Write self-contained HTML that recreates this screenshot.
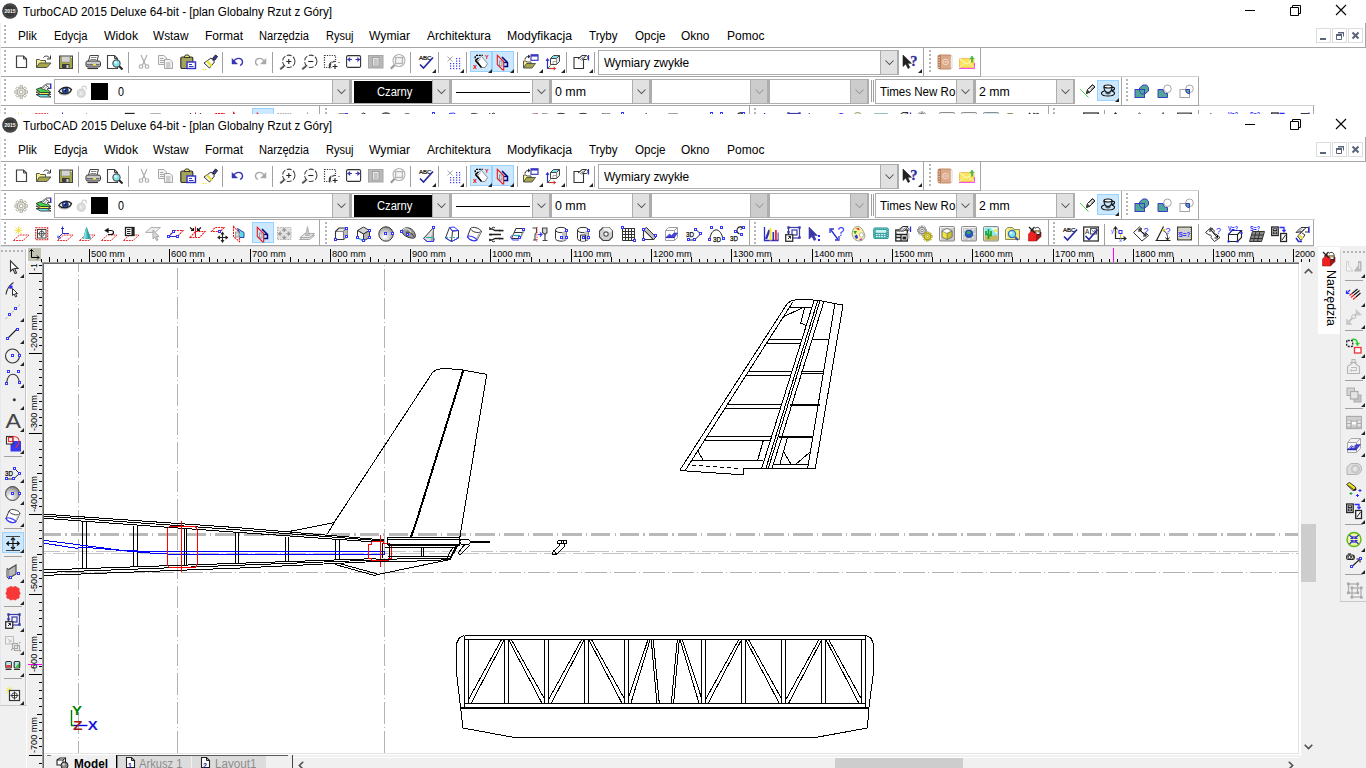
<!DOCTYPE html>
<html lang="pl"><head><meta charset="utf-8"><title>TurboCAD 2015 Deluxe 64-bit - [plan Globalny Rzut z Góry]</title>
<style>
html,body{margin:0;padding:0;background:#fff;}
body{width:1366px;height:768px;overflow:hidden;position:relative;font-family:"Liberation Sans", sans-serif;}
.b{position:absolute;}
.i{position:absolute;overflow:visible;display:block;}
.t{position:absolute;white-space:nowrap;transform-origin:0 50%;font-family:"Liberation Sans", sans-serif;}
.rv{transform-origin:0 0;transform:rotate(-90deg) translate(0,-100%);}
.rcw{transform-origin:0 0;transform:rotate(90deg) translate(0,-100%);}
.w{position:absolute;left:0;width:1366px;overflow:hidden;}
</style></head>
<body>
<div class="w" style="top:0;height:114px;"><div class="b" style="left:0px;top:0px;width:1366px;height:23px;background:#fff;"></div><svg class="i" style="left:2.2px;top:2.6px" width="16" height="16" viewBox="0 0 16 16"><circle cx="8" cy="8" r="7.8" fill="#383838"/><circle cx="8" cy="8" r="6.3" fill="none" stroke="#666" stroke-width="0.6"/><text x="8" y="10.2" font-family='&quot;Liberation Sans&quot;, sans-serif' font-size="6" font-weight="bold" fill="#fff" text-anchor="middle" textLength="11" lengthAdjust="spacingAndGlyphs">2015</text></svg><span id="t1" class="t" style="left:23.00px;top:5.84px;font-size:12px;line-height:12px;color:#000;transform:scaleX(0.9726);">TurboCAD 2015 Deluxe 64-bit - [plan Globalny Rzut z Góry]</span><svg class="i" style="left:1240px;top:0px" width="120" height="20" viewBox="0 0 120 20"><path d="M5 10.5H15" stroke="#000" stroke-width="1"/><path d="M50.5 7.5H58.5V15.5H50.5Z M52.5 7.5V5.5H60.5V13.5H58.5" fill="none" stroke="#000" stroke-width="1"/><path d="M96 5L106 15M106 5L96 15" stroke="#000" stroke-width="1.1"/></svg><div class="b" style="left:0px;top:23px;width:1366px;height:24px;background:#fff;"></div><div class="b" style="left:0px;top:47px;width:1366px;height:1px;background:#a6a6a6;"></div><div class="b" style="left:1365px;top:23px;width:1px;height:24px;background:#a6a6a6;"></div><svg class="i" style="left:4px;top:25px" width="2" height="21"><rect x="0" y="0" width="2" height="2" fill="#b4b4b4"/><rect x="0" y="4" width="2" height="2" fill="#b4b4b4"/><rect x="0" y="8" width="2" height="2" fill="#b4b4b4"/><rect x="0" y="12" width="2" height="2" fill="#b4b4b4"/><rect x="0" y="16" width="2" height="2" fill="#b4b4b4"/></svg><span id="t2" class="t" style="left:18.00px;top:29.84px;font-size:12px;line-height:12px;color:#000;transform:scaleX(0.9822);">Plik</span><span id="t3" class="t" style="left:53.50px;top:29.84px;font-size:12px;line-height:12px;color:#000;transform:scaleX(0.9297);">Edycja</span><span id="t4" class="t" style="left:103.50px;top:29.84px;font-size:12px;line-height:12px;color:#000;transform:scaleX(1.0197);">Widok</span><span id="t5" class="t" style="left:153.00px;top:29.84px;font-size:12px;line-height:12px;color:#000;transform:scaleX(0.9861);">Wstaw</span><span id="t6" class="t" style="left:204.50px;top:29.84px;font-size:12px;line-height:12px;color:#000;transform:scaleX(0.9996);">Format</span><span id="t7" class="t" style="left:258.50px;top:29.84px;font-size:12px;line-height:12px;color:#000;transform:scaleX(0.9254);">Narzędzia</span><span id="t8" class="t" style="left:325.50px;top:29.84px;font-size:12px;line-height:12px;color:#000;transform:scaleX(0.9162);">Rysuj</span><span id="t9" class="t" style="left:369.00px;top:29.84px;font-size:12px;line-height:12px;color:#000;transform:scaleX(1.0108);">Wymiar</span><span id="t10" class="t" style="left:426.50px;top:29.84px;font-size:12px;line-height:12px;color:#000;transform:scaleX(0.9995);">Architektura</span><span id="t11" class="t" style="left:507.00px;top:29.84px;font-size:12px;line-height:12px;color:#000;transform:scaleX(1.0259);">Modyfikacja</span><span id="t12" class="t" style="left:588.50px;top:29.84px;font-size:12px;line-height:12px;color:#000;transform:scaleX(0.9641);">Tryby</span><span id="t13" class="t" style="left:634.50px;top:29.84px;font-size:12px;line-height:12px;color:#000;transform:scaleX(0.9726);">Opcje</span><span id="t14" class="t" style="left:681.00px;top:29.84px;font-size:12px;line-height:12px;color:#000;transform:scaleX(0.9935);">Okno</span><span id="t15" class="t" style="left:726.50px;top:29.84px;font-size:12px;line-height:12px;color:#000;transform:scaleX(1.0038);">Pomoc</span><div class="b" style="left:1316px;top:28px;width:15px;height:15px;background:#fff;border:1px solid #dcdcdc;box-sizing:border-box;"></div><svg class="i" style="left:1316px;top:28px" width="15" height="15" viewBox="0 0 15 15"><rect x="4" y="10" width="6" height="2" fill="#5a6478" stroke="none" stroke-width="1" /></svg><div class="b" style="left:1332px;top:28px;width:15px;height:15px;background:#fff;border:1px solid #dcdcdc;box-sizing:border-box;"></div><svg class="i" style="left:1332px;top:28px" width="15" height="15" viewBox="0 0 15 15"><path d="M6.5 4.5H11.5V8.5 M4.5 6.5H9.5V11.5H4.5Z" fill="none" stroke="#5a6478" stroke-width="1" /><rect x="4" y="6" width="6" height="2" fill="#5a6478" stroke="none" stroke-width="1" /><rect x="6" y="4" width="6" height="1.5" fill="#5a6478" stroke="none" stroke-width="1" /></svg><div class="b" style="left:1348px;top:28px;width:15px;height:15px;background:#fff;border:1px solid #dcdcdc;box-sizing:border-box;"></div><svg class="i" style="left:1348px;top:28px" width="15" height="15" viewBox="0 0 15 15"><path d="M4.5 4.5L10.5 10.5M10.5 4.5L4.5 10.5" fill="none" stroke="#5a6478" stroke-width="2" /></svg><div class="b" style="left:0px;top:48px;width:1366px;height:28px;background:#fff;"></div><div class="b" style="left:0px;top:76px;width:980px;height:1px;background:#a6a6a6;"></div><div class="b" style="left:923px;top:48px;width:1px;height:28px;background:#a6a6a6;"></div><div class="b" style="left:980px;top:48px;width:1px;height:29px;background:#a6a6a6;"></div><svg class="i" style="left:4px;top:50px" width="2" height="24"><rect x="0" y="0" width="2" height="2" fill="#b4b4b4"/><rect x="0" y="4" width="2" height="2" fill="#b4b4b4"/><rect x="0" y="8" width="2" height="2" fill="#b4b4b4"/><rect x="0" y="12" width="2" height="2" fill="#b4b4b4"/><rect x="0" y="16" width="2" height="2" fill="#b4b4b4"/><rect x="0" y="20" width="2" height="2" fill="#b4b4b4"/></svg><svg class="i" style="left:929px;top:50px" width="2" height="24"><rect x="0" y="0" width="2" height="2" fill="#b4b4b4"/><rect x="0" y="4" width="2" height="2" fill="#b4b4b4"/><rect x="0" y="8" width="2" height="2" fill="#b4b4b4"/><rect x="0" y="12" width="2" height="2" fill="#b4b4b4"/><rect x="0" y="16" width="2" height="2" fill="#b4b4b4"/><rect x="0" y="20" width="2" height="2" fill="#b4b4b4"/></svg><div class="b" style="left:470px;top:51px;width:22px;height:21px;background:#cce8ff;border:1px solid #99d1ff;box-sizing:border-box;"></div><div class="b" style="left:492px;top:51px;width:22px;height:21px;background:#cce8ff;border:1px solid #99d1ff;box-sizing:border-box;"></div><svg class="i" style="left:14px;top:54px" width="16" height="16" viewBox="0 0 16 16"><path d="M2.5 2H9.5L12.5 5V13.5H2.5Z" fill="#fff" stroke="#404040" stroke-width="1.2" /><path d="M9.5 2V5H12.5" fill="none" stroke="#404040" stroke-width="1" /></svg><svg class="i" style="left:36px;top:54px" width="16" height="16" viewBox="0 0 16 16"><path d="M0.5 13.5V5.5H3.5L4.5 6.5H9.5V9" fill="#f6f28a" stroke="#555" stroke-width="1" /><path d="M0.5 13.5L3.5 9H15L11 13.5Z" fill="#a5a54a" stroke="#555" stroke-width="1" /><path d="M7.5 3.5C9 1.5 12 1.5 13.5 4" fill="none" stroke="#333" stroke-width="1" /><path d="M14.5 1.5V5H11" fill="none" stroke="#333" stroke-width="1" /></svg><svg class="i" style="left:58px;top:54px" width="16" height="16" viewBox="0 0 16 16"><rect x="1.5" y="2" width="13" height="12.5" fill="#a5a54a" stroke="#444" stroke-width="1" /><rect x="3.5" y="2.5" width="8.5" height="5.5" fill="#d4d4d4" stroke="#888" stroke-width="0.6" /><rect x="4" y="10" width="7.5" height="4.5" fill="#3c3c3c" stroke="none" stroke-width="1" /><rect x="8.5" y="11" width="2" height="3" fill="#d8d8d8" stroke="none" stroke-width="1" /><rect x="13" y="3" width="1" height="1" fill="#fff" stroke="none" stroke-width="1" /></svg><div class="b" style="left:78px;top:52px;width:1px;height:21px;background:#a0a0a0;"></div><svg class="i" style="left:85px;top:54px" width="16" height="16" viewBox="0 0 16 16"><path d="M3.5 7L5 1.5H13.5L12 7" fill="#fff" stroke="#444" stroke-width="1" /><path d="M6 3.5H11.5M5.5 5.5H11" fill="none" stroke="#666" stroke-width="0.8" /><path d="M1 8.5Q1 7 3 7H13Q15.5 7 15.5 8.5V11.5Q15.5 13 13 13H3Q1 13 1 11.5Z" fill="#c8c8c8" stroke="#333" stroke-width="1" /><rect x="2" y="10.2" width="12.5" height="1.2" fill="#555" stroke="none" stroke-width="1" /><rect x="8" y="10" width="3" height="1.4" fill="#f2e640" stroke="none" stroke-width="1" /><path d="M2.5 14.5H13" fill="none" stroke="#333" stroke-width="1.2" /></svg><svg class="i" style="left:107px;top:54px" width="16" height="16" viewBox="0 0 16 16"><path d="M0.5 1.5H7.5L10.5 4.5V14.5H0.5Z" fill="#fff" stroke="#404040" stroke-width="1.1" /><path d="M7.5 1.5V4.5H10.5" fill="none" stroke="#404040" stroke-width="1" /><circle cx="9.5" cy="9.5" r="3.6" fill="#7fe7ee" stroke="#555" stroke-width="1.2" /><circle cx="8.6" cy="8.6" r="1.3" fill="#d8fbff" stroke="none" stroke-width="1" /><path d="M12.2 12.2L15.5 15.5" fill="none" stroke="#222" stroke-width="2" /></svg><div class="b" style="left:128px;top:52px;width:1px;height:21px;background:#a0a0a0;"></div><svg class="i" style="left:136px;top:54px" width="16" height="16" viewBox="0 0 16 16"><path d="M5 1L9.5 11M11 1L6.5 11" fill="none" stroke="#a8a8a8" stroke-width="1.1" /><circle cx="5" cy="12.5" r="1.8" fill="none" stroke="#a8a8a8" stroke-width="1.1" /><circle cx="11" cy="12.5" r="1.8" fill="none" stroke="#a8a8a8" stroke-width="1.1" /></svg><svg class="i" style="left:158px;top:54px" width="16" height="16" viewBox="0 0 16 16"><path d="M0.5 1.5H6L8.5 4V10.5H0.5Z" fill="#f4f4f4" stroke="#a8a8a8" stroke-width="1" /><path d="M2 4.5H5.5M2 6.5H6.5M2 8.5H6.5" fill="none" stroke="#a8a8a8" stroke-width="1" /><path d="M6.5 5.5H12L14.5 8V14.5H6.5Z" fill="#f4f4f4" stroke="#a8a8a8" stroke-width="1" /><path d="M8 9H12.5M8 11H12.5M8 13H12.5" fill="none" stroke="#a8a8a8" stroke-width="1" /></svg><svg class="i" style="left:180px;top:54px" width="16" height="16" viewBox="0 0 16 16"><rect x="0.8" y="3" width="12" height="11.5" fill="#a3a35a" stroke="#333" stroke-width="1.2" rx="1.5"/><path d="M4 3.5L5.5 1H8.5L10 3.5Z" fill="#f0e860" stroke="#333" stroke-width="1" /><rect x="7" y="8" width="8.5" height="6.5" fill="#fff" stroke="#3030c8" stroke-width="1.4" /><path d="M9 10.5H12M9 12.5H13.5" fill="none" stroke="#3030c8" stroke-width="1.2" /></svg><svg class="i" style="left:202px;top:54px" width="16" height="16" viewBox="0 0 16 16"><path d="M10.5 4.5L13.5 1L15.5 2.5L12.5 6.5Z" fill="#3838a8" stroke="#222" stroke-width="1" /><path d="M2 9L9 4L12.5 8L7.5 14Z" fill="#f8f8f8" stroke="#333" stroke-width="1" /><path d="M5 7L10 12.5" fill="none" stroke="#e8e030" stroke-width="2.2" /><path d="M0.5 15.5H5.5" fill="none" stroke="#e8e030" stroke-width="1.2" stroke-dasharray="1.5 1"/></svg><div class="b" style="left:222px;top:52px;width:1px;height:21px;background:#a0a0a0;"></div><svg class="i" style="left:230px;top:54px" width="16" height="16" viewBox="0 0 16 16"><path d="M3.5 7.5C6 3 12 3.5 12.5 7.5C12.8 10 11 11 10 11.5" fill="none" stroke="#3535b5" stroke-width="1.35" /><path d="M2 4.5V10H7.5Z" fill="#3535b5" stroke="#3535b5" stroke-width="0.5" /></svg><svg class="i" style="left:252px;top:54px" width="16" height="16" viewBox="0 0 16 16"><path d="M12.5 7.5C10 3 4 3.5 3.5 7.5C3.2 10 5 11 6 11.5" fill="none" stroke="#a8a8a8" stroke-width="1.35" /><path d="M14 4.5V10H8.5Z" fill="#a8a8a8" stroke="#a8a8a8" stroke-width="0.5" /></svg><div class="b" style="left:272px;top:52px;width:1px;height:21px;background:#a0a0a0;"></div><svg class="i" style="left:279px;top:54px" width="16" height="16" viewBox="0 0 16 16"><circle cx="9.8" cy="7.3" r="6.2" fill="none" stroke="#404040" stroke-width="1.05" stroke-dasharray="5 1.6"/><path d="M7.3 7.5H12.3M9.8 5V10" fill="none" stroke="#222" stroke-width="1.1" /><path d="M5 12L1.2 15.3" fill="none" stroke="#444" stroke-width="2" /><path d="M4 12L1.2 14.4" fill="none" stroke="#aaa" stroke-width="0.8" /></svg><svg class="i" style="left:301px;top:54px" width="16" height="16" viewBox="0 0 16 16"><circle cx="9.8" cy="7.3" r="6.2" fill="none" stroke="#404040" stroke-width="1.05" stroke-dasharray="5 1.6"/><path d="M7.3 7.5H12.3" fill="none" stroke="#222" stroke-width="1.1" /><path d="M5 12L1.2 15.3" fill="none" stroke="#444" stroke-width="2" /><path d="M4 12L1.2 14.4" fill="none" stroke="#aaa" stroke-width="0.8" /></svg><svg class="i" style="left:324px;top:54px" width="16" height="16" viewBox="0 0 16 16"><rect x="0.5" y="1.5" width="11" height="12" fill="none" stroke="#333" stroke-width="1.2" stroke-dasharray="1.2 1.2"/><path d="M11.5 7.5C7 6.5 4 10.5 6 14.5" fill="#fff" stroke="#333" stroke-width="1.1" /><rect x="7.5" y="7" width="8" height="9" fill="#fff" stroke="none" stroke-width="1" /><path d="M12 7.5C8 7 5 10.5 6.5 14.5" fill="none" stroke="#333" stroke-width="1.1" stroke-dasharray="4 1.5"/><path d="M8.5 12.5H13.5M11 10V15" fill="none" stroke="#222" stroke-width="1.1" /><rect x="14.5" y="8" width="1" height="1" fill="#333" stroke="none" stroke-width="1" /></svg><svg class="i" style="left:346px;top:54px" width="16" height="16" viewBox="0 0 16 16"><rect x="0.6" y="1.6" width="14" height="11.8" fill="#fff" stroke="#333" stroke-width="1.1" rx="1.5"/><path d="M1.5 5.5H6M9.5 5.5H14" fill="none" stroke="#3535b5" stroke-width="1.2" /><path d="M1.5 5.5L4 3.3V7.7Z M14 5.5L11.5 3.3V7.7Z" fill="#3535b5" stroke="#3535b5" stroke-width="0.3" /></svg><svg class="i" style="left:368px;top:54px" width="16" height="16" viewBox="0 0 16 16"><rect x="0.5" y="1.5" width="14.5" height="12.5" fill="#b9b9b9" stroke="#a5a5a5" stroke-width="1" /><rect x="4.5" y="3.5" width="6.5" height="8.5" fill="#e6e6e6" stroke="#999" stroke-width="0.8" /><path d="M6 6H9.5M6 8H9.5M6 10H9.5" fill="none" stroke="#9a9a9a" stroke-width="0.9" /></svg><svg class="i" style="left:390px;top:54px" width="16" height="16" viewBox="0 0 16 16"><circle cx="9" cy="6.5" r="6" fill="none" stroke="#b0b0b0" stroke-width="1.1" /><rect x="5.5" y="3.5" width="7" height="6" fill="#f4f4f4" stroke="#b5b5b5" stroke-width="1.4" /><path d="M4.5 11L0.8 14.8" fill="none" stroke="#9a9a9a" stroke-width="2.2" /></svg><div class="b" style="left:410px;top:52px;width:1px;height:21px;background:#a0a0a0;"></div><svg class="i" style="left:418px;top:54px" width="16" height="16" viewBox="0 0 16 16"><text x="1" y="6.3" font-family="Liberation Sans, sans-serif" font-size="6.2" fill="#000"  textLength="12.5" lengthAdjust="spacingAndGlyphs" stroke="#000" stroke-width=".2">ABC</text><path d="M2 10.5L5.5 14L15 3.5" fill="none" stroke="#2b2ba0" stroke-width="1.7" /></svg><div class="b" style="left:438px;top:52px;width:1px;height:21px;background:#a0a0a0;"></div><svg class="i" style="left:445px;top:54px" width="16" height="16" viewBox="0 0 16 16"><path d="M2.5 2.5L7.5 7.5M7.5 2.5L2.5 7.5" fill="none" stroke="#aaa" stroke-width="1" /><rect x="5" y="9" width="1.2" height="1.2" fill="#3838ff" stroke="none" stroke-width="1" /><rect x="5" y="11.5" width="1.2" height="1.2" fill="#3838ff" stroke="none" stroke-width="1" /><rect x="5" y="14" width="1.2" height="1.2" fill="#3838ff" stroke="none" stroke-width="1" /><rect x="8" y="9" width="1.2" height="1.2" fill="#3838ff" stroke="none" stroke-width="1" /><rect x="8" y="11.5" width="1.2" height="1.2" fill="#3838ff" stroke="none" stroke-width="1" /><rect x="8" y="14" width="1.2" height="1.2" fill="#3838ff" stroke="none" stroke-width="1" /><rect x="11" y="9" width="1.2" height="1.2" fill="#3838ff" stroke="none" stroke-width="1" /><rect x="11" y="11.5" width="1.2" height="1.2" fill="#3838ff" stroke="none" stroke-width="1" /><rect x="11" y="14" width="1.2" height="1.2" fill="#3838ff" stroke="none" stroke-width="1" /><rect x="14" y="9" width="1.2" height="1.2" fill="#3838ff" stroke="none" stroke-width="1" /><rect x="14" y="11.5" width="1.2" height="1.2" fill="#3838ff" stroke="none" stroke-width="1" /><rect x="14" y="14" width="1.2" height="1.2" fill="#3838ff" stroke="none" stroke-width="1" /><rect x="11" y="4" width="1.2" height="1.2" fill="#3838ff" stroke="none" stroke-width="1" /><rect x="11" y="6.5" width="1.2" height="1.2" fill="#3838ff" stroke="none" stroke-width="1" /><rect x="14" y="4" width="1.2" height="1.2" fill="#3838ff" stroke="none" stroke-width="1" /><rect x="14" y="6.5" width="1.2" height="1.2" fill="#3838ff" stroke="none" stroke-width="1" /></svg><div class="b" style="left:466px;top:52px;width:1px;height:21px;background:#a0a0a0;"></div><svg class="i" style="left:473px;top:54px" width="16" height="16" viewBox="0 0 16 16"><path d="M3.5 5.5L8.5 2.5L14.5 9.5L12 13.5H8.5Z" fill="#fff" stroke="#8a8a8a" stroke-width="1" /><path d="M3 1.4H9.8" fill="none" stroke="#000" stroke-width="1.3" stroke-dasharray="2 .8"/><path d="M2.2 2.3V4.2" fill="none" stroke="#000" stroke-width="1.4" /><path d="M2.2 6.5L5.5 4M2.5 6.5L8.5 13.5" fill="none" stroke="#000" stroke-width="1.5" /><path d="M5 7L7.5 5" fill="none" stroke="#777" stroke-width="0.8" /><text x="12" y="4.6" font-family="Liberation Sans, sans-serif" font-size="5.5" fill="#f00000" font-weight="bold" >Y</text><text x="0" y="15.2" font-family="Liberation Sans, sans-serif" font-size="7" fill="#f00000" font-weight="bold" >x</text></svg><svg class="i" style="left:495px;top:54px" width="16" height="16" viewBox="0 0 16 16"><rect x="4.5" y="7" width="2.5" height="5" fill="#d4dce6" stroke="#8a8a8a" stroke-width="0.8" /><path d="M7 3L12.5 8.5V12.5H8.7" fill="none" stroke="#000080" stroke-width="1.5" /><path d="M8.7 8.5H12.5" fill="none" stroke="#000080" stroke-width="1.3" /><path d="M2.3 1.3V10.5L7.8 16H8.7V7.5Z" fill="none" stroke="#e81818" stroke-width="1.1" /></svg><div class="b" style="left:517px;top:52px;width:1px;height:21px;background:#a0a0a0;"></div><svg class="i" style="left:523px;top:54px" width="16" height="16" viewBox="0 0 16 16"><rect x="8" y="0.8" width="7" height="5.5" fill="#fff" stroke="#3a3ac0" stroke-width="1.2" /><rect x="8" y="0.8" width="7" height="1.8" fill="#3a3ac0" stroke="none" stroke-width="1" /><path d="M0.5 14V7H3L4 8H8V9.5" fill="#f6f28a" stroke="#555" stroke-width="1" /><path d="M0.5 14L3.5 9.5H12.5L9 14Z" fill="#a5a54a" stroke="#555" stroke-width="1" /><path d="M2 5.5C2 3 4 2.5 6.5 2.5" fill="none" stroke="#222" stroke-width="1" /><path d="M5 1L7 2.5L5 4" fill="none" stroke="#222" stroke-width="1" /></svg><svg class="i" style="left:545px;top:54px" width="16" height="16" viewBox="0 0 16 16"><path d="M5.5 4.5L8.5 1.5H14.5L11.5 4.5Z" fill="#7fe4ea" stroke="#444" stroke-width="1" /><path d="M5.5 4.5H11.5V10.5H5.5Z" fill="#fff" stroke="#444" stroke-width="1" /><path d="M11.5 4.5L14.5 1.5V7.5L11.5 10.5" fill="#e8e8e8" stroke="#444" stroke-width="1" /><path d="M8 10V7.5H11" fill="none" stroke="#999" stroke-width="0.8" /><path d="M2.5 5V14.5H10" fill="none" stroke="#2b2bd0" stroke-width="1.2" /><path d="M1 7L2.5 4.5L4 7" fill="none" stroke="#2b2bd0" stroke-width="1" /><path d="M2.5 14.5L5.5 11.5" fill="none" stroke="#20a020" stroke-width="1" /><path d="M4 14.5H10.5" fill="none" stroke="#d03030" stroke-width="1.2" /><path d="M8.5 13L10.5 14.5L8.5 16" fill="none" stroke="#d03030" stroke-width="1" /></svg><div class="b" style="left:566px;top:52px;width:1px;height:21px;background:#a0a0a0;"></div><svg class="i" style="left:573px;top:54px" width="16" height="16" viewBox="0 0 16 16"><path d="M1 3.5H8.5L10.5 6V14.5H1Z" fill="#fff" stroke="#333" stroke-width="1.1" /><path d="M5 5L9 1.5H13L10.5 4.5" fill="#fff" stroke="#333" stroke-width="1" /><path d="M5.5 5L9 2M7 6L10.5 3M8.5 6.5L11.5 4" fill="none" stroke="#555" stroke-width="0.8" /><path d="M13 1.5C15.5 2 15.5 5 13.5 5.5H10.5" fill="none" stroke="#333" stroke-width="1" /><path d="M15.5 1V6.5" fill="none" stroke="#2b2bd0" stroke-width="1.2" /></svg><div class="b" style="left:594px;top:52px;width:1px;height:21px;background:#a0a0a0;"></div><svg class="i" style="left:432.3px;top:68.8px" width="4" height="4"><path d="M4 0V4H0Z" fill="#222"/></svg><svg class="i" style="left:460.3px;top:68.8px" width="4" height="4"><path d="M4 0V4H0Z" fill="#222"/></svg><svg class="i" style="left:488.3px;top:68.8px" width="4" height="4"><path d="M4 0V4H0Z" fill="#222"/></svg><svg class="i" style="left:510.3px;top:68.8px" width="4" height="4"><path d="M4 0V4H0Z" fill="#222"/></svg><svg class="i" style="left:538.5px;top:68.8px" width="4" height="4"><path d="M4 0V4H0Z" fill="#222"/></svg><svg class="i" style="left:560.8px;top:68.8px" width="4" height="4"><path d="M4 0V4H0Z" fill="#222"/></svg><svg class="i" style="left:588.8px;top:68.8px" width="4" height="4"><path d="M4 0V4H0Z" fill="#222"/></svg><svg class="i" style="left:918.3px;top:68.8px" width="4" height="4"><path d="M4 0V4H0Z" fill="#222"/></svg><div class="b" style="left:598px;top:50px;width:301px;height:25px;background:#fff;border:1px solid #adadad;box-sizing:border-box;"></div><div class="b" style="left:880px;top:51px;width:18px;height:23px;background:#e1e1e1;border-left:1px solid #adadad;border-right:1px solid #adadad;box-sizing:border-box;"></div><svg class="i" style="left:884.5px;top:60.3px" width="9" height="6"><path d="M0.5 0.5L4.5 4.5L8.5 0.5" fill="none" stroke="#505050" stroke-width="1.05"/></svg><span id="t16" class="t" style="left:604.20px;top:57.24px;font-size:12px;line-height:12px;color:#000;transform:scaleX(0.9906);">Wymiary zwykłe</span><svg class="i" style="left:902px;top:54px" width="16" height="16" viewBox="0 0 16 16"><path d="M1 1V12.5L3.8 10L6 14.5L7.8 13.6L5.7 9.3H9.5Z" fill="#222" stroke="#222" stroke-width="0.6" /><text x="8.2" y="11.5" font-family="Liberation Serif, serif" font-size="14.5" font-weight="bold" fill="#2e2a9c" stroke="#2e2a9c" stroke-width=".3">?</text></svg><svg class="i" style="left:937px;top:54px" width="16" height="16" viewBox="0 0 16 16"><rect x="1" y="1" width="13.5" height="14" fill="#dba98a" stroke="#c08a66" stroke-width="1" rx="1.8"/><rect x="1" y="1" width="3" height="14" fill="#b9805c" stroke="none" stroke-width="0" rx="1"/><circle cx="8.5" cy="8" r="2.8" fill="none" stroke="#f3dccf" stroke-width="1" /><circle cx="8.5" cy="8" r="0.9" fill="#f3dccf" stroke="none" stroke-width="1" /><rect x="14" y="2" width="1.5" height="12" fill="#f2f2f2" stroke="#ddd" stroke-width="0.5" /><rect x="1.4" y="3" width="1.4" height="0.9" fill="#f0e0d6" stroke="none" stroke-width="1" /><rect x="1.4" y="5.5" width="1.4" height="0.9" fill="#f0e0d6" stroke="none" stroke-width="1" /><rect x="1.4" y="8" width="1.4" height="0.9" fill="#f0e0d6" stroke="none" stroke-width="1" /><rect x="1.4" y="10.5" width="1.4" height="0.9" fill="#f0e0d6" stroke="none" stroke-width="1" /><rect x="1.4" y="13" width="1.4" height="0.9" fill="#f0e0d6" stroke="none" stroke-width="1" /></svg><svg class="i" style="left:959px;top:54px" width="16" height="16" viewBox="0 0 16 16"><rect x="0.5" y="4.5" width="14.5" height="9" fill="#f7e45c" stroke="#f0a030" stroke-width="0.6" /><path d="M0.5 4.5L7.5 10L15 4.5" fill="none" stroke="#fdf6b0" stroke-width="1.2" /><path d="M0.5 13.5L5.5 9M15 13.5L10 9" fill="none" stroke="#fdf6b0" stroke-width="1" /><path d="M0 14.5H15.5M15.5 9V14.5" fill="none" stroke="#f850f0" stroke-width="1" /><path d="M13 8.5V2.5" fill="none" stroke="#48b848" stroke-width="1.8" /><path d="M10.8 5L13 2L15.2 5Z" fill="#48b848" stroke="#48b848" stroke-width="0.4" /></svg><div class="b" style="left:0px;top:77px;width:1366px;height:28px;background:#fff;"></div><div class="b" style="left:0px;top:105px;width:1199px;height:1px;background:#a6a6a6;"></div><div class="b" style="left:1121px;top:77px;width:1px;height:28px;background:#a6a6a6;"></div><div class="b" style="left:1198px;top:77px;width:1px;height:29px;background:#a6a6a6;"></div><div class="b" style="left:981px;top:76px;width:218px;height:1px;background:#d0d0d0;"></div><svg class="i" style="left:4px;top:79px" width="2" height="24"><rect x="0" y="0" width="2" height="2" fill="#b4b4b4"/><rect x="0" y="4" width="2" height="2" fill="#b4b4b4"/><rect x="0" y="8" width="2" height="2" fill="#b4b4b4"/><rect x="0" y="12" width="2" height="2" fill="#b4b4b4"/><rect x="0" y="16" width="2" height="2" fill="#b4b4b4"/><rect x="0" y="20" width="2" height="2" fill="#b4b4b4"/></svg><svg class="i" style="left:1126px;top:79px" width="2" height="24"><rect x="0" y="0" width="2" height="2" fill="#b4b4b4"/><rect x="0" y="4" width="2" height="2" fill="#b4b4b4"/><rect x="0" y="8" width="2" height="2" fill="#b4b4b4"/><rect x="0" y="12" width="2" height="2" fill="#b4b4b4"/><rect x="0" y="16" width="2" height="2" fill="#b4b4b4"/><rect x="0" y="20" width="2" height="2" fill="#b4b4b4"/></svg><svg class="i" style="left:13px;top:83px" width="16" height="16" viewBox="0 0 16 16"><g transform="translate(1.2 1.6) scale(.87)"><rect x="-1.3" y="-7.2" width="2.6" height="3" fill="none" stroke="#9a9a8a" stroke-width=".9" transform="translate(8 8.5) rotate(0)"/><rect x="-1.3" y="-7.2" width="2.6" height="3" fill="none" stroke="#9a9a8a" stroke-width=".9" transform="translate(8 8.5) rotate(45)"/><rect x="-1.3" y="-7.2" width="2.6" height="3" fill="none" stroke="#9a9a8a" stroke-width=".9" transform="translate(8 8.5) rotate(90)"/><rect x="-1.3" y="-7.2" width="2.6" height="3" fill="none" stroke="#9a9a8a" stroke-width=".9" transform="translate(8 8.5) rotate(135)"/><rect x="-1.3" y="-7.2" width="2.6" height="3" fill="none" stroke="#9a9a8a" stroke-width=".9" transform="translate(8 8.5) rotate(180)"/><rect x="-1.3" y="-7.2" width="2.6" height="3" fill="none" stroke="#9a9a8a" stroke-width=".9" transform="translate(8 8.5) rotate(225)"/><rect x="-1.3" y="-7.2" width="2.6" height="3" fill="none" stroke="#9a9a8a" stroke-width=".9" transform="translate(8 8.5) rotate(270)"/><rect x="-1.3" y="-7.2" width="2.6" height="3" fill="none" stroke="#9a9a8a" stroke-width=".9" transform="translate(8 8.5) rotate(315)"/><circle cx="8" cy="8.5" r="4.6" fill="#e4e4e0" stroke="#a0a090" stroke-width="1" /><circle cx="8" cy="8.5" r="2.1" fill="#fff" stroke="#a0a090" stroke-width="1" /></g></svg><svg class="i" style="left:35px;top:83px" width="16" height="16" viewBox="0 0 16 16"><path d="M1 11.5L5.5 14H16L12 11.5Z" fill="#6ae8f0" stroke="#333" stroke-width="0.9" /><path d="M1 9L5.5 11.5H16L12 9Z" fill="#f6ee50" stroke="#333" stroke-width="0.9" /><path d="M1 6.5L5.5 9.5H16L11.5 5.5L6 4.5Z" fill="#40d848" stroke="#333" stroke-width="0.9" /><path d="M6 5.5L10 1.5L14 4.5L11.5 7.5Z" fill="#fff" stroke="#444" stroke-width="0.9" /><path d="M7.5 5.5L10.5 2.5M9 6.5L12 3.5" fill="none" stroke="#666" stroke-width="0.8" /><path d="M11 1H15.5V5.5H12.5" fill="none" stroke="#333" stroke-width="0.9" /><path d="M15.8 0.5V6" fill="none" stroke="#2b2bd0" stroke-width="1.2" /></svg><div class="b" style="left:54px;top:79px;width:297px;height:25px;background:#fff;border:1px solid #adadad;box-sizing:border-box;"></div><div class="b" style="left:332px;top:80px;width:18px;height:23px;background:#e1e1e1;border-left:1px solid #adadad;border-right:1px solid #adadad;box-sizing:border-box;"></div><svg class="i" style="left:336.5px;top:89.3px" width="9" height="6"><path d="M0.5 0.5L4.5 4.5L8.5 0.5" fill="none" stroke="#505050" stroke-width="1.05"/></svg><svg class="i" style="left:58px;top:83px" width="16" height="16" viewBox="0 0 16 16"><path d="M0.8 8.5C3.5 3.5 10.5 3 13.5 6.5C12 11 5 12.5 0.8 8.5Z" fill="#fff" stroke="#222" stroke-width="1.3" /><circle cx="7.3" cy="7.6" r="3" fill="#2b4fb5" stroke="#112" stroke-width="0.8" /><circle cx="7.3" cy="7.6" r="1.2" fill="#0a0a30" stroke="none" stroke-width="1" /><circle cx="6.3" cy="6.6" r="0.8" fill="#cfe0ff" stroke="none" stroke-width="1" /><path d="M1 10C4 13 10 12.5 13 9" fill="none" stroke="#888" stroke-width="0.8" /></svg><svg class="i" style="left:75px;top:83px" width="16" height="16" viewBox="0 0 16 16"><g transform="translate(1.2 2.2) scale(.84)"><path d="M7 7V3.5Q7 1 9.5 1Q12 1 12 3.5V5" fill="none" stroke="#c9c9c9" stroke-width="1.3" /><circle cx="6" cy="9.5" r="4.8" fill="#dedede" stroke="#c4c4c4" stroke-width="1" /><circle cx="5.5" cy="9.3" r="1.2" fill="#f3f3f3" stroke="none" stroke-width="1" /><path d="M5.5 9.5V11.5" fill="none" stroke="#f3f3f3" stroke-width="1" /></g></svg><div class="b" style="left:91px;top:83px;width:17px;height:17px;background:#000;"></div><span id="t17" class="t" style="left:117.50px;top:86.44px;font-size:12px;line-height:12px;color:#000;transform:scaleX(0.8972);">0</span><div class="b" style="left:351px;top:79px;width:100px;height:25px;background:#fff;border:1px solid #adadad;box-sizing:border-box;"></div><div class="b" style="left:354px;top:81px;width:78px;height:22px;background:#000;"></div><div class="b" style="left:432px;top:80px;width:18px;height:23px;background:#e1e1e1;border-left:1px solid #adadad;border-right:1px solid #adadad;box-sizing:border-box;"></div><svg class="i" style="left:436.5px;top:89.3px" width="9" height="6"><path d="M0.5 0.5L4.5 4.5L8.5 0.5" fill="none" stroke="#505050" stroke-width="1.05"/></svg><span id="t18" class="t" style="left:376.50px;top:86.44px;font-size:12px;line-height:12px;color:#fff;transform:scaleX(0.9312);">Czarny</span><div class="b" style="left:451px;top:79px;width:100px;height:25px;background:#fff;border:1px solid #adadad;box-sizing:border-box;"></div><div class="b" style="left:532px;top:80px;width:18px;height:23px;background:#e1e1e1;border-left:1px solid #adadad;border-right:1px solid #adadad;box-sizing:border-box;"></div><svg class="i" style="left:536.5px;top:89.3px" width="9" height="6"><path d="M0.5 0.5L4.5 4.5L8.5 0.5" fill="none" stroke="#505050" stroke-width="1.05"/></svg><div class="b" style="left:456px;top:92px;width:74px;height:1px;background:#000;"></div><div class="b" style="left:551px;top:79px;width:100px;height:25px;background:#fff;border:1px solid #adadad;box-sizing:border-box;"></div><div class="b" style="left:632px;top:80px;width:18px;height:23px;background:#e1e1e1;border-left:1px solid #adadad;border-right:1px solid #adadad;box-sizing:border-box;"></div><svg class="i" style="left:636.5px;top:89.3px" width="9" height="6"><path d="M0.5 0.5L4.5 4.5L8.5 0.5" fill="none" stroke="#505050" stroke-width="1.05"/></svg><span id="t19" class="t" style="left:555.00px;top:86.44px;font-size:12px;line-height:12px;color:#000;transform:scaleX(1.0333);">0 mm</span><div class="b" style="left:651px;top:79px;width:118px;height:25px;background:#fff;border:1px solid #adadad;box-sizing:border-box;"></div><div class="b" style="left:750px;top:80px;width:18px;height:23px;background:#cccccc;border-left:1px solid #adadad;border-right:1px solid #adadad;box-sizing:border-box;"></div><svg class="i" style="left:754.5px;top:89.3px" width="9" height="6"><path d="M0.5 0.5L4.5 4.5L8.5 0.5" fill="none" stroke="#9a9a9a" stroke-width="1.05"/></svg><div class="b" style="left:769px;top:79px;width:100px;height:25px;background:#fff;border:1px solid #adadad;box-sizing:border-box;"></div><div class="b" style="left:850px;top:80px;width:18px;height:23px;background:#cccccc;border-left:1px solid #adadad;border-right:1px solid #adadad;box-sizing:border-box;"></div><svg class="i" style="left:854.5px;top:89.3px" width="9" height="6"><path d="M0.5 0.5L4.5 4.5L8.5 0.5" fill="none" stroke="#9a9a9a" stroke-width="1.05"/></svg><div class="b" style="left:871px;top:80px;width:1px;height:22px;background:#a0a0a0;"></div><div class="b" style="left:873px;top:80px;width:1px;height:22px;background:#a0a0a0;"></div><div class="b" style="left:875px;top:79px;width:100px;height:25px;background:#fff;border:1px solid #adadad;box-sizing:border-box;"></div><div class="b" style="left:956px;top:80px;width:18px;height:23px;background:#e1e1e1;border-left:1px solid #adadad;border-right:1px solid #adadad;box-sizing:border-box;"></div><svg class="i" style="left:960.5px;top:89.3px" width="9" height="6"><path d="M0.5 0.5L4.5 4.5L8.5 0.5" fill="none" stroke="#505050" stroke-width="1.05"/></svg><span id="t20" class="t" style="left:880.40px;top:86.44px;font-size:12px;line-height:12px;color:#000;transform:scaleX(0.9638);">Times New Ro</span><div class="b" style="left:975px;top:79px;width:100px;height:25px;background:#fff;border:1px solid #adadad;box-sizing:border-box;"></div><div class="b" style="left:1056px;top:80px;width:18px;height:23px;background:#e1e1e1;border-left:1px solid #adadad;border-right:1px solid #adadad;box-sizing:border-box;"></div><svg class="i" style="left:1060.5px;top:89.3px" width="9" height="6"><path d="M0.5 0.5L4.5 4.5L8.5 0.5" fill="none" stroke="#505050" stroke-width="1.05"/></svg><span id="t21" class="t" style="left:978.75px;top:86.44px;font-size:12px;line-height:12px;color:#000;transform:scaleX(1.0250);">2 mm</span><svg class="i" style="left:1079px;top:83px" width="16" height="16" viewBox="0 0 16 16"><path d="M1 6L9.5 14.5" fill="none" stroke="#30d030" stroke-width="0.9" /><path d="M7.5 10.5L8.5 6.5L13.5 1.5L16 4L11 9Z" fill="#fff" stroke="#222" stroke-width="1" /><path d="M7.5 10.5L8.5 7L10.8 9.2Z" fill="#444" stroke="#222" stroke-width="0.5" /><path d="M10 5.5L14 1.8M11.5 7L15.3 3.3" fill="none" stroke="#333" stroke-width="0.9" /></svg><div class="b" style="left:1097px;top:80px;width:22px;height:21px;background:#cce8ff;border:1px solid #99d1ff;box-sizing:border-box;"></div><svg class="i" style="left:1100px;top:83px" width="16" height="16" viewBox="0 0 16 16"><path d="M4 3.5C4 1.5 12 1.5 12 3.5C12 5.5 4 5.5 4 3.5Z" fill="#fff" stroke="#111" stroke-width="1.2" /><path d="M4 3.5C4 8.5 6 9.5 8 9.5C10 9.5 12 8.5 12 3.5" fill="none" stroke="#111" stroke-width="1.2" /><path d="M12 4.5C15.5 3.5 15.5 7.5 11.3 7.5" fill="none" stroke="#111" stroke-width="1.1" /><path d="M4.5 8C0 9 0 13 8 13C16 13 16 9 11.5 8" fill="none" stroke="#111" stroke-width="1.2" /><path d="M5.5 10C6.5 11.2 9.5 11.2 10.5 10" fill="none" stroke="#111" stroke-width="1" /></svg><svg class="i" style="left:1115.3px;top:97.8px" width="4" height="4"><path d="M4 0V4H0Z" fill="#222"/></svg><svg class="i" style="left:1134px;top:84px" width="16" height="16" viewBox="0 0 16 16"><path d="M5.5 4L9 1H12.5L14.5 3.5V7L11 10H7.5L5.5 7.5Z" fill="#4fa79a" stroke="#3c3cc0" stroke-width="1" /><rect x="1" y="5.5" width="9.5" height="8" fill="#4fa79a" stroke="#3c3cc0" stroke-width="1" /><path d="M5.5 5.5V7.5L7.5 10H10.5" fill="none" stroke="#3c3cc0" stroke-width="1" /></svg><svg class="i" style="left:1156.5px;top:84px" width="16" height="16" viewBox="0 0 16 16"><circle cx="10.5" cy="4.8" r="3.8" fill="#fff" stroke="#9a9a9a" stroke-width="0.9" /><path d="M1 5.5H6L6.5 8L8.5 9.5H10.5V13.5H1Z" fill="#4fa79a" stroke="#3c3cc0" stroke-width="1" /></svg><svg class="i" style="left:1178.5px;top:84px" width="16" height="16" viewBox="0 0 16 16"><rect x="1" y="5.5" width="9.5" height="8" fill="#fff" stroke="#9a9a9a" stroke-width="0.9" /><circle cx="10.5" cy="4.8" r="3.8" fill="none" stroke="#9a9a9a" stroke-width="0.9" /><path d="M6.8 5.5H10.5V9.5H9L7 8Z" fill="#4fa79a" stroke="#3c3cc0" stroke-width="1" /></svg><div class="b" style="left:0px;top:106px;width:1366px;height:28px;background:#fff;"></div><div class="b" style="left:0px;top:131px;width:1314px;height:1px;background:#a6a6a6;"></div><div class="b" style="left:0px;top:132px;width:1314px;height:1px;background:#dedede;"></div><div class="b" style="left:319px;top:106px;width:1px;height:26px;background:#a6a6a6;"></div><div class="b" style="left:749px;top:106px;width:1px;height:26px;background:#a6a6a6;"></div><div class="b" style="left:1048px;top:106px;width:1px;height:26px;background:#a6a6a6;"></div><div class="b" style="left:1313px;top:106px;width:1px;height:26px;background:#a6a6a6;"></div><div class="b" style="left:1199px;top:105px;width:116px;height:1px;background:#d0d0d0;"></div><svg class="i" style="left:4px;top:108px" width="2" height="24"><rect x="0" y="0" width="2" height="2" fill="#b4b4b4"/><rect x="0" y="4" width="2" height="2" fill="#b4b4b4"/><rect x="0" y="8" width="2" height="2" fill="#b4b4b4"/><rect x="0" y="12" width="2" height="2" fill="#b4b4b4"/><rect x="0" y="16" width="2" height="2" fill="#b4b4b4"/><rect x="0" y="20" width="2" height="2" fill="#b4b4b4"/></svg><svg class="i" style="left:325px;top:108px" width="2" height="24"><rect x="0" y="0" width="2" height="2" fill="#b4b4b4"/><rect x="0" y="4" width="2" height="2" fill="#b4b4b4"/><rect x="0" y="8" width="2" height="2" fill="#b4b4b4"/><rect x="0" y="12" width="2" height="2" fill="#b4b4b4"/><rect x="0" y="16" width="2" height="2" fill="#b4b4b4"/><rect x="0" y="20" width="2" height="2" fill="#b4b4b4"/></svg><svg class="i" style="left:754px;top:108px" width="2" height="24"><rect x="0" y="0" width="2" height="2" fill="#b4b4b4"/><rect x="0" y="4" width="2" height="2" fill="#b4b4b4"/><rect x="0" y="8" width="2" height="2" fill="#b4b4b4"/><rect x="0" y="12" width="2" height="2" fill="#b4b4b4"/><rect x="0" y="16" width="2" height="2" fill="#b4b4b4"/><rect x="0" y="20" width="2" height="2" fill="#b4b4b4"/></svg><svg class="i" style="left:1053px;top:108px" width="2" height="24"><rect x="0" y="0" width="2" height="2" fill="#b4b4b4"/><rect x="0" y="4" width="2" height="2" fill="#b4b4b4"/><rect x="0" y="8" width="2" height="2" fill="#b4b4b4"/><rect x="0" y="12" width="2" height="2" fill="#b4b4b4"/><rect x="0" y="16" width="2" height="2" fill="#b4b4b4"/><rect x="0" y="20" width="2" height="2" fill="#b4b4b4"/></svg><div class="b" style="left:252px;top:108px;width:22px;height:21px;background:#cce8ff;border:1px solid #99d1ff;box-sizing:border-box;"></div><svg class="i" style="left:13px;top:112px" width="16" height="16" viewBox="0 0 16 16"><path d="M0.5 14.5L6.5 9H16L10 14.5Z" fill="none" stroke="#e81818" stroke-width="0.9" stroke-dasharray="2 .8"/><path d="M5.5 0.5V8.5M1.5 4.5H9.5M2.5 1.5L8.5 7.5M8.5 1.5L2.5 7.5" fill="none" stroke="#efe02a" stroke-width="0.8" /></svg><svg class="i" style="left:35px;top:112px" width="16" height="16" viewBox="0 0 16 16"><rect x="0.7" y="1.7" width="12" height="12" fill="none" stroke="#e81818" stroke-width="1.1" stroke-dasharray="2 .8"/><rect x="2.5" y="3.5" width="8.5" height="8.5" fill="#fff" stroke="#444" stroke-width="1" /><circle cx="6.7" cy="7.7" r="2.5" fill="none" stroke="#333" stroke-width="0.8" /><path d="M6.7 4V11.5M3 7.7H10.5" fill="none" stroke="#333" stroke-width="0.8" /></svg><svg class="i" style="left:57px;top:112px" width="16" height="16" viewBox="0 0 16 16"><path d="M0.5 14.5L6.5 9H16L10 14.5Z" fill="none" stroke="#e81818" stroke-width="0.9" stroke-dasharray="2 .8"/><path d="M5.5 0.5V7.5H12" fill="none" stroke="#2b2bd0" stroke-width="1" /><path d="M5.5 7.5L1.5 11.5" fill="none" stroke="#2b2bd0" stroke-width="1" /><path d="M4 2.5H7" fill="none" stroke="#2b2bd0" stroke-width="1" /><path d="M1 9.5V12H3.5" fill="none" stroke="#2b2bd0" stroke-width="1" /></svg><svg class="i" style="left:79px;top:112px" width="16" height="16" viewBox="0 0 16 16"><path d="M0.5 14.5L6.5 9H16L10 14.5Z" fill="none" stroke="#e81818" stroke-width="0.9" stroke-dasharray="2 .8"/><path d="M7.5 1.5L4.5 12.5H11.5Z" fill="#4cc4c8" stroke="#2a9a9a" stroke-width="0.8" /><path d="M7.5 1.5L9 12.5H11.5Z" fill="#2e9ea2" stroke="none" stroke-width="0" /><path d="M7.5 1.5L4.5 12.5L6.5 13.5Z" fill="#8ce4e8" stroke="none" stroke-width="0" /></svg><svg class="i" style="left:101px;top:112px" width="16" height="16" viewBox="0 0 16 16"><path d="M0.5 14.5L6.5 9H16L10 14.5Z" fill="none" stroke="#e81818" stroke-width="0.9" stroke-dasharray="2 .8"/><path d="M5.5 4.5H10Q12.5 4.5 12.5 6.5Q12.5 8.5 10 8.5H7" fill="none" stroke="#111" stroke-width="1.2" /><path d="M3.5 4.5L7.5 2V7Z" fill="#111" stroke="#111" stroke-width="0.3" /></svg><svg class="i" style="left:123px;top:112px" width="16" height="16" viewBox="0 0 16 16"><path d="M0.5 14.5L6.5 9H16L10 14.5Z" fill="none" stroke="#e81818" stroke-width="0.9" stroke-dasharray="2 .8"/><rect x="2.5" y="1.5" width="8.5" height="8" fill="#fff" stroke="#222" stroke-width="1.3" /><rect x="8.5" y="1.5" width="2.5" height="8" fill="#222" stroke="none" stroke-width="1" /><path d="M4 3.5H7.5M4 5.5H7.5M4 7.5H7.5" fill="none" stroke="#222" stroke-width="1" /></svg><svg class="i" style="left:145px;top:112px" width="16" height="16" viewBox="0 0 16 16"><path d="M0.5 6.5L6 1.5H15.5L10 6.5Z" fill="#ececec" stroke="#b0b0b0" stroke-width="1" /><path d="M8 4V13L10 11L11.5 14.5L13 14L11.5 10.5H14Z" fill="#d8d8d8" stroke="#a8a8a8" stroke-width="1" /></svg><svg class="i" style="left:167px;top:112px" width="16" height="16" viewBox="0 0 16 16"><path d="M1.5 10.5L7 4.5H16L10.5 10.5Z" fill="none" stroke="#e81818" stroke-width="1.1" stroke-dasharray="2 .8"/><path d="M2 10.5H10.5M2.5 10L6.5 5.5" fill="none" stroke="#2b2bd0" stroke-width="1" /><rect x="0.5" y="9.5" width="2" height="2" fill="#fff" stroke="#3434ff"/><rect x="9.5" y="9.5" width="2" height="2" fill="#fff" stroke="#3434ff"/><rect x="5.5" y="4.5" width="2" height="2" fill="#fff" stroke="#3434ff"/></svg><svg class="i" style="left:189px;top:112px" width="16" height="16" viewBox="0 0 16 16"><path d="M1 11.5L6.5 5.5H16L10.5 11.5Z" fill="none" stroke="#e81818" stroke-width="1.1" stroke-dasharray="2 .8"/><path d="M6.5 0.5V11" fill="none" stroke="#e81818" stroke-width="1" /><path d="M1 1.5L4.5 4.5M4.5 2V4.5H2M12 1.5L8.5 4.5M8.5 2V4.5H11" fill="none" stroke="#111" stroke-width="1.2" /></svg><svg class="i" style="left:211px;top:112px" width="16" height="16" viewBox="0 0 16 16"><path d="M0.5 5.5L4 1.5H13L9.5 5.5Z" fill="none" stroke="#e81818" stroke-width="1.1" stroke-dasharray="2 .8"/><rect x="7.5" y="4.5" width="2" height="2" fill="#fff" stroke="#3434ff"/><path d="M11.5 7V15.5M7.5 11.5H16" fill="none" stroke="#222" stroke-width="1.1" /><path d="M10 8.5L11.5 6.5L13 8.5M10 14L11.5 16L13 14M9 10L7 11.5L9 13M14.5 10L16.5 11.5L14.5 13" fill="none" stroke="#222" stroke-width="1.1" /></svg><svg class="i" style="left:233px;top:112px" width="16" height="16" viewBox="0 0 16 16"><path d="M0.5 0.5V10.5L6.5 15.5V6.5Z" fill="none" stroke="#e81818" stroke-width="1.1" stroke-dasharray="2 .8"/><path d="M6.5 6.5L4.5 2.5L11 6.5V11.5H6.5" fill="#58dce4" stroke="#3a3ab0" stroke-width="1" /><rect x="2.5" y="6" width="3.5" height="5" fill="#dcdcdc" stroke="#888" stroke-width="0.8" /></svg><svg class="i" style="left:255px;top:112px" width="16" height="16" viewBox="0 0 16 16"><rect x="4.5" y="7" width="2.5" height="5" fill="#d4dce6" stroke="#8a8a8a" stroke-width="0.8" /><path d="M7 3L12.5 8.5V12.5H8.7" fill="none" stroke="#000080" stroke-width="1.5" /><path d="M8.7 8.5H12.5" fill="none" stroke="#000080" stroke-width="1.3" /><path d="M2.3 1.3V10.5L7.8 16H8.7V7.5Z" fill="none" stroke="#e81818" stroke-width="1.1" /></svg><svg class="i" style="left:277px;top:112px" width="16" height="16" viewBox="0 0 16 16"><rect x="0.5" y="1.5" width="13.5" height="12" fill="#e2e2e2" stroke="#b0b0b0" stroke-width="1" stroke-dasharray="1.5 1"/><path d="M7.2 2.5V6M7.2 9.5V12.5M1.5 7.7H5M9.5 7.7H13" fill="none" stroke="#9a9a9a" stroke-width="1.3" /><path d="M5 4.5L7.2 2L9.5 4.5Z M5 11L7.2 13.5L9.5 11Z M3.5 5.5L1 7.7L3.5 10Z M11 5.5L13.5 7.7L11 10Z" fill="#9a9a9a" stroke="#9a9a9a" stroke-width="0.4" /></svg><svg class="i" style="left:299px;top:112px" width="16" height="16" viewBox="0 0 16 16"><path d="M0.5 13.5L5.5 9.5H15.5L10.5 13.5Z" fill="#e0e0e0" stroke="#a8a8a8" stroke-width="1" /><path d="M1 11.5L6 7.5H15.5L10.5 11.5Z" fill="#ececec" stroke="#a8a8a8" stroke-width="1" /><path d="M8.5 0.5L6.5 9.5H10.5Z" fill="#c4c4c4" stroke="#a8a8a8" stroke-width="0.8" /></svg><svg class="i" style="left:334px;top:112px" width="16" height="16" viewBox="0 0 16 16"><path d="M1.5 5.5H9.5V13.5H1.5Z" fill="#fff" stroke="#333" stroke-width="1.1" /><path d="M1.5 5.5L5 2H13L9.5 5.5" fill="#e6e6e6" stroke="#333" stroke-width="1.1" /><path d="M13 2V10L9.5 13.5" fill="#bdbdbd" stroke="#333" stroke-width="1.1" /><path d="M9.5 5.5L13 2V10L9.5 13.5Z" fill="#bdbdbd" stroke="none" stroke-width="0" /><rect x="0.5" y="12.5" width="2" height="2" fill="#fff" stroke="#3434ff"/><rect x="11.5" y="1.5" width="2" height="2" fill="#fff" stroke="#3434ff"/><rect x="11.5" y="9.5" width="2" height="2" fill="#fff" stroke="#3434ff"/></svg><svg class="i" style="left:356px;top:112px" width="16" height="16" viewBox="0 0 16 16"><path d="M1.5 4.5L7.5 1L13.5 4.5L7.5 8Z" fill="#d4d4d4" stroke="#333" stroke-width="1" /><path d="M1.5 4.5V11.5L7.5 15V8Z" fill="#fff" stroke="#333" stroke-width="1" /><path d="M13.5 4.5V11.5L7.5 15V8Z" fill="#b0b0b0" stroke="#333" stroke-width="1" /><path d="M2.5 12.5L7 15" fill="none" stroke="#30d8e0" stroke-width="1.2" /><rect x="0.5" y="10.5" width="2" height="2" fill="#fff" stroke="#3434ff"/><rect x="6.5" y="13.5" width="2" height="2" fill="#fff" stroke="#3434ff"/><rect x="12.5" y="10.5" width="2" height="2" fill="#fff" stroke="#3434ff"/><rect x="12.5" y="3.5" width="2" height="2" fill="#fff" stroke="#3434ff"/></svg><svg class="i" style="left:378px;top:112px" width="16" height="16" viewBox="0 0 16 16"><defs><radialGradient id="sg_1" cx=".4" cy=".7" r=".8"><stop offset="0" stop-color="#fff"/><stop offset=".6" stop-color="#bbb"/><stop offset="1" stop-color="#777"/></radialGradient></defs><circle cx="8" cy="8" r="7.2" fill="url(#sg_1)" stroke="#333" stroke-width="1" /><rect x="6.5" y="6.5" width="2" height="2" fill="#fff" stroke="#3434ff"/><rect x="13.5" y="6.5" width="2" height="2" fill="#fff" stroke="#3434ff"/></svg><svg class="i" style="left:400px;top:112px" width="16" height="16" viewBox="0 0 16 16"><path d="M1.5 5.5C3 0 13.5 0 15.5 9.5C15.5 12.5 13 12.5 11 12C7 11.5 3 9 1.5 5.5Z" fill="#9a9a9a" stroke="#333" stroke-width="1" /><path d="M6 6.5C9 5 13 8 14.5 11.5" fill="none" stroke="#333" stroke-width="1" /><path d="M3 3.5C6 1.5 10 3 11 6.5" fill="none" stroke="#ddd" stroke-width="1.2" /><rect x="0.5" y="4.5" width="2" height="2" fill="#fff" stroke="#3434ff"/><rect x="6.5" y="7.5" width="2" height="2" fill="#fff" stroke="#3434ff"/></svg><svg class="i" style="left:422px;top:112px" width="16" height="16" viewBox="0 0 16 16"><path d="M11.5 1.5L1.5 12.5L5 15.5H11.5Z" fill="#e2e2e2" stroke="#333" stroke-width="1" /><path d="M11.5 1.5L8 15.5H11.5Z" fill="#aaa" stroke="none" stroke-width="0" /><path d="M1.5 12.5L5 15.5H11.5L12.5 12.5" fill="none" stroke="#3a3aff" stroke-width="1" /><path d="M4 11.5H11.5" fill="none" stroke="#28b0b0" stroke-width="1.2" /><rect x="10.5" y="0.5" width="2" height="2" fill="#fff" stroke="#3434ff"/></svg><svg class="i" style="left:444px;top:112px" width="16" height="16" viewBox="0 0 16 16"><path d="M5.5 1.5L1.5 12L7.5 15.5L14.5 12V4.5L8.5 5Z" fill="#fff" stroke="#333" stroke-width="1" /><path d="M8.5 5L7.5 15.5" fill="none" stroke="#333" stroke-width="1" /><path d="M5.5 1.5L10 1L14.5 4.5L8.5 5Z" fill="none" stroke="#3a3aff" stroke-width="1" /><path d="M2 11.5H14" fill="none" stroke="#28b0b0" stroke-width="1" stroke-dasharray="2 1.5"/><path d="M1.5 12L7.5 15.5L14.5 12" fill="none" stroke="#3a3aff" stroke-width="1" /></svg><svg class="i" style="left:466px;top:112px" width="16" height="16" viewBox="0 0 16 16"><path d="M4.5 2.5C6 0 14 2 15.5 5.5L11 14C8 16 2 13.5 1.5 10.5Z" fill="#fff" stroke="#333" stroke-width="1" /><path d="M4.5 2.5C5 5.5 12 8 15.5 5.5" fill="none" stroke="#333" stroke-width="1" /><path d="M11 14L15.5 5.5L13 7L9.5 13Z" fill="#bdbdbd" stroke="none" stroke-width="0" /><path d="M1.5 10.5C2 13.5 8 16 11 14C9 11 3 9 1.5 10.5Z" fill="none" stroke="#3a3aff" stroke-width="1.1" /></svg><svg class="i" style="left:488px;top:112px" width="16" height="16" viewBox="0 0 16 16"><path d="M1.5 3H4L7 4.5H12M1.5 8.5H13M1.5 14H4L7 12.5H12" fill="none" stroke="#222" stroke-width="1.3" /><path d="M4 2C5 1 6 1 7 2M4 15C5 16 6 16 7 15" fill="none" stroke="#222" stroke-width="1" /><rect x="11" y="3.8" width="4.5" height="1.6" fill="#222" stroke="none" stroke-width="1" /><rect x="1" y="7.8" width="3" height="1.6" fill="#222" stroke="none" stroke-width="1" /><rect x="11" y="11.8" width="4.5" height="1.6" fill="#222" stroke="none" stroke-width="1" /><path d="M1 1.5L3 2.5L1 3.5M1 13L3 14L1 15" fill="none" stroke="#222" stroke-width="1" /></svg><svg class="i" style="left:510px;top:112px" width="16" height="16" viewBox="0 0 16 16"><path d="M6 2.5H14.5L10 12.5H1.5Z" fill="#fff" stroke="#333" stroke-width="1" /><path d="M5 4.5L6 2.5M4 6.5H12" fill="none" stroke="#333" stroke-width="1" /><path d="M10 12.5L14.5 2.5V5.5L11 12.5Z" fill="#b0b0b0" stroke="none" stroke-width="0" /><path d="M3.5 9.5H10" fill="none" stroke="#28a8a8" stroke-width="1.3" /><path d="M1.5 9.5L0.5 11.5L2.5 14H9" fill="none" stroke="#3a3aff" stroke-width="1" /><rect x="12.5" y="2.5" width="2" height="2" fill="#fff" stroke="#3434ff"/><rect x="8.5" y="10.5" width="2" height="2" fill="#fff" stroke="#3434ff"/></svg><svg class="i" style="left:532px;top:112px" width="16" height="16" viewBox="0 0 16 16"><path d="M0.5 2H4.5V6.5L3 8.5V14H1M3 14H5" fill="none" stroke="#444" stroke-width="1.1" /><path d="M5 1V16" fill="none" stroke="#e81818" stroke-width="1" stroke-dasharray="1.2 1.2"/><path d="M6 8.5H9.5M8 6.5L10 8.5L8 10.5" fill="none" stroke="#3a3aff" stroke-width="1.1" /><path d="M10.5 2H15V6.5L13 8.5L10.5 6.5Z" fill="#d8d8d8" stroke="#444" stroke-width="1.1" /><path d="M13 8.5V14M10.5 14.5H15.5" fill="none" stroke="#444" stroke-width="1.2" /></svg><svg class="i" style="left:554px;top:112px" width="16" height="16" viewBox="0 0 16 16"><path d="M1.5 4C1.5 0.5 12.5 0.5 12.5 4V12.5C12.5 16 1.5 16 1.5 12.5Z" fill="#fff" stroke="#333" stroke-width="1" /><path d="M1.5 4C1.5 7.5 12.5 7.5 12.5 4" fill="none" stroke="#333" stroke-width="1" /><path d="M8 6.3C11 6 12.5 5 12.5 4V12.5C12.5 13.5 11 14.5 8 15Z" fill="#c4c4c4" stroke="none" stroke-width="0" /><rect x="11.5" y="3.5" width="2" height="2" fill="#fff" stroke="#3434ff"/><rect x="6.5" y="10.5" width="2" height="2" fill="#fff" stroke="#3434ff"/><rect x="11.5" y="10.5" width="2" height="2" fill="#fff" stroke="#3434ff"/></svg><svg class="i" style="left:576px;top:112px" width="16" height="16" viewBox="0 0 16 16"><path d="M1.5 4C1.5 0.5 12.5 0.5 12.5 4V12.5C12.5 16 1.5 16 1.5 12.5Z" fill="#fff" stroke="#333" stroke-width="1" /><path d="M1.5 4C1.5 7.5 12.5 7.5 12.5 4" fill="none" stroke="#333" stroke-width="1" /><path d="M8 6.3C11 6 12.5 5 12.5 4V12.5C12.5 13.5 11 14.5 8 15Z" fill="#c4c4c4" stroke="none" stroke-width="0" /><path d="M4.5 15V9H9.5V15" fill="#eee" stroke="#333" stroke-width="1" /><rect x="11.5" y="3.5" width="2" height="2" fill="#fff" stroke="#3434ff"/><rect x="6.5" y="10.5" width="2" height="2" fill="#fff" stroke="#3434ff"/><rect x="11.5" y="10.5" width="2" height="2" fill="#fff" stroke="#3434ff"/></svg><svg class="i" style="left:598px;top:112px" width="16" height="16" viewBox="0 0 16 16"><path d="M5 1.5H11L14.5 5V11L11 14.5H5L1.5 11V5Z" fill="#d2d2d2" stroke="#444" stroke-width="1.1" /><path d="M5 1.5H11L14.5 5L8 8Z" fill="#f0f0f0" stroke="none" stroke-width="0" /><circle cx="8" cy="8" r="2.2" fill="#fff" stroke="#555" stroke-width="1.2" /></svg><svg class="i" style="left:620px;top:112px" width="16" height="16" viewBox="0 0 16 16"><path d="M2.5 2V14.5M5.5 2V14.5M8.5 2V14.5M11.5 2V14.5M14.5 2V14.5M2.5 2.5H14.5M2.5 5.5H14.5M2.5 8.5H14.5M2.5 11.5H14.5M2.5 14.5H14.5" fill="none" stroke="#333" stroke-width="1.05" /><rect x="1.5" y="0.5" width="2" height="2" fill="#fff" stroke="#3434ff"/><rect x="13.5" y="13.5" width="2" height="2" fill="#fff" stroke="#3434ff"/></svg><svg class="i" style="left:642px;top:112px" width="16" height="16" viewBox="0 0 16 16"><path d="M1.5 3.5V13.5H11.5Z" fill="#fff" stroke="#333" stroke-width="1.1" /><path d="M1.5 3.5L4.5 1.5L14 11L11.5 13.5Z" fill="#c0c0c0" stroke="#333" stroke-width="1" /><rect x="0.5" y="2.5" width="2" height="2" fill="#fff" stroke="#3434ff"/><rect x="0.5" y="12.5" width="2" height="2" fill="#fff" stroke="#3434ff"/><rect x="12.5" y="8.5" width="2" height="2" fill="#fff" stroke="#3434ff"/></svg><svg class="i" style="left:664px;top:112px" width="16" height="16" viewBox="0 0 16 16"><path d="M1.5 4.5H10.5V14.5H1.5ZM1.5 4.5L4.5 1.5H13.5V11.5L10.5 14.5M10.5 4.5L13.5 1.5" fill="none" stroke="#a0a0a0" stroke-width="1" /><path d="M2 11.5L5.5 8L7.5 9.5L10 7L13.5 7L10.5 11.5Z" fill="#4a4ad8" stroke="#2b2bc0" stroke-width="0.6" /><path d="M2 11.5H10" fill="none" stroke="#2b2bc0" stroke-width="1.2" /></svg><svg class="i" style="left:686px;top:112px" width="16" height="16" viewBox="0 0 16 16"><text x="0" y="10.5" font-family="Liberation Sans, sans-serif" font-size="8" fill="#000"  textLength="8" lengthAdjust="spacingAndGlyphs" stroke="#000" stroke-width=".25">3D</text><path d="M2.5 14H8.5L14.5 8L9.5 3" fill="none" stroke="#222" stroke-width="1" /><rect x="1.5" y="12.5" width="2" height="2" fill="#fff" stroke="#3434ff"/><rect x="7.5" y="12.5" width="2" height="2" fill="#fff" stroke="#3434ff"/><rect x="13.5" y="6.5" width="2" height="2" fill="#fff" stroke="#3434ff"/><rect x="8.5" y="2.5" width="2" height="2" fill="#fff" stroke="#3434ff"/></svg><svg class="i" style="left:708px;top:112px" width="16" height="16" viewBox="0 0 16 16"><path d="M1.5 14.5C3 0.5 13 0.5 15 13.5" fill="none" stroke="#222" stroke-width="1" /><text x="5" y="15.5" font-family="Liberation Sans, sans-serif" font-size="8" fill="#000"  textLength="8" lengthAdjust="spacingAndGlyphs" stroke="#000" stroke-width=".25">3D</text><rect x="2.5" y="0.5" width="2" height="2" fill="#fff" stroke="#3434ff"/><rect x="12.5" y="0.5" width="2" height="2" fill="#fff" stroke="#3434ff"/><rect x="0.5" y="12.5" width="2" height="2" fill="#fff" stroke="#3434ff"/><rect x="14.5" y="11.5" width="2" height="2" fill="#fff" stroke="#3434ff"/></svg><svg class="i" style="left:730px;top:112px" width="16" height="16" viewBox="0 0 16 16"><text x="0" y="15" font-family="Liberation Sans, sans-serif" font-size="8" fill="#000"  textLength="8" lengthAdjust="spacingAndGlyphs" stroke="#000" stroke-width=".25">3D</text><path d="M13 1.5C7 -1 5 5.5 9.5 8" fill="none" stroke="#222" stroke-width="1.1" /><path d="M10.5 0.5L13.5 2L10.5 3.5" fill="none" stroke="#222" stroke-width="1" /><rect x="12.5" y="0.5" width="2" height="2" fill="#fff" stroke="#3434ff"/><rect x="4.5" y="4.5" width="2" height="2" fill="#fff" stroke="#3434ff"/><rect x="10.5" y="7.5" width="2" height="2" fill="#fff" stroke="#3434ff"/></svg><svg class="i" style="left:763px;top:112px" width="16" height="16" viewBox="0 0 16 16"><path d="M1.5 1V14.5H15.5" fill="none" stroke="#2b2bc8" stroke-width="1.3" /><path d="M3 13L6.5 4" fill="none" stroke="#2b2bc8" stroke-width="2.2" /><rect x="6.5" y="2" width="2" height="12.5" fill="#f4e820" stroke="none" stroke-width="1" /><rect x="9.5" y="6" width="1.6" height="8.5" fill="#2b2bc8" stroke="none" stroke-width="1" /><rect x="12" y="4" width="1.8" height="10.5" fill="#f02828" stroke="none" stroke-width="1" /><rect x="14.6" y="6.5" width="1" height="8" fill="#2b2bc8" stroke="none" stroke-width="1" /></svg><svg class="i" style="left:785px;top:112px" width="16" height="16" viewBox="0 0 16 16"><rect x="3.5" y="1.5" width="11" height="10.5" fill="none" stroke="#3a3aa8" stroke-width="1.2" /><rect x="7" y="4" width="5" height="5" fill="none" stroke="#3a3aa8" stroke-width="1.2" /><rect x="2.3" y="0.3" width="2.4" height="2.4" fill="#3a3aa8" stroke="none" stroke-width="1" /><rect x="13.3" y="0.3" width="2.4" height="2.4" fill="#3a3aa8" stroke="none" stroke-width="1" /><rect x="13.3" y="10.3" width="2.4" height="2.4" fill="#3a3aa8" stroke="none" stroke-width="1" /><rect x="2.3" y="5" width="2.4" height="2.4" fill="#3a3aa8" stroke="none" stroke-width="1" /><rect x="0.7" y="8.7" width="7" height="6.6" fill="#fff" stroke="#333" stroke-width="1.3" /><path d="M3 13L5.5 10.5M3.5 10.5H5.5V12.5" fill="none" stroke="#222" stroke-width="1" /></svg><svg class="i" style="left:807px;top:112px" width="16" height="16" viewBox="0 0 16 16"><path d="M2 1V13L5 10.5L7 14.5L9 13.5L7 9.5H10.5Z" fill="#3a3aa8" stroke="#3a3aa8" stroke-width="0.6" /><rect x="11" y="9" width="2" height="2" fill="#2b2bff" stroke="none" stroke-width="1" /><rect x="11" y="13" width="2" height="2" fill="#2b2bff" stroke="none" stroke-width="1" /></svg><svg class="i" style="left:829px;top:112px" width="16" height="16" viewBox="0 0 16 16"><path d="M2 4L9 13.5" fill="none" stroke="#2b2bd8" stroke-width="1.3" /><path d="M1 7V3H5M6 14H10V10" fill="none" stroke="#2b2bd8" stroke-width="1.3" /><path d="M9 13.5L12 11" fill="none" stroke="#999" stroke-width="1" stroke-dasharray="1 1"/><text x="8.5" y="10" font-family="Liberation Sans, sans-serif" font-size="12.5" fill="#2b2bff">?</text></svg><svg class="i" style="left:851px;top:112px" width="16" height="16" viewBox="0 0 16 16"><path d="M6.5 0.5C11 0.5 12 5 13.5 8C15 11 12 15 8.5 15C3 15 0 10 1.5 5C2.5 2 4.5 0.5 6.5 0.5Z" fill="#f8f4a0" stroke="#999" stroke-width="1" /><circle cx="10.5" cy="9" r="2.2" fill="#fff" stroke="#aaa" stroke-width="0.8" /><path d="M4.5 2.5L8 2L8.5 4.5Z" fill="#f02020" stroke="none" stroke-width="0" /><path d="M2.5 5L6 5L4 8.5Z" fill="#20a020" stroke="none" stroke-width="0" /><path d="M3.5 10L6 8.5L7 12L5 13Z" fill="#2828e0" stroke="none" stroke-width="0" /><path d="M8 13L11.5 12.5L10 14.5Z" fill="#c020c0" stroke="none" stroke-width="0" /></svg><svg class="i" style="left:873px;top:112px" width="16" height="16" viewBox="0 0 16 16"><rect x="0.8" y="2" width="14.4" height="10.5" fill="#3aa0a0" stroke="#208080" stroke-width="1" rx="1"/><rect x="1.3" y="2.5" width="13.4" height="9.5" fill="none" stroke="#7ff0f0" stroke-width="0.8" stroke-dasharray="1 1"/><rect x="3" y="4.2" width="10" height="2.3" fill="#c8f4f4" stroke="#e8ffff" stroke-width="0.5" /><rect x="3" y="8" width="1.6" height="1.2" fill="#e8ffff" stroke="none" stroke-width="1" /><rect x="3" y="10" width="1.6" height="1.2" fill="#e8ffff" stroke="none" stroke-width="1" /><rect x="5.6" y="8" width="1.6" height="1.2" fill="#e8ffff" stroke="none" stroke-width="1" /><rect x="5.6" y="10" width="1.6" height="1.2" fill="#e8ffff" stroke="none" stroke-width="1" /><rect x="8.2" y="8" width="1.6" height="1.2" fill="#e8ffff" stroke="none" stroke-width="1" /><rect x="8.2" y="10" width="1.6" height="1.2" fill="#e8ffff" stroke="none" stroke-width="1" /><rect x="10.8" y="8" width="1.6" height="1.2" fill="#e8ffff" stroke="none" stroke-width="1" /><rect x="10.8" y="10" width="1.6" height="1.2" fill="#e8ffff" stroke="none" stroke-width="1" /></svg><svg class="i" style="left:895px;top:112px" width="16" height="16" viewBox="0 0 16 16"><rect x="0.8" y="4" width="11.5" height="11" fill="#fff" stroke="#222" stroke-width="1.3" /><path d="M1 8.5H12M6 8.5V15M1 11.5H6" fill="none" stroke="#222" stroke-width="1.3" /><rect x="7.5" y="10.5" width="3.5" height="3" fill="#222" stroke="none" stroke-width="1" /><path d="M2.5 5L7.5 0.5H13L9 5Z" fill="#fff" stroke="#333" stroke-width="1" /><path d="M4.5 4.5L8.5 1M6.5 5L10.5 1.5" fill="none" stroke="#555" stroke-width="0.8" /><path d="M12 1.5C14.5 2 14.5 5 12.5 5.5" fill="none" stroke="#333" stroke-width="1" /><path d="M15.5 0.5V6" fill="none" stroke="#2b2bd0" stroke-width="1.3" /><rect x="12.5" y="7" width="2" height="6" fill="#ccc" stroke="none" stroke-width="1" /></svg><svg class="i" style="left:917px;top:112px" width="16" height="16" viewBox="0 0 16 16"><rect x="-1" y="-4.6" width="2" height="2.2" fill="#d8d8d8" stroke="#777" stroke-width=".6" transform="translate(5 4.5) rotate(0)"/><rect x="-1" y="-4.6" width="2" height="2.2" fill="#d8d8d8" stroke="#777" stroke-width=".6" transform="translate(5 4.5) rotate(45)"/><rect x="-1" y="-4.6" width="2" height="2.2" fill="#d8d8d8" stroke="#777" stroke-width=".6" transform="translate(5 4.5) rotate(90)"/><rect x="-1" y="-4.6" width="2" height="2.2" fill="#d8d8d8" stroke="#777" stroke-width=".6" transform="translate(5 4.5) rotate(135)"/><rect x="-1" y="-4.6" width="2" height="2.2" fill="#d8d8d8" stroke="#777" stroke-width=".6" transform="translate(5 4.5) rotate(180)"/><rect x="-1" y="-4.6" width="2" height="2.2" fill="#d8d8d8" stroke="#777" stroke-width=".6" transform="translate(5 4.5) rotate(225)"/><rect x="-1" y="-4.6" width="2" height="2.2" fill="#d8d8d8" stroke="#777" stroke-width=".6" transform="translate(5 4.5) rotate(270)"/><rect x="-1" y="-4.6" width="2" height="2.2" fill="#d8d8d8" stroke="#777" stroke-width=".6" transform="translate(5 4.5) rotate(315)"/><circle cx="5" cy="4.5" r="3.2" fill="#d8d8d8" stroke="#777" stroke-width="0.8" /><circle cx="5" cy="4.5" r="1.2" fill="#fff" stroke="#777" stroke-width="0.8" /><rect x="-1" y="-4.6" width="2" height="2.2" fill="#f0e030" stroke="#8a8420" stroke-width=".6" transform="translate(10.5 10.5) rotate(0)"/><rect x="-1" y="-4.6" width="2" height="2.2" fill="#f0e030" stroke="#8a8420" stroke-width=".6" transform="translate(10.5 10.5) rotate(45)"/><rect x="-1" y="-4.6" width="2" height="2.2" fill="#f0e030" stroke="#8a8420" stroke-width=".6" transform="translate(10.5 10.5) rotate(90)"/><rect x="-1" y="-4.6" width="2" height="2.2" fill="#f0e030" stroke="#8a8420" stroke-width=".6" transform="translate(10.5 10.5) rotate(135)"/><rect x="-1" y="-4.6" width="2" height="2.2" fill="#f0e030" stroke="#8a8420" stroke-width=".6" transform="translate(10.5 10.5) rotate(180)"/><rect x="-1" y="-4.6" width="2" height="2.2" fill="#f0e030" stroke="#8a8420" stroke-width=".6" transform="translate(10.5 10.5) rotate(225)"/><rect x="-1" y="-4.6" width="2" height="2.2" fill="#f0e030" stroke="#8a8420" stroke-width=".6" transform="translate(10.5 10.5) rotate(270)"/><rect x="-1" y="-4.6" width="2" height="2.2" fill="#f0e030" stroke="#8a8420" stroke-width=".6" transform="translate(10.5 10.5) rotate(315)"/><circle cx="10.5" cy="10.5" r="3.2" fill="#f0e030" stroke="#8a8420" stroke-width="0.8" /><circle cx="10.5" cy="10.5" r="1.2" fill="#fff" stroke="#8a8420" stroke-width="0.8" /></svg><svg class="i" style="left:939px;top:112px" width="16" height="16" viewBox="0 0 16 16"><rect x="0.5" y="0.5" width="15" height="14.5" fill="#c9c9c9" stroke="#8c8c8c" stroke-width="1" rx="1"/><path d="M1.5 14V1.5H14.5" fill="none" stroke="#f4f4f4" stroke-width="1" /><path d="M8 2.5L13 5V11L8 13.5L3 11V5Z" fill="#f2e840" stroke="#666" stroke-width="0.8" /><path d="M8 2.5L13 5L8 7.5L3 5Z" fill="#fff" stroke="#666" stroke-width="0.6" /><path d="M8 7.5V13.5L13 11V5Z" fill="#c8c030" stroke="#666" stroke-width="0.6" /></svg><svg class="i" style="left:961px;top:112px" width="16" height="16" viewBox="0 0 16 16"><rect x="0.5" y="0.5" width="15" height="14.5" fill="#c9c9c9" stroke="#8c8c8c" stroke-width="1" rx="1"/><path d="M1.5 14V1.5H14.5" fill="none" stroke="#f4f4f4" stroke-width="1" /><path d="M8 1.5V14M1.5 7.7H14.5M3 3L13 12.5M13 3L3 12.5" fill="none" stroke="#f6f6f6" stroke-width="1" /><circle cx="8" cy="7.8" r="3.8" fill="#2c58d0" stroke="#1a3a90" stroke-width="0.8" /><path d="M5.5 6C7 4.5 9 5 10 6.5C9 8 7 8.5 6 7.5Z" fill="#38b048" stroke="none" stroke-width="0" /></svg><svg class="i" style="left:983px;top:112px" width="16" height="16" viewBox="0 0 16 16"><rect x="0.5" y="0.5" width="15" height="14.5" fill="#c9c9c9" stroke="#8c8c8c" stroke-width="1" rx="1"/><path d="M1.5 14V1.5H14.5" fill="none" stroke="#f4f4f4" stroke-width="1" /><rect x="1.5" y="1.5" width="13" height="8" fill="#8ee8f0" stroke="none" stroke-width="1" /><rect x="1.5" y="9.5" width="13" height="5" fill="#c8b860" stroke="none" stroke-width="1" /><path d="M8 2L14 2L14 8Z" fill="#fff" stroke="none" stroke-width="0" /><circle cx="12.5" cy="4.5" r="1.6" fill="#f8e838" stroke="none" stroke-width="1" /><path d="M5.5 3V13M3 5V8.5H5.5M8 5V9.5H5.5" fill="none" stroke="#18a028" stroke-width="1.7" /></svg><svg class="i" style="left:1005px;top:112px" width="16" height="16" viewBox="0 0 16 16"><path d="M0.5 13.5V3.5L3 1.5H7.5L9 3.5H14.5V13.5Z" fill="#f4ec70" stroke="#8a8a60" stroke-width="1" /><path d="M1.5 12.5V4.5M1.5 4L3.5 2.5" fill="none" stroke="#fffbd0" stroke-width="1" /><circle cx="7" cy="8" r="3.6" fill="#7fe7f0" stroke="#3a6ac0" stroke-width="1.2" /><circle cx="6" cy="7" r="1.2" fill="#e0fcff" stroke="none" stroke-width="1" /><path d="M10 11L13 14" fill="none" stroke="#3a4ab8" stroke-width="2" /></svg><svg class="i" style="left:1027px;top:112px" width="16" height="16" viewBox="0 0 16 16"><path d="M1.5 8L6 3.5L9.5 7V15H1.5Z" fill="#f02020" stroke="#b01010" stroke-width="0.6" /><path d="M9.5 7L14 6V10.5L9.5 15Z" fill="#a01818" stroke="#701010" stroke-width="0.6" /><path d="M2 1L8 7M7.5 1L3.5 5.5" fill="none" stroke="#222" stroke-width="1.3" /><path d="M8 2.5C10 0.5 12.5 1.5 13 3.5V8.5H10" fill="#fff" stroke="#222" stroke-width="1" /><rect x="8.5" y="4.5" width="3.5" height="1.5" fill="#d8c830" stroke="#555" stroke-width="0.5" /></svg><svg class="i" style="left:1062px;top:112px" width="16" height="16" viewBox="0 0 16 16"><text x="1" y="6.3" font-family="Liberation Sans, sans-serif" font-size="6.2" fill="#000"  textLength="12.5" lengthAdjust="spacingAndGlyphs" stroke="#000" stroke-width=".2">ABC</text><path d="M2 10.5L5.5 14L15 3.5" fill="none" stroke="#2b2ba0" stroke-width="1.7" /></svg><svg class="i" style="left:1083px;top:112px" width="16" height="16" viewBox="0 0 16 16"><rect x="0.7" y="1" width="14.6" height="14" fill="#fff" stroke="#333" stroke-width="1.3" /><text x="2" y="7.5" font-family="Liberation Sans, sans-serif" font-size="6.5" fill="#222"  >A</text><rect x="7.5" y="2.5" width="6" height="5.5" fill="none" stroke="#555" stroke-width="1" /><path d="M8.5 3.5L10.5 6L12.5 3.5" fill="none" stroke="#555" stroke-width="0.8" /><path d="M2.5 10L6 13.5L14.5 3.5" fill="none" stroke="#2b2ba0" stroke-width="1.7" /></svg><div class="b" style="left:1104px;top:110px;width:1px;height:21px;background:#a0a0a0;"></div><svg class="i" style="left:1111px;top:112px" width="16" height="16" viewBox="0 0 16 16"><path d="M4.5 1V12.5H15" fill="none" stroke="#222" stroke-width="1.2" /><path d="M2.5 3.5L4.5 1L6.5 3.5M12.5 10.5L15 12.5L12.5 14.5" fill="none" stroke="#222" stroke-width="1.1" /><path d="M4.5 6H9.5V12.5" fill="none" stroke="#d8c820" stroke-width="1.2" /><rect x="8" y="4.5" width="3" height="3" fill="#fff" stroke="#2b2bff" stroke-width="1" /><text x="0" y="6.5" font-family="Liberation Sans, sans-serif" font-size="6" fill="#2b2bff"  >y</text><text x="8" y="16" font-family="Liberation Sans, sans-serif" font-size="6" fill="#2b2bff"  >x</text></svg><svg class="i" style="left:1133px;top:112px" width="16" height="16" viewBox="0 0 16 16"><path d="M0.5 6.5L6.5 1L15.5 9.5L9 15Z" fill="#fff" stroke="#333" stroke-width="1" /><path d="M6.5 3.5L12.5 9.5" fill="none" stroke="#111" stroke-width="1.2" /><path d="M6 6V3H9M10 10H13V7" fill="none" stroke="#111" stroke-width="1" /><rect x="9" y="0" width="7" height="6" fill="#fff" stroke="none" stroke-width="1" /><text x="10.5" y="7.5" font-family="Liberation Sans, sans-serif" font-size="9" fill="#2b2bff">?</text></svg><svg class="i" style="left:1155px;top:112px" width="16" height="16" viewBox="0 0 16 16"><path d="M0.5 14.5H15.5M1.5 14.5L8.5 0.5" fill="none" stroke="#222" stroke-width="1.2" /><path d="M7.5 4.5C11 5 13 9 12.5 13.5" fill="none" stroke="#222" stroke-width="1" /><path d="M10.5 11.5L12.5 14L14.5 11.5" fill="none" stroke="#222" stroke-width="1" /><path d="M7 4.5L10 3.5" fill="none" stroke="#d8c820" stroke-width="1.4" /><text x="10.5" y="7.5" font-family="Liberation Sans, sans-serif" font-size="9" fill="#2b2bff">?</text></svg><svg class="i" style="left:1177px;top:112px" width="16" height="16" viewBox="0 0 16 16"><rect x="0.7" y="1.2" width="13.6" height="12.6" fill="#cfcfcf" stroke="#333" stroke-width="1.3" /><rect x="1.5" y="2" width="12" height="11" fill="none" stroke="#f0f0a0" stroke-width="1" stroke-dasharray="1 1"/><text x="1.5" y="11" font-family="Liberation Sans, sans-serif" font-size="8" fill="#2b2bff" font-weight="bold" textLength="12" lengthAdjust="spacingAndGlyphs">S=?</text></svg><div class="b" style="left:1198px;top:110px;width:1px;height:21px;background:#a0a0a0;"></div><svg class="i" style="left:1205px;top:112px" width="16" height="16" viewBox="0 0 16 16"><path d="M0.5 6.5L6 1.5L9.5 5C8 7 9 8.5 11 8L15 11.5L9.5 15.5L6 11.5C7 10 6 8.5 4 9Z" fill="#fff" stroke="#333" stroke-width="1" /><path d="M5.5 3.5L12 11" fill="none" stroke="#111" stroke-width="1.1" /><path d="M5 6V3H8M9.5 12H12.5V9" fill="none" stroke="#111" stroke-width="1" /><rect x="10" y="0" width="6" height="6" fill="#fff" stroke="none" stroke-width="1" /><text x="11" y="7.5" font-family="Liberation Sans, sans-serif" font-size="9" fill="#2b2bff">?</text></svg><svg class="i" style="left:1227px;top:112px" width="16" height="16" viewBox="0 0 16 16"><path d="M1.5 8.5H10.5V15.5H1.5Z" fill="#fff" stroke="#222" stroke-width="1.1" /><path d="M1.5 8.5L5 4.5H14.5L10.5 8.5M14.5 4.5V11.5L10.5 15.5" fill="none" stroke="#222" stroke-width="1.1" /><path d="M1.5 8.5L5 4.5H14.5" fill="none" stroke="#2b2bff" stroke-width="1.2" stroke-dasharray="2 1.5"/><text x="1" y="4.5" font-family="Liberation Sans, sans-serif" font-size="6.5" fill="#2b2bff" font-weight="bold" textLength="10" lengthAdjust="spacingAndGlyphs">V=?</text><rect x="0.5" y="14.5" width="2" height="2" fill="#2b2bff" stroke="none" stroke-width="1" /><rect x="9.5" y="14.5" width="2" height="2" fill="#2b2bff" stroke="none" stroke-width="1" /><rect x="13.5" y="6" width="2" height="2" fill="#2b2bff" stroke="none" stroke-width="1" /></svg><svg class="i" style="left:1249px;top:112px" width="16" height="16" viewBox="0 0 16 16"><path d="M3.5 5.5H15.5L12.5 15.5H0.5Z" fill="#8a8a8a" stroke="#333" stroke-width="1" /><path d="M2.5 9H14.5M1.5 12.5H13.5M7 5.5L4.5 15.5M11 5.5L8.5 15.5" fill="none" stroke="#333" stroke-width="1" /><text x="1" y="4.5" font-family="Liberation Sans, sans-serif" font-size="6.5" fill="#2b2bff" font-weight="bold" textLength="10" lengthAdjust="spacingAndGlyphs">S=?</text></svg><svg class="i" style="left:1271px;top:112px" width="16" height="16" viewBox="0 0 16 16"><rect x="0.7" y="1" width="6.5" height="8.5" fill="#fff" stroke="#222" stroke-width="1.3" /><rect x="2.3" y="2.8" width="3.4" height="1.8" fill="none" stroke="#222" stroke-width="1" /><rect x="2.3" y="6" width="3.4" height="1.8" fill="none" stroke="#222" stroke-width="1" /><path d="M8.5 1.5H13V5" fill="none" stroke="#2b2bff" stroke-width="1.3" /><path d="M11 4L13 6.5L15 4Z" fill="#2b2bff" stroke="#2b2bff" stroke-width="0.4" /><rect x="9.7" y="7.5" width="5.8" height="8" fill="#fff" stroke="#222" stroke-width="1.3" /><path d="M11 14L14.5 9" fill="none" stroke="#222" stroke-width="1" /></svg><svg class="i" style="left:1294px;top:112px" width="16" height="16" viewBox="0 0 16 16"><path d="M2 6.5L7 1.5H12L8.5 5.5Z" fill="#fff" stroke="#333" stroke-width="1" /><path d="M3.5 7L8 2.5M5.5 7.5L10 3" fill="none" stroke="#555" stroke-width="0.8" /><path d="M11 1.5H14.5V6H11" fill="none" stroke="#333" stroke-width="1" /><path d="M15 0.5V7" fill="none" stroke="#2b2bd0" stroke-width="1.3" /><path d="M3.5 10L7.5 6.5L11 9L7 14.5Z" fill="#f8f8f8" stroke="#333" stroke-width="1" /><path d="M5 9L9 12.5" fill="none" stroke="#e8e030" stroke-width="2" /><path d="M2 12L4.5 15.5L8 15.5" fill="none" stroke="#2b2bd0" stroke-width="1.6" /></svg><div class="b" style="left:0px;top:23px;width:1px;height:109px;background:#eef1fa;"></div></div>
<div class="w" style="top:114px;height:134px;"><div style="position:absolute;left:0;top:-114px;"><div class="b" style="left:0px;top:114px;width:1366px;height:23px;background:#fff;"></div><svg class="i" style="left:2.2px;top:116.6px" width="16" height="16" viewBox="0 0 16 16"><circle cx="8" cy="8" r="7.8" fill="#383838"/><circle cx="8" cy="8" r="6.3" fill="none" stroke="#666" stroke-width="0.6"/><text x="8" y="10.2" font-family='&quot;Liberation Sans&quot;, sans-serif' font-size="6" font-weight="bold" fill="#fff" text-anchor="middle" textLength="11" lengthAdjust="spacingAndGlyphs">2015</text></svg><span id="t22" class="t" style="left:23.00px;top:119.84px;font-size:12px;line-height:12px;color:#000;transform:scaleX(0.9726);">TurboCAD 2015 Deluxe 64-bit - [plan Globalny Rzut z Góry]</span><svg class="i" style="left:1240px;top:114px" width="120" height="20" viewBox="0 0 120 20"><path d="M5 10.5H15" stroke="#000" stroke-width="1"/><path d="M50.5 7.5H58.5V15.5H50.5Z M52.5 7.5V5.5H60.5V13.5H58.5" fill="none" stroke="#000" stroke-width="1"/><path d="M96 5L106 15M106 5L96 15" stroke="#000" stroke-width="1.1"/></svg><div class="b" style="left:0px;top:137px;width:1366px;height:24px;background:#fff;"></div><div class="b" style="left:0px;top:161px;width:1366px;height:1px;background:#a6a6a6;"></div><div class="b" style="left:1365px;top:137px;width:1px;height:24px;background:#a6a6a6;"></div><svg class="i" style="left:4px;top:139px" width="2" height="21"><rect x="0" y="0" width="2" height="2" fill="#b4b4b4"/><rect x="0" y="4" width="2" height="2" fill="#b4b4b4"/><rect x="0" y="8" width="2" height="2" fill="#b4b4b4"/><rect x="0" y="12" width="2" height="2" fill="#b4b4b4"/><rect x="0" y="16" width="2" height="2" fill="#b4b4b4"/></svg><span id="t23" class="t" style="left:18.00px;top:143.84px;font-size:12px;line-height:12px;color:#000;transform:scaleX(0.9822);">Plik</span><span id="t24" class="t" style="left:53.50px;top:143.84px;font-size:12px;line-height:12px;color:#000;transform:scaleX(0.9297);">Edycja</span><span id="t25" class="t" style="left:103.50px;top:143.84px;font-size:12px;line-height:12px;color:#000;transform:scaleX(1.0197);">Widok</span><span id="t26" class="t" style="left:153.00px;top:143.84px;font-size:12px;line-height:12px;color:#000;transform:scaleX(0.9861);">Wstaw</span><span id="t27" class="t" style="left:204.50px;top:143.84px;font-size:12px;line-height:12px;color:#000;transform:scaleX(0.9996);">Format</span><span id="t28" class="t" style="left:258.50px;top:143.84px;font-size:12px;line-height:12px;color:#000;transform:scaleX(0.9254);">Narzędzia</span><span id="t29" class="t" style="left:325.50px;top:143.84px;font-size:12px;line-height:12px;color:#000;transform:scaleX(0.9162);">Rysuj</span><span id="t30" class="t" style="left:369.00px;top:143.84px;font-size:12px;line-height:12px;color:#000;transform:scaleX(1.0108);">Wymiar</span><span id="t31" class="t" style="left:426.50px;top:143.84px;font-size:12px;line-height:12px;color:#000;transform:scaleX(0.9995);">Architektura</span><span id="t32" class="t" style="left:507.00px;top:143.84px;font-size:12px;line-height:12px;color:#000;transform:scaleX(1.0259);">Modyfikacja</span><span id="t33" class="t" style="left:588.50px;top:143.84px;font-size:12px;line-height:12px;color:#000;transform:scaleX(0.9641);">Tryby</span><span id="t34" class="t" style="left:634.50px;top:143.84px;font-size:12px;line-height:12px;color:#000;transform:scaleX(0.9726);">Opcje</span><span id="t35" class="t" style="left:681.00px;top:143.84px;font-size:12px;line-height:12px;color:#000;transform:scaleX(0.9935);">Okno</span><span id="t36" class="t" style="left:726.50px;top:143.84px;font-size:12px;line-height:12px;color:#000;transform:scaleX(1.0038);">Pomoc</span><div class="b" style="left:1316px;top:142px;width:15px;height:15px;background:#fff;border:1px solid #dcdcdc;box-sizing:border-box;"></div><svg class="i" style="left:1316px;top:142px" width="15" height="15" viewBox="0 0 15 15"><rect x="4" y="10" width="6" height="2" fill="#5a6478" stroke="none" stroke-width="1" /></svg><div class="b" style="left:1332px;top:142px;width:15px;height:15px;background:#fff;border:1px solid #dcdcdc;box-sizing:border-box;"></div><svg class="i" style="left:1332px;top:142px" width="15" height="15" viewBox="0 0 15 15"><path d="M6.5 4.5H11.5V8.5 M4.5 6.5H9.5V11.5H4.5Z" fill="none" stroke="#5a6478" stroke-width="1" /><rect x="4" y="6" width="6" height="2" fill="#5a6478" stroke="none" stroke-width="1" /><rect x="6" y="4" width="6" height="1.5" fill="#5a6478" stroke="none" stroke-width="1" /></svg><div class="b" style="left:1348px;top:142px;width:15px;height:15px;background:#fff;border:1px solid #dcdcdc;box-sizing:border-box;"></div><svg class="i" style="left:1348px;top:142px" width="15" height="15" viewBox="0 0 15 15"><path d="M4.5 4.5L10.5 10.5M10.5 4.5L4.5 10.5" fill="none" stroke="#5a6478" stroke-width="2" /></svg><div class="b" style="left:0px;top:162px;width:1366px;height:28px;background:#fff;"></div><div class="b" style="left:0px;top:190px;width:980px;height:1px;background:#a6a6a6;"></div><div class="b" style="left:923px;top:162px;width:1px;height:28px;background:#a6a6a6;"></div><div class="b" style="left:980px;top:162px;width:1px;height:29px;background:#a6a6a6;"></div><svg class="i" style="left:4px;top:164px" width="2" height="24"><rect x="0" y="0" width="2" height="2" fill="#b4b4b4"/><rect x="0" y="4" width="2" height="2" fill="#b4b4b4"/><rect x="0" y="8" width="2" height="2" fill="#b4b4b4"/><rect x="0" y="12" width="2" height="2" fill="#b4b4b4"/><rect x="0" y="16" width="2" height="2" fill="#b4b4b4"/><rect x="0" y="20" width="2" height="2" fill="#b4b4b4"/></svg><svg class="i" style="left:929px;top:164px" width="2" height="24"><rect x="0" y="0" width="2" height="2" fill="#b4b4b4"/><rect x="0" y="4" width="2" height="2" fill="#b4b4b4"/><rect x="0" y="8" width="2" height="2" fill="#b4b4b4"/><rect x="0" y="12" width="2" height="2" fill="#b4b4b4"/><rect x="0" y="16" width="2" height="2" fill="#b4b4b4"/><rect x="0" y="20" width="2" height="2" fill="#b4b4b4"/></svg><div class="b" style="left:470px;top:165px;width:22px;height:21px;background:#cce8ff;border:1px solid #99d1ff;box-sizing:border-box;"></div><div class="b" style="left:492px;top:165px;width:22px;height:21px;background:#cce8ff;border:1px solid #99d1ff;box-sizing:border-box;"></div><svg class="i" style="left:14px;top:168px" width="16" height="16" viewBox="0 0 16 16"><path d="M2.5 2H9.5L12.5 5V13.5H2.5Z" fill="#fff" stroke="#404040" stroke-width="1.2" /><path d="M9.5 2V5H12.5" fill="none" stroke="#404040" stroke-width="1" /></svg><svg class="i" style="left:36px;top:168px" width="16" height="16" viewBox="0 0 16 16"><path d="M0.5 13.5V5.5H3.5L4.5 6.5H9.5V9" fill="#f6f28a" stroke="#555" stroke-width="1" /><path d="M0.5 13.5L3.5 9H15L11 13.5Z" fill="#a5a54a" stroke="#555" stroke-width="1" /><path d="M7.5 3.5C9 1.5 12 1.5 13.5 4" fill="none" stroke="#333" stroke-width="1" /><path d="M14.5 1.5V5H11" fill="none" stroke="#333" stroke-width="1" /></svg><svg class="i" style="left:58px;top:168px" width="16" height="16" viewBox="0 0 16 16"><rect x="1.5" y="2" width="13" height="12.5" fill="#a5a54a" stroke="#444" stroke-width="1" /><rect x="3.5" y="2.5" width="8.5" height="5.5" fill="#d4d4d4" stroke="#888" stroke-width="0.6" /><rect x="4" y="10" width="7.5" height="4.5" fill="#3c3c3c" stroke="none" stroke-width="1" /><rect x="8.5" y="11" width="2" height="3" fill="#d8d8d8" stroke="none" stroke-width="1" /><rect x="13" y="3" width="1" height="1" fill="#fff" stroke="none" stroke-width="1" /></svg><div class="b" style="left:78px;top:166px;width:1px;height:21px;background:#a0a0a0;"></div><svg class="i" style="left:85px;top:168px" width="16" height="16" viewBox="0 0 16 16"><path d="M3.5 7L5 1.5H13.5L12 7" fill="#fff" stroke="#444" stroke-width="1" /><path d="M6 3.5H11.5M5.5 5.5H11" fill="none" stroke="#666" stroke-width="0.8" /><path d="M1 8.5Q1 7 3 7H13Q15.5 7 15.5 8.5V11.5Q15.5 13 13 13H3Q1 13 1 11.5Z" fill="#c8c8c8" stroke="#333" stroke-width="1" /><rect x="2" y="10.2" width="12.5" height="1.2" fill="#555" stroke="none" stroke-width="1" /><rect x="8" y="10" width="3" height="1.4" fill="#f2e640" stroke="none" stroke-width="1" /><path d="M2.5 14.5H13" fill="none" stroke="#333" stroke-width="1.2" /></svg><svg class="i" style="left:107px;top:168px" width="16" height="16" viewBox="0 0 16 16"><path d="M0.5 1.5H7.5L10.5 4.5V14.5H0.5Z" fill="#fff" stroke="#404040" stroke-width="1.1" /><path d="M7.5 1.5V4.5H10.5" fill="none" stroke="#404040" stroke-width="1" /><circle cx="9.5" cy="9.5" r="3.6" fill="#7fe7ee" stroke="#555" stroke-width="1.2" /><circle cx="8.6" cy="8.6" r="1.3" fill="#d8fbff" stroke="none" stroke-width="1" /><path d="M12.2 12.2L15.5 15.5" fill="none" stroke="#222" stroke-width="2" /></svg><div class="b" style="left:128px;top:166px;width:1px;height:21px;background:#a0a0a0;"></div><svg class="i" style="left:136px;top:168px" width="16" height="16" viewBox="0 0 16 16"><path d="M5 1L9.5 11M11 1L6.5 11" fill="none" stroke="#a8a8a8" stroke-width="1.1" /><circle cx="5" cy="12.5" r="1.8" fill="none" stroke="#a8a8a8" stroke-width="1.1" /><circle cx="11" cy="12.5" r="1.8" fill="none" stroke="#a8a8a8" stroke-width="1.1" /></svg><svg class="i" style="left:158px;top:168px" width="16" height="16" viewBox="0 0 16 16"><path d="M0.5 1.5H6L8.5 4V10.5H0.5Z" fill="#f4f4f4" stroke="#a8a8a8" stroke-width="1" /><path d="M2 4.5H5.5M2 6.5H6.5M2 8.5H6.5" fill="none" stroke="#a8a8a8" stroke-width="1" /><path d="M6.5 5.5H12L14.5 8V14.5H6.5Z" fill="#f4f4f4" stroke="#a8a8a8" stroke-width="1" /><path d="M8 9H12.5M8 11H12.5M8 13H12.5" fill="none" stroke="#a8a8a8" stroke-width="1" /></svg><svg class="i" style="left:180px;top:168px" width="16" height="16" viewBox="0 0 16 16"><rect x="0.8" y="3" width="12" height="11.5" fill="#a3a35a" stroke="#333" stroke-width="1.2" rx="1.5"/><path d="M4 3.5L5.5 1H8.5L10 3.5Z" fill="#f0e860" stroke="#333" stroke-width="1" /><rect x="7" y="8" width="8.5" height="6.5" fill="#fff" stroke="#3030c8" stroke-width="1.4" /><path d="M9 10.5H12M9 12.5H13.5" fill="none" stroke="#3030c8" stroke-width="1.2" /></svg><svg class="i" style="left:202px;top:168px" width="16" height="16" viewBox="0 0 16 16"><path d="M10.5 4.5L13.5 1L15.5 2.5L12.5 6.5Z" fill="#3838a8" stroke="#222" stroke-width="1" /><path d="M2 9L9 4L12.5 8L7.5 14Z" fill="#f8f8f8" stroke="#333" stroke-width="1" /><path d="M5 7L10 12.5" fill="none" stroke="#e8e030" stroke-width="2.2" /><path d="M0.5 15.5H5.5" fill="none" stroke="#e8e030" stroke-width="1.2" stroke-dasharray="1.5 1"/></svg><div class="b" style="left:222px;top:166px;width:1px;height:21px;background:#a0a0a0;"></div><svg class="i" style="left:230px;top:168px" width="16" height="16" viewBox="0 0 16 16"><path d="M3.5 7.5C6 3 12 3.5 12.5 7.5C12.8 10 11 11 10 11.5" fill="none" stroke="#3535b5" stroke-width="1.35" /><path d="M2 4.5V10H7.5Z" fill="#3535b5" stroke="#3535b5" stroke-width="0.5" /></svg><svg class="i" style="left:252px;top:168px" width="16" height="16" viewBox="0 0 16 16"><path d="M12.5 7.5C10 3 4 3.5 3.5 7.5C3.2 10 5 11 6 11.5" fill="none" stroke="#a8a8a8" stroke-width="1.35" /><path d="M14 4.5V10H8.5Z" fill="#a8a8a8" stroke="#a8a8a8" stroke-width="0.5" /></svg><div class="b" style="left:272px;top:166px;width:1px;height:21px;background:#a0a0a0;"></div><svg class="i" style="left:279px;top:168px" width="16" height="16" viewBox="0 0 16 16"><circle cx="9.8" cy="7.3" r="6.2" fill="none" stroke="#404040" stroke-width="1.05" stroke-dasharray="5 1.6"/><path d="M7.3 7.5H12.3M9.8 5V10" fill="none" stroke="#222" stroke-width="1.1" /><path d="M5 12L1.2 15.3" fill="none" stroke="#444" stroke-width="2" /><path d="M4 12L1.2 14.4" fill="none" stroke="#aaa" stroke-width="0.8" /></svg><svg class="i" style="left:301px;top:168px" width="16" height="16" viewBox="0 0 16 16"><circle cx="9.8" cy="7.3" r="6.2" fill="none" stroke="#404040" stroke-width="1.05" stroke-dasharray="5 1.6"/><path d="M7.3 7.5H12.3" fill="none" stroke="#222" stroke-width="1.1" /><path d="M5 12L1.2 15.3" fill="none" stroke="#444" stroke-width="2" /><path d="M4 12L1.2 14.4" fill="none" stroke="#aaa" stroke-width="0.8" /></svg><svg class="i" style="left:324px;top:168px" width="16" height="16" viewBox="0 0 16 16"><rect x="0.5" y="1.5" width="11" height="12" fill="none" stroke="#333" stroke-width="1.2" stroke-dasharray="1.2 1.2"/><path d="M11.5 7.5C7 6.5 4 10.5 6 14.5" fill="#fff" stroke="#333" stroke-width="1.1" /><rect x="7.5" y="7" width="8" height="9" fill="#fff" stroke="none" stroke-width="1" /><path d="M12 7.5C8 7 5 10.5 6.5 14.5" fill="none" stroke="#333" stroke-width="1.1" stroke-dasharray="4 1.5"/><path d="M8.5 12.5H13.5M11 10V15" fill="none" stroke="#222" stroke-width="1.1" /><rect x="14.5" y="8" width="1" height="1" fill="#333" stroke="none" stroke-width="1" /></svg><svg class="i" style="left:346px;top:168px" width="16" height="16" viewBox="0 0 16 16"><rect x="0.6" y="1.6" width="14" height="11.8" fill="#fff" stroke="#333" stroke-width="1.1" rx="1.5"/><path d="M1.5 5.5H6M9.5 5.5H14" fill="none" stroke="#3535b5" stroke-width="1.2" /><path d="M1.5 5.5L4 3.3V7.7Z M14 5.5L11.5 3.3V7.7Z" fill="#3535b5" stroke="#3535b5" stroke-width="0.3" /></svg><svg class="i" style="left:368px;top:168px" width="16" height="16" viewBox="0 0 16 16"><rect x="0.5" y="1.5" width="14.5" height="12.5" fill="#b9b9b9" stroke="#a5a5a5" stroke-width="1" /><rect x="4.5" y="3.5" width="6.5" height="8.5" fill="#e6e6e6" stroke="#999" stroke-width="0.8" /><path d="M6 6H9.5M6 8H9.5M6 10H9.5" fill="none" stroke="#9a9a9a" stroke-width="0.9" /></svg><svg class="i" style="left:390px;top:168px" width="16" height="16" viewBox="0 0 16 16"><circle cx="9" cy="6.5" r="6" fill="none" stroke="#b0b0b0" stroke-width="1.1" /><rect x="5.5" y="3.5" width="7" height="6" fill="#f4f4f4" stroke="#b5b5b5" stroke-width="1.4" /><path d="M4.5 11L0.8 14.8" fill="none" stroke="#9a9a9a" stroke-width="2.2" /></svg><div class="b" style="left:410px;top:166px;width:1px;height:21px;background:#a0a0a0;"></div><svg class="i" style="left:418px;top:168px" width="16" height="16" viewBox="0 0 16 16"><text x="1" y="6.3" font-family="Liberation Sans, sans-serif" font-size="6.2" fill="#000"  textLength="12.5" lengthAdjust="spacingAndGlyphs" stroke="#000" stroke-width=".2">ABC</text><path d="M2 10.5L5.5 14L15 3.5" fill="none" stroke="#2b2ba0" stroke-width="1.7" /></svg><div class="b" style="left:438px;top:166px;width:1px;height:21px;background:#a0a0a0;"></div><svg class="i" style="left:445px;top:168px" width="16" height="16" viewBox="0 0 16 16"><path d="M2.5 2.5L7.5 7.5M7.5 2.5L2.5 7.5" fill="none" stroke="#aaa" stroke-width="1" /><rect x="5" y="9" width="1.2" height="1.2" fill="#3838ff" stroke="none" stroke-width="1" /><rect x="5" y="11.5" width="1.2" height="1.2" fill="#3838ff" stroke="none" stroke-width="1" /><rect x="5" y="14" width="1.2" height="1.2" fill="#3838ff" stroke="none" stroke-width="1" /><rect x="8" y="9" width="1.2" height="1.2" fill="#3838ff" stroke="none" stroke-width="1" /><rect x="8" y="11.5" width="1.2" height="1.2" fill="#3838ff" stroke="none" stroke-width="1" /><rect x="8" y="14" width="1.2" height="1.2" fill="#3838ff" stroke="none" stroke-width="1" /><rect x="11" y="9" width="1.2" height="1.2" fill="#3838ff" stroke="none" stroke-width="1" /><rect x="11" y="11.5" width="1.2" height="1.2" fill="#3838ff" stroke="none" stroke-width="1" /><rect x="11" y="14" width="1.2" height="1.2" fill="#3838ff" stroke="none" stroke-width="1" /><rect x="14" y="9" width="1.2" height="1.2" fill="#3838ff" stroke="none" stroke-width="1" /><rect x="14" y="11.5" width="1.2" height="1.2" fill="#3838ff" stroke="none" stroke-width="1" /><rect x="14" y="14" width="1.2" height="1.2" fill="#3838ff" stroke="none" stroke-width="1" /><rect x="11" y="4" width="1.2" height="1.2" fill="#3838ff" stroke="none" stroke-width="1" /><rect x="11" y="6.5" width="1.2" height="1.2" fill="#3838ff" stroke="none" stroke-width="1" /><rect x="14" y="4" width="1.2" height="1.2" fill="#3838ff" stroke="none" stroke-width="1" /><rect x="14" y="6.5" width="1.2" height="1.2" fill="#3838ff" stroke="none" stroke-width="1" /></svg><div class="b" style="left:466px;top:166px;width:1px;height:21px;background:#a0a0a0;"></div><svg class="i" style="left:473px;top:168px" width="16" height="16" viewBox="0 0 16 16"><path d="M3.5 5.5L8.5 2.5L14.5 9.5L12 13.5H8.5Z" fill="#fff" stroke="#8a8a8a" stroke-width="1" /><path d="M3 1.4H9.8" fill="none" stroke="#000" stroke-width="1.3" stroke-dasharray="2 .8"/><path d="M2.2 2.3V4.2" fill="none" stroke="#000" stroke-width="1.4" /><path d="M2.2 6.5L5.5 4M2.5 6.5L8.5 13.5" fill="none" stroke="#000" stroke-width="1.5" /><path d="M5 7L7.5 5" fill="none" stroke="#777" stroke-width="0.8" /><text x="12" y="4.6" font-family="Liberation Sans, sans-serif" font-size="5.5" fill="#f00000" font-weight="bold" >Y</text><text x="0" y="15.2" font-family="Liberation Sans, sans-serif" font-size="7" fill="#f00000" font-weight="bold" >x</text></svg><svg class="i" style="left:495px;top:168px" width="16" height="16" viewBox="0 0 16 16"><rect x="4.5" y="7" width="2.5" height="5" fill="#d4dce6" stroke="#8a8a8a" stroke-width="0.8" /><path d="M7 3L12.5 8.5V12.5H8.7" fill="none" stroke="#000080" stroke-width="1.5" /><path d="M8.7 8.5H12.5" fill="none" stroke="#000080" stroke-width="1.3" /><path d="M2.3 1.3V10.5L7.8 16H8.7V7.5Z" fill="none" stroke="#e81818" stroke-width="1.1" /></svg><div class="b" style="left:517px;top:166px;width:1px;height:21px;background:#a0a0a0;"></div><svg class="i" style="left:523px;top:168px" width="16" height="16" viewBox="0 0 16 16"><rect x="8" y="0.8" width="7" height="5.5" fill="#fff" stroke="#3a3ac0" stroke-width="1.2" /><rect x="8" y="0.8" width="7" height="1.8" fill="#3a3ac0" stroke="none" stroke-width="1" /><path d="M0.5 14V7H3L4 8H8V9.5" fill="#f6f28a" stroke="#555" stroke-width="1" /><path d="M0.5 14L3.5 9.5H12.5L9 14Z" fill="#a5a54a" stroke="#555" stroke-width="1" /><path d="M2 5.5C2 3 4 2.5 6.5 2.5" fill="none" stroke="#222" stroke-width="1" /><path d="M5 1L7 2.5L5 4" fill="none" stroke="#222" stroke-width="1" /></svg><svg class="i" style="left:545px;top:168px" width="16" height="16" viewBox="0 0 16 16"><path d="M5.5 4.5L8.5 1.5H14.5L11.5 4.5Z" fill="#7fe4ea" stroke="#444" stroke-width="1" /><path d="M5.5 4.5H11.5V10.5H5.5Z" fill="#fff" stroke="#444" stroke-width="1" /><path d="M11.5 4.5L14.5 1.5V7.5L11.5 10.5" fill="#e8e8e8" stroke="#444" stroke-width="1" /><path d="M8 10V7.5H11" fill="none" stroke="#999" stroke-width="0.8" /><path d="M2.5 5V14.5H10" fill="none" stroke="#2b2bd0" stroke-width="1.2" /><path d="M1 7L2.5 4.5L4 7" fill="none" stroke="#2b2bd0" stroke-width="1" /><path d="M2.5 14.5L5.5 11.5" fill="none" stroke="#20a020" stroke-width="1" /><path d="M4 14.5H10.5" fill="none" stroke="#d03030" stroke-width="1.2" /><path d="M8.5 13L10.5 14.5L8.5 16" fill="none" stroke="#d03030" stroke-width="1" /></svg><div class="b" style="left:566px;top:166px;width:1px;height:21px;background:#a0a0a0;"></div><svg class="i" style="left:573px;top:168px" width="16" height="16" viewBox="0 0 16 16"><path d="M1 3.5H8.5L10.5 6V14.5H1Z" fill="#fff" stroke="#333" stroke-width="1.1" /><path d="M5 5L9 1.5H13L10.5 4.5" fill="#fff" stroke="#333" stroke-width="1" /><path d="M5.5 5L9 2M7 6L10.5 3M8.5 6.5L11.5 4" fill="none" stroke="#555" stroke-width="0.8" /><path d="M13 1.5C15.5 2 15.5 5 13.5 5.5H10.5" fill="none" stroke="#333" stroke-width="1" /><path d="M15.5 1V6.5" fill="none" stroke="#2b2bd0" stroke-width="1.2" /></svg><div class="b" style="left:594px;top:166px;width:1px;height:21px;background:#a0a0a0;"></div><svg class="i" style="left:432.3px;top:182.8px" width="4" height="4"><path d="M4 0V4H0Z" fill="#222"/></svg><svg class="i" style="left:460.3px;top:182.8px" width="4" height="4"><path d="M4 0V4H0Z" fill="#222"/></svg><svg class="i" style="left:488.3px;top:182.8px" width="4" height="4"><path d="M4 0V4H0Z" fill="#222"/></svg><svg class="i" style="left:510.3px;top:182.8px" width="4" height="4"><path d="M4 0V4H0Z" fill="#222"/></svg><svg class="i" style="left:538.5px;top:182.8px" width="4" height="4"><path d="M4 0V4H0Z" fill="#222"/></svg><svg class="i" style="left:560.8px;top:182.8px" width="4" height="4"><path d="M4 0V4H0Z" fill="#222"/></svg><svg class="i" style="left:588.8px;top:182.8px" width="4" height="4"><path d="M4 0V4H0Z" fill="#222"/></svg><svg class="i" style="left:918.3px;top:182.8px" width="4" height="4"><path d="M4 0V4H0Z" fill="#222"/></svg><div class="b" style="left:598px;top:164px;width:301px;height:25px;background:#fff;border:1px solid #adadad;box-sizing:border-box;"></div><div class="b" style="left:880px;top:165px;width:18px;height:23px;background:#e1e1e1;border-left:1px solid #adadad;border-right:1px solid #adadad;box-sizing:border-box;"></div><svg class="i" style="left:884.5px;top:174.3px" width="9" height="6"><path d="M0.5 0.5L4.5 4.5L8.5 0.5" fill="none" stroke="#505050" stroke-width="1.05"/></svg><span id="t37" class="t" style="left:604.20px;top:171.24px;font-size:12px;line-height:12px;color:#000;transform:scaleX(0.9906);">Wymiary zwykłe</span><svg class="i" style="left:902px;top:168px" width="16" height="16" viewBox="0 0 16 16"><path d="M1 1V12.5L3.8 10L6 14.5L7.8 13.6L5.7 9.3H9.5Z" fill="#222" stroke="#222" stroke-width="0.6" /><text x="8.2" y="11.5" font-family="Liberation Serif, serif" font-size="14.5" font-weight="bold" fill="#2e2a9c" stroke="#2e2a9c" stroke-width=".3">?</text></svg><svg class="i" style="left:937px;top:168px" width="16" height="16" viewBox="0 0 16 16"><rect x="1" y="1" width="13.5" height="14" fill="#dba98a" stroke="#c08a66" stroke-width="1" rx="1.8"/><rect x="1" y="1" width="3" height="14" fill="#b9805c" stroke="none" stroke-width="0" rx="1"/><circle cx="8.5" cy="8" r="2.8" fill="none" stroke="#f3dccf" stroke-width="1" /><circle cx="8.5" cy="8" r="0.9" fill="#f3dccf" stroke="none" stroke-width="1" /><rect x="14" y="2" width="1.5" height="12" fill="#f2f2f2" stroke="#ddd" stroke-width="0.5" /><rect x="1.4" y="3" width="1.4" height="0.9" fill="#f0e0d6" stroke="none" stroke-width="1" /><rect x="1.4" y="5.5" width="1.4" height="0.9" fill="#f0e0d6" stroke="none" stroke-width="1" /><rect x="1.4" y="8" width="1.4" height="0.9" fill="#f0e0d6" stroke="none" stroke-width="1" /><rect x="1.4" y="10.5" width="1.4" height="0.9" fill="#f0e0d6" stroke="none" stroke-width="1" /><rect x="1.4" y="13" width="1.4" height="0.9" fill="#f0e0d6" stroke="none" stroke-width="1" /></svg><svg class="i" style="left:959px;top:168px" width="16" height="16" viewBox="0 0 16 16"><rect x="0.5" y="4.5" width="14.5" height="9" fill="#f7e45c" stroke="#f0a030" stroke-width="0.6" /><path d="M0.5 4.5L7.5 10L15 4.5" fill="none" stroke="#fdf6b0" stroke-width="1.2" /><path d="M0.5 13.5L5.5 9M15 13.5L10 9" fill="none" stroke="#fdf6b0" stroke-width="1" /><path d="M0 14.5H15.5M15.5 9V14.5" fill="none" stroke="#f850f0" stroke-width="1" /><path d="M13 8.5V2.5" fill="none" stroke="#48b848" stroke-width="1.8" /><path d="M10.8 5L13 2L15.2 5Z" fill="#48b848" stroke="#48b848" stroke-width="0.4" /></svg><div class="b" style="left:0px;top:191px;width:1366px;height:28px;background:#fff;"></div><div class="b" style="left:0px;top:219px;width:1199px;height:1px;background:#a6a6a6;"></div><div class="b" style="left:1121px;top:191px;width:1px;height:28px;background:#a6a6a6;"></div><div class="b" style="left:1198px;top:191px;width:1px;height:29px;background:#a6a6a6;"></div><div class="b" style="left:981px;top:190px;width:218px;height:1px;background:#d0d0d0;"></div><svg class="i" style="left:4px;top:193px" width="2" height="24"><rect x="0" y="0" width="2" height="2" fill="#b4b4b4"/><rect x="0" y="4" width="2" height="2" fill="#b4b4b4"/><rect x="0" y="8" width="2" height="2" fill="#b4b4b4"/><rect x="0" y="12" width="2" height="2" fill="#b4b4b4"/><rect x="0" y="16" width="2" height="2" fill="#b4b4b4"/><rect x="0" y="20" width="2" height="2" fill="#b4b4b4"/></svg><svg class="i" style="left:1126px;top:193px" width="2" height="24"><rect x="0" y="0" width="2" height="2" fill="#b4b4b4"/><rect x="0" y="4" width="2" height="2" fill="#b4b4b4"/><rect x="0" y="8" width="2" height="2" fill="#b4b4b4"/><rect x="0" y="12" width="2" height="2" fill="#b4b4b4"/><rect x="0" y="16" width="2" height="2" fill="#b4b4b4"/><rect x="0" y="20" width="2" height="2" fill="#b4b4b4"/></svg><svg class="i" style="left:13px;top:197px" width="16" height="16" viewBox="0 0 16 16"><g transform="translate(1.2 1.6) scale(.87)"><rect x="-1.3" y="-7.2" width="2.6" height="3" fill="none" stroke="#9a9a8a" stroke-width=".9" transform="translate(8 8.5) rotate(0)"/><rect x="-1.3" y="-7.2" width="2.6" height="3" fill="none" stroke="#9a9a8a" stroke-width=".9" transform="translate(8 8.5) rotate(45)"/><rect x="-1.3" y="-7.2" width="2.6" height="3" fill="none" stroke="#9a9a8a" stroke-width=".9" transform="translate(8 8.5) rotate(90)"/><rect x="-1.3" y="-7.2" width="2.6" height="3" fill="none" stroke="#9a9a8a" stroke-width=".9" transform="translate(8 8.5) rotate(135)"/><rect x="-1.3" y="-7.2" width="2.6" height="3" fill="none" stroke="#9a9a8a" stroke-width=".9" transform="translate(8 8.5) rotate(180)"/><rect x="-1.3" y="-7.2" width="2.6" height="3" fill="none" stroke="#9a9a8a" stroke-width=".9" transform="translate(8 8.5) rotate(225)"/><rect x="-1.3" y="-7.2" width="2.6" height="3" fill="none" stroke="#9a9a8a" stroke-width=".9" transform="translate(8 8.5) rotate(270)"/><rect x="-1.3" y="-7.2" width="2.6" height="3" fill="none" stroke="#9a9a8a" stroke-width=".9" transform="translate(8 8.5) rotate(315)"/><circle cx="8" cy="8.5" r="4.6" fill="#e4e4e0" stroke="#a0a090" stroke-width="1" /><circle cx="8" cy="8.5" r="2.1" fill="#fff" stroke="#a0a090" stroke-width="1" /></g></svg><svg class="i" style="left:35px;top:197px" width="16" height="16" viewBox="0 0 16 16"><path d="M1 11.5L5.5 14H16L12 11.5Z" fill="#6ae8f0" stroke="#333" stroke-width="0.9" /><path d="M1 9L5.5 11.5H16L12 9Z" fill="#f6ee50" stroke="#333" stroke-width="0.9" /><path d="M1 6.5L5.5 9.5H16L11.5 5.5L6 4.5Z" fill="#40d848" stroke="#333" stroke-width="0.9" /><path d="M6 5.5L10 1.5L14 4.5L11.5 7.5Z" fill="#fff" stroke="#444" stroke-width="0.9" /><path d="M7.5 5.5L10.5 2.5M9 6.5L12 3.5" fill="none" stroke="#666" stroke-width="0.8" /><path d="M11 1H15.5V5.5H12.5" fill="none" stroke="#333" stroke-width="0.9" /><path d="M15.8 0.5V6" fill="none" stroke="#2b2bd0" stroke-width="1.2" /></svg><div class="b" style="left:54px;top:193px;width:297px;height:25px;background:#fff;border:1px solid #adadad;box-sizing:border-box;"></div><div class="b" style="left:332px;top:194px;width:18px;height:23px;background:#e1e1e1;border-left:1px solid #adadad;border-right:1px solid #adadad;box-sizing:border-box;"></div><svg class="i" style="left:336.5px;top:203.3px" width="9" height="6"><path d="M0.5 0.5L4.5 4.5L8.5 0.5" fill="none" stroke="#505050" stroke-width="1.05"/></svg><svg class="i" style="left:58px;top:197px" width="16" height="16" viewBox="0 0 16 16"><path d="M0.8 8.5C3.5 3.5 10.5 3 13.5 6.5C12 11 5 12.5 0.8 8.5Z" fill="#fff" stroke="#222" stroke-width="1.3" /><circle cx="7.3" cy="7.6" r="3" fill="#2b4fb5" stroke="#112" stroke-width="0.8" /><circle cx="7.3" cy="7.6" r="1.2" fill="#0a0a30" stroke="none" stroke-width="1" /><circle cx="6.3" cy="6.6" r="0.8" fill="#cfe0ff" stroke="none" stroke-width="1" /><path d="M1 10C4 13 10 12.5 13 9" fill="none" stroke="#888" stroke-width="0.8" /></svg><svg class="i" style="left:75px;top:197px" width="16" height="16" viewBox="0 0 16 16"><g transform="translate(1.2 2.2) scale(.84)"><path d="M7 7V3.5Q7 1 9.5 1Q12 1 12 3.5V5" fill="none" stroke="#c9c9c9" stroke-width="1.3" /><circle cx="6" cy="9.5" r="4.8" fill="#dedede" stroke="#c4c4c4" stroke-width="1" /><circle cx="5.5" cy="9.3" r="1.2" fill="#f3f3f3" stroke="none" stroke-width="1" /><path d="M5.5 9.5V11.5" fill="none" stroke="#f3f3f3" stroke-width="1" /></g></svg><div class="b" style="left:91px;top:197px;width:17px;height:17px;background:#000;"></div><span id="t38" class="t" style="left:117.50px;top:200.44px;font-size:12px;line-height:12px;color:#000;transform:scaleX(0.8972);">0</span><div class="b" style="left:351px;top:193px;width:100px;height:25px;background:#fff;border:1px solid #adadad;box-sizing:border-box;"></div><div class="b" style="left:354px;top:195px;width:78px;height:22px;background:#000;"></div><div class="b" style="left:432px;top:194px;width:18px;height:23px;background:#e1e1e1;border-left:1px solid #adadad;border-right:1px solid #adadad;box-sizing:border-box;"></div><svg class="i" style="left:436.5px;top:203.3px" width="9" height="6"><path d="M0.5 0.5L4.5 4.5L8.5 0.5" fill="none" stroke="#505050" stroke-width="1.05"/></svg><span id="t39" class="t" style="left:376.50px;top:200.44px;font-size:12px;line-height:12px;color:#fff;transform:scaleX(0.9312);">Czarny</span><div class="b" style="left:451px;top:193px;width:100px;height:25px;background:#fff;border:1px solid #adadad;box-sizing:border-box;"></div><div class="b" style="left:532px;top:194px;width:18px;height:23px;background:#e1e1e1;border-left:1px solid #adadad;border-right:1px solid #adadad;box-sizing:border-box;"></div><svg class="i" style="left:536.5px;top:203.3px" width="9" height="6"><path d="M0.5 0.5L4.5 4.5L8.5 0.5" fill="none" stroke="#505050" stroke-width="1.05"/></svg><div class="b" style="left:456px;top:206px;width:74px;height:1px;background:#000;"></div><div class="b" style="left:551px;top:193px;width:100px;height:25px;background:#fff;border:1px solid #adadad;box-sizing:border-box;"></div><div class="b" style="left:632px;top:194px;width:18px;height:23px;background:#e1e1e1;border-left:1px solid #adadad;border-right:1px solid #adadad;box-sizing:border-box;"></div><svg class="i" style="left:636.5px;top:203.3px" width="9" height="6"><path d="M0.5 0.5L4.5 4.5L8.5 0.5" fill="none" stroke="#505050" stroke-width="1.05"/></svg><span id="t40" class="t" style="left:555.00px;top:200.44px;font-size:12px;line-height:12px;color:#000;transform:scaleX(1.0333);">0 mm</span><div class="b" style="left:651px;top:193px;width:118px;height:25px;background:#fff;border:1px solid #adadad;box-sizing:border-box;"></div><div class="b" style="left:750px;top:194px;width:18px;height:23px;background:#cccccc;border-left:1px solid #adadad;border-right:1px solid #adadad;box-sizing:border-box;"></div><svg class="i" style="left:754.5px;top:203.3px" width="9" height="6"><path d="M0.5 0.5L4.5 4.5L8.5 0.5" fill="none" stroke="#9a9a9a" stroke-width="1.05"/></svg><div class="b" style="left:769px;top:193px;width:100px;height:25px;background:#fff;border:1px solid #adadad;box-sizing:border-box;"></div><div class="b" style="left:850px;top:194px;width:18px;height:23px;background:#cccccc;border-left:1px solid #adadad;border-right:1px solid #adadad;box-sizing:border-box;"></div><svg class="i" style="left:854.5px;top:203.3px" width="9" height="6"><path d="M0.5 0.5L4.5 4.5L8.5 0.5" fill="none" stroke="#9a9a9a" stroke-width="1.05"/></svg><div class="b" style="left:871px;top:194px;width:1px;height:22px;background:#a0a0a0;"></div><div class="b" style="left:873px;top:194px;width:1px;height:22px;background:#a0a0a0;"></div><div class="b" style="left:875px;top:193px;width:100px;height:25px;background:#fff;border:1px solid #adadad;box-sizing:border-box;"></div><div class="b" style="left:956px;top:194px;width:18px;height:23px;background:#e1e1e1;border-left:1px solid #adadad;border-right:1px solid #adadad;box-sizing:border-box;"></div><svg class="i" style="left:960.5px;top:203.3px" width="9" height="6"><path d="M0.5 0.5L4.5 4.5L8.5 0.5" fill="none" stroke="#505050" stroke-width="1.05"/></svg><span id="t41" class="t" style="left:880.40px;top:200.44px;font-size:12px;line-height:12px;color:#000;transform:scaleX(0.9638);">Times New Ro</span><div class="b" style="left:975px;top:193px;width:100px;height:25px;background:#fff;border:1px solid #adadad;box-sizing:border-box;"></div><div class="b" style="left:1056px;top:194px;width:18px;height:23px;background:#e1e1e1;border-left:1px solid #adadad;border-right:1px solid #adadad;box-sizing:border-box;"></div><svg class="i" style="left:1060.5px;top:203.3px" width="9" height="6"><path d="M0.5 0.5L4.5 4.5L8.5 0.5" fill="none" stroke="#505050" stroke-width="1.05"/></svg><span id="t42" class="t" style="left:978.75px;top:200.44px;font-size:12px;line-height:12px;color:#000;transform:scaleX(1.0250);">2 mm</span><svg class="i" style="left:1079px;top:197px" width="16" height="16" viewBox="0 0 16 16"><path d="M1 6L9.5 14.5" fill="none" stroke="#30d030" stroke-width="0.9" /><path d="M7.5 10.5L8.5 6.5L13.5 1.5L16 4L11 9Z" fill="#fff" stroke="#222" stroke-width="1" /><path d="M7.5 10.5L8.5 7L10.8 9.2Z" fill="#444" stroke="#222" stroke-width="0.5" /><path d="M10 5.5L14 1.8M11.5 7L15.3 3.3" fill="none" stroke="#333" stroke-width="0.9" /></svg><div class="b" style="left:1097px;top:194px;width:22px;height:21px;background:#cce8ff;border:1px solid #99d1ff;box-sizing:border-box;"></div><svg class="i" style="left:1100px;top:197px" width="16" height="16" viewBox="0 0 16 16"><path d="M4 3.5C4 1.5 12 1.5 12 3.5C12 5.5 4 5.5 4 3.5Z" fill="#fff" stroke="#111" stroke-width="1.2" /><path d="M4 3.5C4 8.5 6 9.5 8 9.5C10 9.5 12 8.5 12 3.5" fill="none" stroke="#111" stroke-width="1.2" /><path d="M12 4.5C15.5 3.5 15.5 7.5 11.3 7.5" fill="none" stroke="#111" stroke-width="1.1" /><path d="M4.5 8C0 9 0 13 8 13C16 13 16 9 11.5 8" fill="none" stroke="#111" stroke-width="1.2" /><path d="M5.5 10C6.5 11.2 9.5 11.2 10.5 10" fill="none" stroke="#111" stroke-width="1" /></svg><svg class="i" style="left:1115.3px;top:211.8px" width="4" height="4"><path d="M4 0V4H0Z" fill="#222"/></svg><svg class="i" style="left:1134px;top:198px" width="16" height="16" viewBox="0 0 16 16"><path d="M5.5 4L9 1H12.5L14.5 3.5V7L11 10H7.5L5.5 7.5Z" fill="#4fa79a" stroke="#3c3cc0" stroke-width="1" /><rect x="1" y="5.5" width="9.5" height="8" fill="#4fa79a" stroke="#3c3cc0" stroke-width="1" /><path d="M5.5 5.5V7.5L7.5 10H10.5" fill="none" stroke="#3c3cc0" stroke-width="1" /></svg><svg class="i" style="left:1156.5px;top:198px" width="16" height="16" viewBox="0 0 16 16"><circle cx="10.5" cy="4.8" r="3.8" fill="#fff" stroke="#9a9a9a" stroke-width="0.9" /><path d="M1 5.5H6L6.5 8L8.5 9.5H10.5V13.5H1Z" fill="#4fa79a" stroke="#3c3cc0" stroke-width="1" /></svg><svg class="i" style="left:1178.5px;top:198px" width="16" height="16" viewBox="0 0 16 16"><rect x="1" y="5.5" width="9.5" height="8" fill="#fff" stroke="#9a9a9a" stroke-width="0.9" /><circle cx="10.5" cy="4.8" r="3.8" fill="none" stroke="#9a9a9a" stroke-width="0.9" /><path d="M6.8 5.5H10.5V9.5H9L7 8Z" fill="#4fa79a" stroke="#3c3cc0" stroke-width="1" /></svg><div class="b" style="left:0px;top:220px;width:1366px;height:28px;background:#fff;"></div><div class="b" style="left:0px;top:245px;width:1314px;height:1px;background:#a6a6a6;"></div><div class="b" style="left:0px;top:246px;width:1314px;height:1px;background:#dedede;"></div><div class="b" style="left:319px;top:220px;width:1px;height:26px;background:#a6a6a6;"></div><div class="b" style="left:749px;top:220px;width:1px;height:26px;background:#a6a6a6;"></div><div class="b" style="left:1048px;top:220px;width:1px;height:26px;background:#a6a6a6;"></div><div class="b" style="left:1313px;top:220px;width:1px;height:26px;background:#a6a6a6;"></div><div class="b" style="left:1199px;top:219px;width:116px;height:1px;background:#d0d0d0;"></div><svg class="i" style="left:4px;top:222px" width="2" height="24"><rect x="0" y="0" width="2" height="2" fill="#b4b4b4"/><rect x="0" y="4" width="2" height="2" fill="#b4b4b4"/><rect x="0" y="8" width="2" height="2" fill="#b4b4b4"/><rect x="0" y="12" width="2" height="2" fill="#b4b4b4"/><rect x="0" y="16" width="2" height="2" fill="#b4b4b4"/><rect x="0" y="20" width="2" height="2" fill="#b4b4b4"/></svg><svg class="i" style="left:325px;top:222px" width="2" height="24"><rect x="0" y="0" width="2" height="2" fill="#b4b4b4"/><rect x="0" y="4" width="2" height="2" fill="#b4b4b4"/><rect x="0" y="8" width="2" height="2" fill="#b4b4b4"/><rect x="0" y="12" width="2" height="2" fill="#b4b4b4"/><rect x="0" y="16" width="2" height="2" fill="#b4b4b4"/><rect x="0" y="20" width="2" height="2" fill="#b4b4b4"/></svg><svg class="i" style="left:754px;top:222px" width="2" height="24"><rect x="0" y="0" width="2" height="2" fill="#b4b4b4"/><rect x="0" y="4" width="2" height="2" fill="#b4b4b4"/><rect x="0" y="8" width="2" height="2" fill="#b4b4b4"/><rect x="0" y="12" width="2" height="2" fill="#b4b4b4"/><rect x="0" y="16" width="2" height="2" fill="#b4b4b4"/><rect x="0" y="20" width="2" height="2" fill="#b4b4b4"/></svg><svg class="i" style="left:1053px;top:222px" width="2" height="24"><rect x="0" y="0" width="2" height="2" fill="#b4b4b4"/><rect x="0" y="4" width="2" height="2" fill="#b4b4b4"/><rect x="0" y="8" width="2" height="2" fill="#b4b4b4"/><rect x="0" y="12" width="2" height="2" fill="#b4b4b4"/><rect x="0" y="16" width="2" height="2" fill="#b4b4b4"/><rect x="0" y="20" width="2" height="2" fill="#b4b4b4"/></svg><div class="b" style="left:252px;top:222px;width:22px;height:21px;background:#cce8ff;border:1px solid #99d1ff;box-sizing:border-box;"></div><svg class="i" style="left:13px;top:226px" width="16" height="16" viewBox="0 0 16 16"><path d="M0.5 14.5L6.5 9H16L10 14.5Z" fill="none" stroke="#e81818" stroke-width="0.9" stroke-dasharray="2 .8"/><path d="M5.5 0.5V8.5M1.5 4.5H9.5M2.5 1.5L8.5 7.5M8.5 1.5L2.5 7.5" fill="none" stroke="#efe02a" stroke-width="0.8" /></svg><svg class="i" style="left:35px;top:226px" width="16" height="16" viewBox="0 0 16 16"><rect x="0.7" y="1.7" width="12" height="12" fill="none" stroke="#e81818" stroke-width="1.1" stroke-dasharray="2 .8"/><rect x="2.5" y="3.5" width="8.5" height="8.5" fill="#fff" stroke="#444" stroke-width="1" /><circle cx="6.7" cy="7.7" r="2.5" fill="none" stroke="#333" stroke-width="0.8" /><path d="M6.7 4V11.5M3 7.7H10.5" fill="none" stroke="#333" stroke-width="0.8" /></svg><svg class="i" style="left:57px;top:226px" width="16" height="16" viewBox="0 0 16 16"><path d="M0.5 14.5L6.5 9H16L10 14.5Z" fill="none" stroke="#e81818" stroke-width="0.9" stroke-dasharray="2 .8"/><path d="M5.5 0.5V7.5H12" fill="none" stroke="#2b2bd0" stroke-width="1" /><path d="M5.5 7.5L1.5 11.5" fill="none" stroke="#2b2bd0" stroke-width="1" /><path d="M4 2.5H7" fill="none" stroke="#2b2bd0" stroke-width="1" /><path d="M1 9.5V12H3.5" fill="none" stroke="#2b2bd0" stroke-width="1" /></svg><svg class="i" style="left:79px;top:226px" width="16" height="16" viewBox="0 0 16 16"><path d="M0.5 14.5L6.5 9H16L10 14.5Z" fill="none" stroke="#e81818" stroke-width="0.9" stroke-dasharray="2 .8"/><path d="M7.5 1.5L4.5 12.5H11.5Z" fill="#4cc4c8" stroke="#2a9a9a" stroke-width="0.8" /><path d="M7.5 1.5L9 12.5H11.5Z" fill="#2e9ea2" stroke="none" stroke-width="0" /><path d="M7.5 1.5L4.5 12.5L6.5 13.5Z" fill="#8ce4e8" stroke="none" stroke-width="0" /></svg><svg class="i" style="left:101px;top:226px" width="16" height="16" viewBox="0 0 16 16"><path d="M0.5 14.5L6.5 9H16L10 14.5Z" fill="none" stroke="#e81818" stroke-width="0.9" stroke-dasharray="2 .8"/><path d="M5.5 4.5H10Q12.5 4.5 12.5 6.5Q12.5 8.5 10 8.5H7" fill="none" stroke="#111" stroke-width="1.2" /><path d="M3.5 4.5L7.5 2V7Z" fill="#111" stroke="#111" stroke-width="0.3" /></svg><svg class="i" style="left:123px;top:226px" width="16" height="16" viewBox="0 0 16 16"><path d="M0.5 14.5L6.5 9H16L10 14.5Z" fill="none" stroke="#e81818" stroke-width="0.9" stroke-dasharray="2 .8"/><rect x="2.5" y="1.5" width="8.5" height="8" fill="#fff" stroke="#222" stroke-width="1.3" /><rect x="8.5" y="1.5" width="2.5" height="8" fill="#222" stroke="none" stroke-width="1" /><path d="M4 3.5H7.5M4 5.5H7.5M4 7.5H7.5" fill="none" stroke="#222" stroke-width="1" /></svg><svg class="i" style="left:145px;top:226px" width="16" height="16" viewBox="0 0 16 16"><path d="M0.5 6.5L6 1.5H15.5L10 6.5Z" fill="#ececec" stroke="#b0b0b0" stroke-width="1" /><path d="M8 4V13L10 11L11.5 14.5L13 14L11.5 10.5H14Z" fill="#d8d8d8" stroke="#a8a8a8" stroke-width="1" /></svg><svg class="i" style="left:167px;top:226px" width="16" height="16" viewBox="0 0 16 16"><path d="M1.5 10.5L7 4.5H16L10.5 10.5Z" fill="none" stroke="#e81818" stroke-width="1.1" stroke-dasharray="2 .8"/><path d="M2 10.5H10.5M2.5 10L6.5 5.5" fill="none" stroke="#2b2bd0" stroke-width="1" /><rect x="0.5" y="9.5" width="2" height="2" fill="#fff" stroke="#3434ff"/><rect x="9.5" y="9.5" width="2" height="2" fill="#fff" stroke="#3434ff"/><rect x="5.5" y="4.5" width="2" height="2" fill="#fff" stroke="#3434ff"/></svg><svg class="i" style="left:189px;top:226px" width="16" height="16" viewBox="0 0 16 16"><path d="M1 11.5L6.5 5.5H16L10.5 11.5Z" fill="none" stroke="#e81818" stroke-width="1.1" stroke-dasharray="2 .8"/><path d="M6.5 0.5V11" fill="none" stroke="#e81818" stroke-width="1" /><path d="M1 1.5L4.5 4.5M4.5 2V4.5H2M12 1.5L8.5 4.5M8.5 2V4.5H11" fill="none" stroke="#111" stroke-width="1.2" /></svg><svg class="i" style="left:211px;top:226px" width="16" height="16" viewBox="0 0 16 16"><path d="M0.5 5.5L4 1.5H13L9.5 5.5Z" fill="none" stroke="#e81818" stroke-width="1.1" stroke-dasharray="2 .8"/><rect x="7.5" y="4.5" width="2" height="2" fill="#fff" stroke="#3434ff"/><path d="M11.5 7V15.5M7.5 11.5H16" fill="none" stroke="#222" stroke-width="1.1" /><path d="M10 8.5L11.5 6.5L13 8.5M10 14L11.5 16L13 14M9 10L7 11.5L9 13M14.5 10L16.5 11.5L14.5 13" fill="none" stroke="#222" stroke-width="1.1" /></svg><svg class="i" style="left:233px;top:226px" width="16" height="16" viewBox="0 0 16 16"><path d="M0.5 0.5V10.5L6.5 15.5V6.5Z" fill="none" stroke="#e81818" stroke-width="1.1" stroke-dasharray="2 .8"/><path d="M6.5 6.5L4.5 2.5L11 6.5V11.5H6.5" fill="#58dce4" stroke="#3a3ab0" stroke-width="1" /><rect x="2.5" y="6" width="3.5" height="5" fill="#dcdcdc" stroke="#888" stroke-width="0.8" /></svg><svg class="i" style="left:255px;top:226px" width="16" height="16" viewBox="0 0 16 16"><rect x="4.5" y="7" width="2.5" height="5" fill="#d4dce6" stroke="#8a8a8a" stroke-width="0.8" /><path d="M7 3L12.5 8.5V12.5H8.7" fill="none" stroke="#000080" stroke-width="1.5" /><path d="M8.7 8.5H12.5" fill="none" stroke="#000080" stroke-width="1.3" /><path d="M2.3 1.3V10.5L7.8 16H8.7V7.5Z" fill="none" stroke="#e81818" stroke-width="1.1" /></svg><svg class="i" style="left:277px;top:226px" width="16" height="16" viewBox="0 0 16 16"><rect x="0.5" y="1.5" width="13.5" height="12" fill="#e2e2e2" stroke="#b0b0b0" stroke-width="1" stroke-dasharray="1.5 1"/><path d="M7.2 2.5V6M7.2 9.5V12.5M1.5 7.7H5M9.5 7.7H13" fill="none" stroke="#9a9a9a" stroke-width="1.3" /><path d="M5 4.5L7.2 2L9.5 4.5Z M5 11L7.2 13.5L9.5 11Z M3.5 5.5L1 7.7L3.5 10Z M11 5.5L13.5 7.7L11 10Z" fill="#9a9a9a" stroke="#9a9a9a" stroke-width="0.4" /></svg><svg class="i" style="left:299px;top:226px" width="16" height="16" viewBox="0 0 16 16"><path d="M0.5 13.5L5.5 9.5H15.5L10.5 13.5Z" fill="#e0e0e0" stroke="#a8a8a8" stroke-width="1" /><path d="M1 11.5L6 7.5H15.5L10.5 11.5Z" fill="#ececec" stroke="#a8a8a8" stroke-width="1" /><path d="M8.5 0.5L6.5 9.5H10.5Z" fill="#c4c4c4" stroke="#a8a8a8" stroke-width="0.8" /></svg><svg class="i" style="left:334px;top:226px" width="16" height="16" viewBox="0 0 16 16"><path d="M1.5 5.5H9.5V13.5H1.5Z" fill="#fff" stroke="#333" stroke-width="1.1" /><path d="M1.5 5.5L5 2H13L9.5 5.5" fill="#e6e6e6" stroke="#333" stroke-width="1.1" /><path d="M13 2V10L9.5 13.5" fill="#bdbdbd" stroke="#333" stroke-width="1.1" /><path d="M9.5 5.5L13 2V10L9.5 13.5Z" fill="#bdbdbd" stroke="none" stroke-width="0" /><rect x="0.5" y="12.5" width="2" height="2" fill="#fff" stroke="#3434ff"/><rect x="11.5" y="1.5" width="2" height="2" fill="#fff" stroke="#3434ff"/><rect x="11.5" y="9.5" width="2" height="2" fill="#fff" stroke="#3434ff"/></svg><svg class="i" style="left:356px;top:226px" width="16" height="16" viewBox="0 0 16 16"><path d="M1.5 4.5L7.5 1L13.5 4.5L7.5 8Z" fill="#d4d4d4" stroke="#333" stroke-width="1" /><path d="M1.5 4.5V11.5L7.5 15V8Z" fill="#fff" stroke="#333" stroke-width="1" /><path d="M13.5 4.5V11.5L7.5 15V8Z" fill="#b0b0b0" stroke="#333" stroke-width="1" /><path d="M2.5 12.5L7 15" fill="none" stroke="#30d8e0" stroke-width="1.2" /><rect x="0.5" y="10.5" width="2" height="2" fill="#fff" stroke="#3434ff"/><rect x="6.5" y="13.5" width="2" height="2" fill="#fff" stroke="#3434ff"/><rect x="12.5" y="10.5" width="2" height="2" fill="#fff" stroke="#3434ff"/><rect x="12.5" y="3.5" width="2" height="2" fill="#fff" stroke="#3434ff"/></svg><svg class="i" style="left:378px;top:226px" width="16" height="16" viewBox="0 0 16 16"><defs><radialGradient id="sg_2" cx=".4" cy=".7" r=".8"><stop offset="0" stop-color="#fff"/><stop offset=".6" stop-color="#bbb"/><stop offset="1" stop-color="#777"/></radialGradient></defs><circle cx="8" cy="8" r="7.2" fill="url(#sg_2)" stroke="#333" stroke-width="1" /><rect x="6.5" y="6.5" width="2" height="2" fill="#fff" stroke="#3434ff"/><rect x="13.5" y="6.5" width="2" height="2" fill="#fff" stroke="#3434ff"/></svg><svg class="i" style="left:400px;top:226px" width="16" height="16" viewBox="0 0 16 16"><path d="M1.5 5.5C3 0 13.5 0 15.5 9.5C15.5 12.5 13 12.5 11 12C7 11.5 3 9 1.5 5.5Z" fill="#9a9a9a" stroke="#333" stroke-width="1" /><path d="M6 6.5C9 5 13 8 14.5 11.5" fill="none" stroke="#333" stroke-width="1" /><path d="M3 3.5C6 1.5 10 3 11 6.5" fill="none" stroke="#ddd" stroke-width="1.2" /><rect x="0.5" y="4.5" width="2" height="2" fill="#fff" stroke="#3434ff"/><rect x="6.5" y="7.5" width="2" height="2" fill="#fff" stroke="#3434ff"/></svg><svg class="i" style="left:422px;top:226px" width="16" height="16" viewBox="0 0 16 16"><path d="M11.5 1.5L1.5 12.5L5 15.5H11.5Z" fill="#e2e2e2" stroke="#333" stroke-width="1" /><path d="M11.5 1.5L8 15.5H11.5Z" fill="#aaa" stroke="none" stroke-width="0" /><path d="M1.5 12.5L5 15.5H11.5L12.5 12.5" fill="none" stroke="#3a3aff" stroke-width="1" /><path d="M4 11.5H11.5" fill="none" stroke="#28b0b0" stroke-width="1.2" /><rect x="10.5" y="0.5" width="2" height="2" fill="#fff" stroke="#3434ff"/></svg><svg class="i" style="left:444px;top:226px" width="16" height="16" viewBox="0 0 16 16"><path d="M5.5 1.5L1.5 12L7.5 15.5L14.5 12V4.5L8.5 5Z" fill="#fff" stroke="#333" stroke-width="1" /><path d="M8.5 5L7.5 15.5" fill="none" stroke="#333" stroke-width="1" /><path d="M5.5 1.5L10 1L14.5 4.5L8.5 5Z" fill="none" stroke="#3a3aff" stroke-width="1" /><path d="M2 11.5H14" fill="none" stroke="#28b0b0" stroke-width="1" stroke-dasharray="2 1.5"/><path d="M1.5 12L7.5 15.5L14.5 12" fill="none" stroke="#3a3aff" stroke-width="1" /></svg><svg class="i" style="left:466px;top:226px" width="16" height="16" viewBox="0 0 16 16"><path d="M4.5 2.5C6 0 14 2 15.5 5.5L11 14C8 16 2 13.5 1.5 10.5Z" fill="#fff" stroke="#333" stroke-width="1" /><path d="M4.5 2.5C5 5.5 12 8 15.5 5.5" fill="none" stroke="#333" stroke-width="1" /><path d="M11 14L15.5 5.5L13 7L9.5 13Z" fill="#bdbdbd" stroke="none" stroke-width="0" /><path d="M1.5 10.5C2 13.5 8 16 11 14C9 11 3 9 1.5 10.5Z" fill="none" stroke="#3a3aff" stroke-width="1.1" /></svg><svg class="i" style="left:488px;top:226px" width="16" height="16" viewBox="0 0 16 16"><path d="M1.5 3H4L7 4.5H12M1.5 8.5H13M1.5 14H4L7 12.5H12" fill="none" stroke="#222" stroke-width="1.3" /><path d="M4 2C5 1 6 1 7 2M4 15C5 16 6 16 7 15" fill="none" stroke="#222" stroke-width="1" /><rect x="11" y="3.8" width="4.5" height="1.6" fill="#222" stroke="none" stroke-width="1" /><rect x="1" y="7.8" width="3" height="1.6" fill="#222" stroke="none" stroke-width="1" /><rect x="11" y="11.8" width="4.5" height="1.6" fill="#222" stroke="none" stroke-width="1" /><path d="M1 1.5L3 2.5L1 3.5M1 13L3 14L1 15" fill="none" stroke="#222" stroke-width="1" /></svg><svg class="i" style="left:510px;top:226px" width="16" height="16" viewBox="0 0 16 16"><path d="M6 2.5H14.5L10 12.5H1.5Z" fill="#fff" stroke="#333" stroke-width="1" /><path d="M5 4.5L6 2.5M4 6.5H12" fill="none" stroke="#333" stroke-width="1" /><path d="M10 12.5L14.5 2.5V5.5L11 12.5Z" fill="#b0b0b0" stroke="none" stroke-width="0" /><path d="M3.5 9.5H10" fill="none" stroke="#28a8a8" stroke-width="1.3" /><path d="M1.5 9.5L0.5 11.5L2.5 14H9" fill="none" stroke="#3a3aff" stroke-width="1" /><rect x="12.5" y="2.5" width="2" height="2" fill="#fff" stroke="#3434ff"/><rect x="8.5" y="10.5" width="2" height="2" fill="#fff" stroke="#3434ff"/></svg><svg class="i" style="left:532px;top:226px" width="16" height="16" viewBox="0 0 16 16"><path d="M0.5 2H4.5V6.5L3 8.5V14H1M3 14H5" fill="none" stroke="#444" stroke-width="1.1" /><path d="M5 1V16" fill="none" stroke="#e81818" stroke-width="1" stroke-dasharray="1.2 1.2"/><path d="M6 8.5H9.5M8 6.5L10 8.5L8 10.5" fill="none" stroke="#3a3aff" stroke-width="1.1" /><path d="M10.5 2H15V6.5L13 8.5L10.5 6.5Z" fill="#d8d8d8" stroke="#444" stroke-width="1.1" /><path d="M13 8.5V14M10.5 14.5H15.5" fill="none" stroke="#444" stroke-width="1.2" /></svg><svg class="i" style="left:554px;top:226px" width="16" height="16" viewBox="0 0 16 16"><path d="M1.5 4C1.5 0.5 12.5 0.5 12.5 4V12.5C12.5 16 1.5 16 1.5 12.5Z" fill="#fff" stroke="#333" stroke-width="1" /><path d="M1.5 4C1.5 7.5 12.5 7.5 12.5 4" fill="none" stroke="#333" stroke-width="1" /><path d="M8 6.3C11 6 12.5 5 12.5 4V12.5C12.5 13.5 11 14.5 8 15Z" fill="#c4c4c4" stroke="none" stroke-width="0" /><rect x="11.5" y="3.5" width="2" height="2" fill="#fff" stroke="#3434ff"/><rect x="6.5" y="10.5" width="2" height="2" fill="#fff" stroke="#3434ff"/><rect x="11.5" y="10.5" width="2" height="2" fill="#fff" stroke="#3434ff"/></svg><svg class="i" style="left:576px;top:226px" width="16" height="16" viewBox="0 0 16 16"><path d="M1.5 4C1.5 0.5 12.5 0.5 12.5 4V12.5C12.5 16 1.5 16 1.5 12.5Z" fill="#fff" stroke="#333" stroke-width="1" /><path d="M1.5 4C1.5 7.5 12.5 7.5 12.5 4" fill="none" stroke="#333" stroke-width="1" /><path d="M8 6.3C11 6 12.5 5 12.5 4V12.5C12.5 13.5 11 14.5 8 15Z" fill="#c4c4c4" stroke="none" stroke-width="0" /><path d="M4.5 15V9H9.5V15" fill="#eee" stroke="#333" stroke-width="1" /><rect x="11.5" y="3.5" width="2" height="2" fill="#fff" stroke="#3434ff"/><rect x="6.5" y="10.5" width="2" height="2" fill="#fff" stroke="#3434ff"/><rect x="11.5" y="10.5" width="2" height="2" fill="#fff" stroke="#3434ff"/></svg><svg class="i" style="left:598px;top:226px" width="16" height="16" viewBox="0 0 16 16"><path d="M5 1.5H11L14.5 5V11L11 14.5H5L1.5 11V5Z" fill="#d2d2d2" stroke="#444" stroke-width="1.1" /><path d="M5 1.5H11L14.5 5L8 8Z" fill="#f0f0f0" stroke="none" stroke-width="0" /><circle cx="8" cy="8" r="2.2" fill="#fff" stroke="#555" stroke-width="1.2" /></svg><svg class="i" style="left:620px;top:226px" width="16" height="16" viewBox="0 0 16 16"><path d="M2.5 2V14.5M5.5 2V14.5M8.5 2V14.5M11.5 2V14.5M14.5 2V14.5M2.5 2.5H14.5M2.5 5.5H14.5M2.5 8.5H14.5M2.5 11.5H14.5M2.5 14.5H14.5" fill="none" stroke="#333" stroke-width="1.05" /><rect x="1.5" y="0.5" width="2" height="2" fill="#fff" stroke="#3434ff"/><rect x="13.5" y="13.5" width="2" height="2" fill="#fff" stroke="#3434ff"/></svg><svg class="i" style="left:642px;top:226px" width="16" height="16" viewBox="0 0 16 16"><path d="M1.5 3.5V13.5H11.5Z" fill="#fff" stroke="#333" stroke-width="1.1" /><path d="M1.5 3.5L4.5 1.5L14 11L11.5 13.5Z" fill="#c0c0c0" stroke="#333" stroke-width="1" /><rect x="0.5" y="2.5" width="2" height="2" fill="#fff" stroke="#3434ff"/><rect x="0.5" y="12.5" width="2" height="2" fill="#fff" stroke="#3434ff"/><rect x="12.5" y="8.5" width="2" height="2" fill="#fff" stroke="#3434ff"/></svg><svg class="i" style="left:664px;top:226px" width="16" height="16" viewBox="0 0 16 16"><path d="M1.5 4.5H10.5V14.5H1.5ZM1.5 4.5L4.5 1.5H13.5V11.5L10.5 14.5M10.5 4.5L13.5 1.5" fill="none" stroke="#a0a0a0" stroke-width="1" /><path d="M2 11.5L5.5 8L7.5 9.5L10 7L13.5 7L10.5 11.5Z" fill="#4a4ad8" stroke="#2b2bc0" stroke-width="0.6" /><path d="M2 11.5H10" fill="none" stroke="#2b2bc0" stroke-width="1.2" /></svg><svg class="i" style="left:686px;top:226px" width="16" height="16" viewBox="0 0 16 16"><text x="0" y="10.5" font-family="Liberation Sans, sans-serif" font-size="8" fill="#000"  textLength="8" lengthAdjust="spacingAndGlyphs" stroke="#000" stroke-width=".25">3D</text><path d="M2.5 14H8.5L14.5 8L9.5 3" fill="none" stroke="#222" stroke-width="1" /><rect x="1.5" y="12.5" width="2" height="2" fill="#fff" stroke="#3434ff"/><rect x="7.5" y="12.5" width="2" height="2" fill="#fff" stroke="#3434ff"/><rect x="13.5" y="6.5" width="2" height="2" fill="#fff" stroke="#3434ff"/><rect x="8.5" y="2.5" width="2" height="2" fill="#fff" stroke="#3434ff"/></svg><svg class="i" style="left:708px;top:226px" width="16" height="16" viewBox="0 0 16 16"><path d="M1.5 14.5C3 0.5 13 0.5 15 13.5" fill="none" stroke="#222" stroke-width="1" /><text x="5" y="15.5" font-family="Liberation Sans, sans-serif" font-size="8" fill="#000"  textLength="8" lengthAdjust="spacingAndGlyphs" stroke="#000" stroke-width=".25">3D</text><rect x="2.5" y="0.5" width="2" height="2" fill="#fff" stroke="#3434ff"/><rect x="12.5" y="0.5" width="2" height="2" fill="#fff" stroke="#3434ff"/><rect x="0.5" y="12.5" width="2" height="2" fill="#fff" stroke="#3434ff"/><rect x="14.5" y="11.5" width="2" height="2" fill="#fff" stroke="#3434ff"/></svg><svg class="i" style="left:730px;top:226px" width="16" height="16" viewBox="0 0 16 16"><text x="0" y="15" font-family="Liberation Sans, sans-serif" font-size="8" fill="#000"  textLength="8" lengthAdjust="spacingAndGlyphs" stroke="#000" stroke-width=".25">3D</text><path d="M13 1.5C7 -1 5 5.5 9.5 8" fill="none" stroke="#222" stroke-width="1.1" /><path d="M10.5 0.5L13.5 2L10.5 3.5" fill="none" stroke="#222" stroke-width="1" /><rect x="12.5" y="0.5" width="2" height="2" fill="#fff" stroke="#3434ff"/><rect x="4.5" y="4.5" width="2" height="2" fill="#fff" stroke="#3434ff"/><rect x="10.5" y="7.5" width="2" height="2" fill="#fff" stroke="#3434ff"/></svg><svg class="i" style="left:763px;top:226px" width="16" height="16" viewBox="0 0 16 16"><path d="M1.5 1V14.5H15.5" fill="none" stroke="#2b2bc8" stroke-width="1.3" /><path d="M3 13L6.5 4" fill="none" stroke="#2b2bc8" stroke-width="2.2" /><rect x="6.5" y="2" width="2" height="12.5" fill="#f4e820" stroke="none" stroke-width="1" /><rect x="9.5" y="6" width="1.6" height="8.5" fill="#2b2bc8" stroke="none" stroke-width="1" /><rect x="12" y="4" width="1.8" height="10.5" fill="#f02828" stroke="none" stroke-width="1" /><rect x="14.6" y="6.5" width="1" height="8" fill="#2b2bc8" stroke="none" stroke-width="1" /></svg><svg class="i" style="left:785px;top:226px" width="16" height="16" viewBox="0 0 16 16"><rect x="3.5" y="1.5" width="11" height="10.5" fill="none" stroke="#3a3aa8" stroke-width="1.2" /><rect x="7" y="4" width="5" height="5" fill="none" stroke="#3a3aa8" stroke-width="1.2" /><rect x="2.3" y="0.3" width="2.4" height="2.4" fill="#3a3aa8" stroke="none" stroke-width="1" /><rect x="13.3" y="0.3" width="2.4" height="2.4" fill="#3a3aa8" stroke="none" stroke-width="1" /><rect x="13.3" y="10.3" width="2.4" height="2.4" fill="#3a3aa8" stroke="none" stroke-width="1" /><rect x="2.3" y="5" width="2.4" height="2.4" fill="#3a3aa8" stroke="none" stroke-width="1" /><rect x="0.7" y="8.7" width="7" height="6.6" fill="#fff" stroke="#333" stroke-width="1.3" /><path d="M3 13L5.5 10.5M3.5 10.5H5.5V12.5" fill="none" stroke="#222" stroke-width="1" /></svg><svg class="i" style="left:807px;top:226px" width="16" height="16" viewBox="0 0 16 16"><path d="M2 1V13L5 10.5L7 14.5L9 13.5L7 9.5H10.5Z" fill="#3a3aa8" stroke="#3a3aa8" stroke-width="0.6" /><rect x="11" y="9" width="2" height="2" fill="#2b2bff" stroke="none" stroke-width="1" /><rect x="11" y="13" width="2" height="2" fill="#2b2bff" stroke="none" stroke-width="1" /></svg><svg class="i" style="left:829px;top:226px" width="16" height="16" viewBox="0 0 16 16"><path d="M2 4L9 13.5" fill="none" stroke="#2b2bd8" stroke-width="1.3" /><path d="M1 7V3H5M6 14H10V10" fill="none" stroke="#2b2bd8" stroke-width="1.3" /><path d="M9 13.5L12 11" fill="none" stroke="#999" stroke-width="1" stroke-dasharray="1 1"/><text x="8.5" y="10" font-family="Liberation Sans, sans-serif" font-size="12.5" fill="#2b2bff">?</text></svg><svg class="i" style="left:851px;top:226px" width="16" height="16" viewBox="0 0 16 16"><path d="M6.5 0.5C11 0.5 12 5 13.5 8C15 11 12 15 8.5 15C3 15 0 10 1.5 5C2.5 2 4.5 0.5 6.5 0.5Z" fill="#f8f4a0" stroke="#999" stroke-width="1" /><circle cx="10.5" cy="9" r="2.2" fill="#fff" stroke="#aaa" stroke-width="0.8" /><path d="M4.5 2.5L8 2L8.5 4.5Z" fill="#f02020" stroke="none" stroke-width="0" /><path d="M2.5 5L6 5L4 8.5Z" fill="#20a020" stroke="none" stroke-width="0" /><path d="M3.5 10L6 8.5L7 12L5 13Z" fill="#2828e0" stroke="none" stroke-width="0" /><path d="M8 13L11.5 12.5L10 14.5Z" fill="#c020c0" stroke="none" stroke-width="0" /></svg><svg class="i" style="left:873px;top:226px" width="16" height="16" viewBox="0 0 16 16"><rect x="0.8" y="2" width="14.4" height="10.5" fill="#3aa0a0" stroke="#208080" stroke-width="1" rx="1"/><rect x="1.3" y="2.5" width="13.4" height="9.5" fill="none" stroke="#7ff0f0" stroke-width="0.8" stroke-dasharray="1 1"/><rect x="3" y="4.2" width="10" height="2.3" fill="#c8f4f4" stroke="#e8ffff" stroke-width="0.5" /><rect x="3" y="8" width="1.6" height="1.2" fill="#e8ffff" stroke="none" stroke-width="1" /><rect x="3" y="10" width="1.6" height="1.2" fill="#e8ffff" stroke="none" stroke-width="1" /><rect x="5.6" y="8" width="1.6" height="1.2" fill="#e8ffff" stroke="none" stroke-width="1" /><rect x="5.6" y="10" width="1.6" height="1.2" fill="#e8ffff" stroke="none" stroke-width="1" /><rect x="8.2" y="8" width="1.6" height="1.2" fill="#e8ffff" stroke="none" stroke-width="1" /><rect x="8.2" y="10" width="1.6" height="1.2" fill="#e8ffff" stroke="none" stroke-width="1" /><rect x="10.8" y="8" width="1.6" height="1.2" fill="#e8ffff" stroke="none" stroke-width="1" /><rect x="10.8" y="10" width="1.6" height="1.2" fill="#e8ffff" stroke="none" stroke-width="1" /></svg><svg class="i" style="left:895px;top:226px" width="16" height="16" viewBox="0 0 16 16"><rect x="0.8" y="4" width="11.5" height="11" fill="#fff" stroke="#222" stroke-width="1.3" /><path d="M1 8.5H12M6 8.5V15M1 11.5H6" fill="none" stroke="#222" stroke-width="1.3" /><rect x="7.5" y="10.5" width="3.5" height="3" fill="#222" stroke="none" stroke-width="1" /><path d="M2.5 5L7.5 0.5H13L9 5Z" fill="#fff" stroke="#333" stroke-width="1" /><path d="M4.5 4.5L8.5 1M6.5 5L10.5 1.5" fill="none" stroke="#555" stroke-width="0.8" /><path d="M12 1.5C14.5 2 14.5 5 12.5 5.5" fill="none" stroke="#333" stroke-width="1" /><path d="M15.5 0.5V6" fill="none" stroke="#2b2bd0" stroke-width="1.3" /><rect x="12.5" y="7" width="2" height="6" fill="#ccc" stroke="none" stroke-width="1" /></svg><svg class="i" style="left:917px;top:226px" width="16" height="16" viewBox="0 0 16 16"><rect x="-1" y="-4.6" width="2" height="2.2" fill="#d8d8d8" stroke="#777" stroke-width=".6" transform="translate(5 4.5) rotate(0)"/><rect x="-1" y="-4.6" width="2" height="2.2" fill="#d8d8d8" stroke="#777" stroke-width=".6" transform="translate(5 4.5) rotate(45)"/><rect x="-1" y="-4.6" width="2" height="2.2" fill="#d8d8d8" stroke="#777" stroke-width=".6" transform="translate(5 4.5) rotate(90)"/><rect x="-1" y="-4.6" width="2" height="2.2" fill="#d8d8d8" stroke="#777" stroke-width=".6" transform="translate(5 4.5) rotate(135)"/><rect x="-1" y="-4.6" width="2" height="2.2" fill="#d8d8d8" stroke="#777" stroke-width=".6" transform="translate(5 4.5) rotate(180)"/><rect x="-1" y="-4.6" width="2" height="2.2" fill="#d8d8d8" stroke="#777" stroke-width=".6" transform="translate(5 4.5) rotate(225)"/><rect x="-1" y="-4.6" width="2" height="2.2" fill="#d8d8d8" stroke="#777" stroke-width=".6" transform="translate(5 4.5) rotate(270)"/><rect x="-1" y="-4.6" width="2" height="2.2" fill="#d8d8d8" stroke="#777" stroke-width=".6" transform="translate(5 4.5) rotate(315)"/><circle cx="5" cy="4.5" r="3.2" fill="#d8d8d8" stroke="#777" stroke-width="0.8" /><circle cx="5" cy="4.5" r="1.2" fill="#fff" stroke="#777" stroke-width="0.8" /><rect x="-1" y="-4.6" width="2" height="2.2" fill="#f0e030" stroke="#8a8420" stroke-width=".6" transform="translate(10.5 10.5) rotate(0)"/><rect x="-1" y="-4.6" width="2" height="2.2" fill="#f0e030" stroke="#8a8420" stroke-width=".6" transform="translate(10.5 10.5) rotate(45)"/><rect x="-1" y="-4.6" width="2" height="2.2" fill="#f0e030" stroke="#8a8420" stroke-width=".6" transform="translate(10.5 10.5) rotate(90)"/><rect x="-1" y="-4.6" width="2" height="2.2" fill="#f0e030" stroke="#8a8420" stroke-width=".6" transform="translate(10.5 10.5) rotate(135)"/><rect x="-1" y="-4.6" width="2" height="2.2" fill="#f0e030" stroke="#8a8420" stroke-width=".6" transform="translate(10.5 10.5) rotate(180)"/><rect x="-1" y="-4.6" width="2" height="2.2" fill="#f0e030" stroke="#8a8420" stroke-width=".6" transform="translate(10.5 10.5) rotate(225)"/><rect x="-1" y="-4.6" width="2" height="2.2" fill="#f0e030" stroke="#8a8420" stroke-width=".6" transform="translate(10.5 10.5) rotate(270)"/><rect x="-1" y="-4.6" width="2" height="2.2" fill="#f0e030" stroke="#8a8420" stroke-width=".6" transform="translate(10.5 10.5) rotate(315)"/><circle cx="10.5" cy="10.5" r="3.2" fill="#f0e030" stroke="#8a8420" stroke-width="0.8" /><circle cx="10.5" cy="10.5" r="1.2" fill="#fff" stroke="#8a8420" stroke-width="0.8" /></svg><svg class="i" style="left:939px;top:226px" width="16" height="16" viewBox="0 0 16 16"><rect x="0.5" y="0.5" width="15" height="14.5" fill="#c9c9c9" stroke="#8c8c8c" stroke-width="1" rx="1"/><path d="M1.5 14V1.5H14.5" fill="none" stroke="#f4f4f4" stroke-width="1" /><path d="M8 2.5L13 5V11L8 13.5L3 11V5Z" fill="#f2e840" stroke="#666" stroke-width="0.8" /><path d="M8 2.5L13 5L8 7.5L3 5Z" fill="#fff" stroke="#666" stroke-width="0.6" /><path d="M8 7.5V13.5L13 11V5Z" fill="#c8c030" stroke="#666" stroke-width="0.6" /></svg><svg class="i" style="left:961px;top:226px" width="16" height="16" viewBox="0 0 16 16"><rect x="0.5" y="0.5" width="15" height="14.5" fill="#c9c9c9" stroke="#8c8c8c" stroke-width="1" rx="1"/><path d="M1.5 14V1.5H14.5" fill="none" stroke="#f4f4f4" stroke-width="1" /><path d="M8 1.5V14M1.5 7.7H14.5M3 3L13 12.5M13 3L3 12.5" fill="none" stroke="#f6f6f6" stroke-width="1" /><circle cx="8" cy="7.8" r="3.8" fill="#2c58d0" stroke="#1a3a90" stroke-width="0.8" /><path d="M5.5 6C7 4.5 9 5 10 6.5C9 8 7 8.5 6 7.5Z" fill="#38b048" stroke="none" stroke-width="0" /></svg><svg class="i" style="left:983px;top:226px" width="16" height="16" viewBox="0 0 16 16"><rect x="0.5" y="0.5" width="15" height="14.5" fill="#c9c9c9" stroke="#8c8c8c" stroke-width="1" rx="1"/><path d="M1.5 14V1.5H14.5" fill="none" stroke="#f4f4f4" stroke-width="1" /><rect x="1.5" y="1.5" width="13" height="8" fill="#8ee8f0" stroke="none" stroke-width="1" /><rect x="1.5" y="9.5" width="13" height="5" fill="#c8b860" stroke="none" stroke-width="1" /><path d="M8 2L14 2L14 8Z" fill="#fff" stroke="none" stroke-width="0" /><circle cx="12.5" cy="4.5" r="1.6" fill="#f8e838" stroke="none" stroke-width="1" /><path d="M5.5 3V13M3 5V8.5H5.5M8 5V9.5H5.5" fill="none" stroke="#18a028" stroke-width="1.7" /></svg><svg class="i" style="left:1005px;top:226px" width="16" height="16" viewBox="0 0 16 16"><path d="M0.5 13.5V3.5L3 1.5H7.5L9 3.5H14.5V13.5Z" fill="#f4ec70" stroke="#8a8a60" stroke-width="1" /><path d="M1.5 12.5V4.5M1.5 4L3.5 2.5" fill="none" stroke="#fffbd0" stroke-width="1" /><circle cx="7" cy="8" r="3.6" fill="#7fe7f0" stroke="#3a6ac0" stroke-width="1.2" /><circle cx="6" cy="7" r="1.2" fill="#e0fcff" stroke="none" stroke-width="1" /><path d="M10 11L13 14" fill="none" stroke="#3a4ab8" stroke-width="2" /></svg><svg class="i" style="left:1027px;top:226px" width="16" height="16" viewBox="0 0 16 16"><path d="M1.5 8L6 3.5L9.5 7V15H1.5Z" fill="#f02020" stroke="#b01010" stroke-width="0.6" /><path d="M9.5 7L14 6V10.5L9.5 15Z" fill="#a01818" stroke="#701010" stroke-width="0.6" /><path d="M2 1L8 7M7.5 1L3.5 5.5" fill="none" stroke="#222" stroke-width="1.3" /><path d="M8 2.5C10 0.5 12.5 1.5 13 3.5V8.5H10" fill="#fff" stroke="#222" stroke-width="1" /><rect x="8.5" y="4.5" width="3.5" height="1.5" fill="#d8c830" stroke="#555" stroke-width="0.5" /></svg><svg class="i" style="left:1062px;top:226px" width="16" height="16" viewBox="0 0 16 16"><text x="1" y="6.3" font-family="Liberation Sans, sans-serif" font-size="6.2" fill="#000"  textLength="12.5" lengthAdjust="spacingAndGlyphs" stroke="#000" stroke-width=".2">ABC</text><path d="M2 10.5L5.5 14L15 3.5" fill="none" stroke="#2b2ba0" stroke-width="1.7" /></svg><svg class="i" style="left:1083px;top:226px" width="16" height="16" viewBox="0 0 16 16"><rect x="0.7" y="1" width="14.6" height="14" fill="#fff" stroke="#333" stroke-width="1.3" /><text x="2" y="7.5" font-family="Liberation Sans, sans-serif" font-size="6.5" fill="#222"  >A</text><rect x="7.5" y="2.5" width="6" height="5.5" fill="none" stroke="#555" stroke-width="1" /><path d="M8.5 3.5L10.5 6L12.5 3.5" fill="none" stroke="#555" stroke-width="0.8" /><path d="M2.5 10L6 13.5L14.5 3.5" fill="none" stroke="#2b2ba0" stroke-width="1.7" /></svg><div class="b" style="left:1104px;top:224px;width:1px;height:21px;background:#a0a0a0;"></div><svg class="i" style="left:1111px;top:226px" width="16" height="16" viewBox="0 0 16 16"><path d="M4.5 1V12.5H15" fill="none" stroke="#222" stroke-width="1.2" /><path d="M2.5 3.5L4.5 1L6.5 3.5M12.5 10.5L15 12.5L12.5 14.5" fill="none" stroke="#222" stroke-width="1.1" /><path d="M4.5 6H9.5V12.5" fill="none" stroke="#d8c820" stroke-width="1.2" /><rect x="8" y="4.5" width="3" height="3" fill="#fff" stroke="#2b2bff" stroke-width="1" /><text x="0" y="6.5" font-family="Liberation Sans, sans-serif" font-size="6" fill="#2b2bff"  >y</text><text x="8" y="16" font-family="Liberation Sans, sans-serif" font-size="6" fill="#2b2bff"  >x</text></svg><svg class="i" style="left:1133px;top:226px" width="16" height="16" viewBox="0 0 16 16"><path d="M0.5 6.5L6.5 1L15.5 9.5L9 15Z" fill="#fff" stroke="#333" stroke-width="1" /><path d="M6.5 3.5L12.5 9.5" fill="none" stroke="#111" stroke-width="1.2" /><path d="M6 6V3H9M10 10H13V7" fill="none" stroke="#111" stroke-width="1" /><rect x="9" y="0" width="7" height="6" fill="#fff" stroke="none" stroke-width="1" /><text x="10.5" y="7.5" font-family="Liberation Sans, sans-serif" font-size="9" fill="#2b2bff">?</text></svg><svg class="i" style="left:1155px;top:226px" width="16" height="16" viewBox="0 0 16 16"><path d="M0.5 14.5H15.5M1.5 14.5L8.5 0.5" fill="none" stroke="#222" stroke-width="1.2" /><path d="M7.5 4.5C11 5 13 9 12.5 13.5" fill="none" stroke="#222" stroke-width="1" /><path d="M10.5 11.5L12.5 14L14.5 11.5" fill="none" stroke="#222" stroke-width="1" /><path d="M7 4.5L10 3.5" fill="none" stroke="#d8c820" stroke-width="1.4" /><text x="10.5" y="7.5" font-family="Liberation Sans, sans-serif" font-size="9" fill="#2b2bff">?</text></svg><svg class="i" style="left:1177px;top:226px" width="16" height="16" viewBox="0 0 16 16"><rect x="0.7" y="1.2" width="13.6" height="12.6" fill="#cfcfcf" stroke="#333" stroke-width="1.3" /><rect x="1.5" y="2" width="12" height="11" fill="none" stroke="#f0f0a0" stroke-width="1" stroke-dasharray="1 1"/><text x="1.5" y="11" font-family="Liberation Sans, sans-serif" font-size="8" fill="#2b2bff" font-weight="bold" textLength="12" lengthAdjust="spacingAndGlyphs">S=?</text></svg><div class="b" style="left:1198px;top:224px;width:1px;height:21px;background:#a0a0a0;"></div><svg class="i" style="left:1205px;top:226px" width="16" height="16" viewBox="0 0 16 16"><path d="M0.5 6.5L6 1.5L9.5 5C8 7 9 8.5 11 8L15 11.5L9.5 15.5L6 11.5C7 10 6 8.5 4 9Z" fill="#fff" stroke="#333" stroke-width="1" /><path d="M5.5 3.5L12 11" fill="none" stroke="#111" stroke-width="1.1" /><path d="M5 6V3H8M9.5 12H12.5V9" fill="none" stroke="#111" stroke-width="1" /><rect x="10" y="0" width="6" height="6" fill="#fff" stroke="none" stroke-width="1" /><text x="11" y="7.5" font-family="Liberation Sans, sans-serif" font-size="9" fill="#2b2bff">?</text></svg><svg class="i" style="left:1227px;top:226px" width="16" height="16" viewBox="0 0 16 16"><path d="M1.5 8.5H10.5V15.5H1.5Z" fill="#fff" stroke="#222" stroke-width="1.1" /><path d="M1.5 8.5L5 4.5H14.5L10.5 8.5M14.5 4.5V11.5L10.5 15.5" fill="none" stroke="#222" stroke-width="1.1" /><path d="M1.5 8.5L5 4.5H14.5" fill="none" stroke="#2b2bff" stroke-width="1.2" stroke-dasharray="2 1.5"/><text x="1" y="4.5" font-family="Liberation Sans, sans-serif" font-size="6.5" fill="#2b2bff" font-weight="bold" textLength="10" lengthAdjust="spacingAndGlyphs">V=?</text><rect x="0.5" y="14.5" width="2" height="2" fill="#2b2bff" stroke="none" stroke-width="1" /><rect x="9.5" y="14.5" width="2" height="2" fill="#2b2bff" stroke="none" stroke-width="1" /><rect x="13.5" y="6" width="2" height="2" fill="#2b2bff" stroke="none" stroke-width="1" /></svg><svg class="i" style="left:1249px;top:226px" width="16" height="16" viewBox="0 0 16 16"><path d="M3.5 5.5H15.5L12.5 15.5H0.5Z" fill="#8a8a8a" stroke="#333" stroke-width="1" /><path d="M2.5 9H14.5M1.5 12.5H13.5M7 5.5L4.5 15.5M11 5.5L8.5 15.5" fill="none" stroke="#333" stroke-width="1" /><text x="1" y="4.5" font-family="Liberation Sans, sans-serif" font-size="6.5" fill="#2b2bff" font-weight="bold" textLength="10" lengthAdjust="spacingAndGlyphs">S=?</text></svg><svg class="i" style="left:1271px;top:226px" width="16" height="16" viewBox="0 0 16 16"><rect x="0.7" y="1" width="6.5" height="8.5" fill="#fff" stroke="#222" stroke-width="1.3" /><rect x="2.3" y="2.8" width="3.4" height="1.8" fill="none" stroke="#222" stroke-width="1" /><rect x="2.3" y="6" width="3.4" height="1.8" fill="none" stroke="#222" stroke-width="1" /><path d="M8.5 1.5H13V5" fill="none" stroke="#2b2bff" stroke-width="1.3" /><path d="M11 4L13 6.5L15 4Z" fill="#2b2bff" stroke="#2b2bff" stroke-width="0.4" /><rect x="9.7" y="7.5" width="5.8" height="8" fill="#fff" stroke="#222" stroke-width="1.3" /><path d="M11 14L14.5 9" fill="none" stroke="#222" stroke-width="1" /></svg><svg class="i" style="left:1294px;top:226px" width="16" height="16" viewBox="0 0 16 16"><path d="M2 6.5L7 1.5H12L8.5 5.5Z" fill="#fff" stroke="#333" stroke-width="1" /><path d="M3.5 7L8 2.5M5.5 7.5L10 3" fill="none" stroke="#555" stroke-width="0.8" /><path d="M11 1.5H14.5V6H11" fill="none" stroke="#333" stroke-width="1" /><path d="M15 0.5V7" fill="none" stroke="#2b2bd0" stroke-width="1.3" /><path d="M3.5 10L7.5 6.5L11 9L7 14.5Z" fill="#f8f8f8" stroke="#333" stroke-width="1" /><path d="M5 9L9 12.5" fill="none" stroke="#e8e030" stroke-width="2" /><path d="M2 12L4.5 15.5L8 15.5" fill="none" stroke="#2b2bd0" stroke-width="1.6" /></svg><div class="b" style="left:0px;top:137px;width:1px;height:109px;background:#eef1fa;"></div></div></div>
<div class="b" style="left:0px;top:247px;width:1318px;height:17px;background:#f0f0f0;"></div><div class="b" style="left:28px;top:248px;width:13px;height:13px;background:#c3c3b4;"></div><svg class="i" style="left:28px;top:248px" width="13" height="13" viewBox="0 0 13 13"><path d="M3.5 1.5V9.5H11" fill="none" stroke="#000" stroke-width="1" /><path d="M1.5 3.5L3.5 1.5L5.5 3.5M9 7.5L11 9.5L9 11.5" fill="none" stroke="#000" stroke-width="1" /></svg><svg class="i" style="left:0;top:248px" width="1318" height="16" shape-rendering="crispEdges"><rect x="41" y="11" width="1" height="3" fill="#000"/><rect x="49" y="9" width="1" height="5" fill="#000"/><rect x="57" y="11" width="1" height="3" fill="#000"/><rect x="65" y="11" width="1" height="3" fill="#000"/><rect x="73" y="11" width="1" height="3" fill="#000"/><rect x="81" y="11" width="1" height="3" fill="#000"/><rect x="89" y="1" width="1" height="13" fill="#000"/><rect x="97" y="11" width="1" height="3" fill="#000"/><rect x="105" y="11" width="1" height="3" fill="#000"/><rect x="113" y="11" width="1" height="3" fill="#000"/><rect x="121" y="11" width="1" height="3" fill="#000"/><rect x="129" y="9" width="1" height="5" fill="#000"/><rect x="137" y="11" width="1" height="3" fill="#000"/><rect x="145" y="11" width="1" height="3" fill="#000"/><rect x="153" y="11" width="1" height="3" fill="#000"/><rect x="161" y="11" width="1" height="3" fill="#000"/><rect x="169" y="1" width="1" height="13" fill="#000"/><rect x="177" y="11" width="1" height="3" fill="#000"/><rect x="185" y="11" width="1" height="3" fill="#000"/><rect x="193" y="11" width="1" height="3" fill="#000"/><rect x="201" y="11" width="1" height="3" fill="#000"/><rect x="209" y="9" width="1" height="5" fill="#000"/><rect x="217" y="11" width="1" height="3" fill="#000"/><rect x="225" y="11" width="1" height="3" fill="#000"/><rect x="233" y="11" width="1" height="3" fill="#000"/><rect x="241" y="11" width="1" height="3" fill="#000"/><rect x="250" y="1" width="1" height="13" fill="#000"/><rect x="258" y="11" width="1" height="3" fill="#000"/><rect x="266" y="11" width="1" height="3" fill="#000"/><rect x="274" y="11" width="1" height="3" fill="#000"/><rect x="282" y="11" width="1" height="3" fill="#000"/><rect x="290" y="9" width="1" height="5" fill="#000"/><rect x="298" y="11" width="1" height="3" fill="#000"/><rect x="306" y="11" width="1" height="3" fill="#000"/><rect x="314" y="11" width="1" height="3" fill="#000"/><rect x="322" y="11" width="1" height="3" fill="#000"/><rect x="330" y="1" width="1" height="13" fill="#000"/><rect x="338" y="11" width="1" height="3" fill="#000"/><rect x="346" y="11" width="1" height="3" fill="#000"/><rect x="354" y="11" width="1" height="3" fill="#000"/><rect x="362" y="11" width="1" height="3" fill="#000"/><rect x="370" y="9" width="1" height="5" fill="#000"/><rect x="378" y="11" width="1" height="3" fill="#000"/><rect x="386" y="11" width="1" height="3" fill="#000"/><rect x="394" y="11" width="1" height="3" fill="#000"/><rect x="402" y="11" width="1" height="3" fill="#000"/><rect x="410" y="1" width="1" height="13" fill="#000"/><rect x="418" y="11" width="1" height="3" fill="#000"/><rect x="426" y="11" width="1" height="3" fill="#000"/><rect x="434" y="11" width="1" height="3" fill="#000"/><rect x="442" y="11" width="1" height="3" fill="#000"/><rect x="450" y="9" width="1" height="5" fill="#000"/><rect x="458" y="11" width="1" height="3" fill="#000"/><rect x="466" y="11" width="1" height="3" fill="#000"/><rect x="474" y="11" width="1" height="3" fill="#000"/><rect x="482" y="11" width="1" height="3" fill="#000"/><rect x="490" y="1" width="1" height="13" fill="#000"/><rect x="498" y="11" width="1" height="3" fill="#000"/><rect x="506" y="11" width="1" height="3" fill="#000"/><rect x="514" y="11" width="1" height="3" fill="#000"/><rect x="523" y="11" width="1" height="3" fill="#000"/><rect x="531" y="9" width="1" height="5" fill="#000"/><rect x="539" y="11" width="1" height="3" fill="#000"/><rect x="547" y="11" width="1" height="3" fill="#000"/><rect x="555" y="11" width="1" height="3" fill="#000"/><rect x="563" y="11" width="1" height="3" fill="#000"/><rect x="571" y="1" width="1" height="13" fill="#000"/><rect x="579" y="11" width="1" height="3" fill="#000"/><rect x="587" y="11" width="1" height="3" fill="#000"/><rect x="595" y="11" width="1" height="3" fill="#000"/><rect x="603" y="11" width="1" height="3" fill="#000"/><rect x="611" y="9" width="1" height="5" fill="#000"/><rect x="619" y="11" width="1" height="3" fill="#000"/><rect x="627" y="11" width="1" height="3" fill="#000"/><rect x="635" y="11" width="1" height="3" fill="#000"/><rect x="643" y="11" width="1" height="3" fill="#000"/><rect x="651" y="1" width="1" height="13" fill="#000"/><rect x="659" y="11" width="1" height="3" fill="#000"/><rect x="667" y="11" width="1" height="3" fill="#000"/><rect x="675" y="11" width="1" height="3" fill="#000"/><rect x="683" y="11" width="1" height="3" fill="#000"/><rect x="691" y="9" width="1" height="5" fill="#000"/><rect x="699" y="11" width="1" height="3" fill="#000"/><rect x="707" y="11" width="1" height="3" fill="#000"/><rect x="715" y="11" width="1" height="3" fill="#000"/><rect x="723" y="11" width="1" height="3" fill="#000"/><rect x="731" y="1" width="1" height="13" fill="#000"/><rect x="739" y="11" width="1" height="3" fill="#000"/><rect x="747" y="11" width="1" height="3" fill="#000"/><rect x="755" y="11" width="1" height="3" fill="#000"/><rect x="763" y="11" width="1" height="3" fill="#000"/><rect x="771" y="9" width="1" height="5" fill="#000"/><rect x="779" y="11" width="1" height="3" fill="#000"/><rect x="788" y="11" width="1" height="3" fill="#000"/><rect x="796" y="11" width="1" height="3" fill="#000"/><rect x="804" y="11" width="1" height="3" fill="#000"/><rect x="812" y="1" width="1" height="13" fill="#000"/><rect x="820" y="11" width="1" height="3" fill="#000"/><rect x="828" y="11" width="1" height="3" fill="#000"/><rect x="836" y="11" width="1" height="3" fill="#000"/><rect x="844" y="11" width="1" height="3" fill="#000"/><rect x="852" y="9" width="1" height="5" fill="#000"/><rect x="860" y="11" width="1" height="3" fill="#000"/><rect x="868" y="11" width="1" height="3" fill="#000"/><rect x="876" y="11" width="1" height="3" fill="#000"/><rect x="884" y="11" width="1" height="3" fill="#000"/><rect x="892" y="1" width="1" height="13" fill="#000"/><rect x="900" y="11" width="1" height="3" fill="#000"/><rect x="908" y="11" width="1" height="3" fill="#000"/><rect x="916" y="11" width="1" height="3" fill="#000"/><rect x="924" y="11" width="1" height="3" fill="#000"/><rect x="932" y="9" width="1" height="5" fill="#000"/><rect x="940" y="11" width="1" height="3" fill="#000"/><rect x="948" y="11" width="1" height="3" fill="#000"/><rect x="956" y="11" width="1" height="3" fill="#000"/><rect x="964" y="11" width="1" height="3" fill="#000"/><rect x="972" y="1" width="1" height="13" fill="#000"/><rect x="980" y="11" width="1" height="3" fill="#000"/><rect x="988" y="11" width="1" height="3" fill="#000"/><rect x="996" y="11" width="1" height="3" fill="#000"/><rect x="1004" y="11" width="1" height="3" fill="#000"/><rect x="1012" y="9" width="1" height="5" fill="#000"/><rect x="1020" y="11" width="1" height="3" fill="#000"/><rect x="1028" y="11" width="1" height="3" fill="#000"/><rect x="1036" y="11" width="1" height="3" fill="#000"/><rect x="1044" y="11" width="1" height="3" fill="#000"/><rect x="1053" y="1" width="1" height="13" fill="#000"/><rect x="1061" y="11" width="1" height="3" fill="#000"/><rect x="1069" y="11" width="1" height="3" fill="#000"/><rect x="1077" y="11" width="1" height="3" fill="#000"/><rect x="1085" y="11" width="1" height="3" fill="#000"/><rect x="1093" y="9" width="1" height="5" fill="#000"/><rect x="1101" y="11" width="1" height="3" fill="#000"/><rect x="1109" y="11" width="1" height="3" fill="#000"/><rect x="1117" y="11" width="1" height="3" fill="#000"/><rect x="1125" y="11" width="1" height="3" fill="#000"/><rect x="1133" y="1" width="1" height="13" fill="#000"/><rect x="1141" y="11" width="1" height="3" fill="#000"/><rect x="1149" y="11" width="1" height="3" fill="#000"/><rect x="1157" y="11" width="1" height="3" fill="#000"/><rect x="1165" y="11" width="1" height="3" fill="#000"/><rect x="1173" y="9" width="1" height="5" fill="#000"/><rect x="1181" y="11" width="1" height="3" fill="#000"/><rect x="1189" y="11" width="1" height="3" fill="#000"/><rect x="1197" y="11" width="1" height="3" fill="#000"/><rect x="1205" y="11" width="1" height="3" fill="#000"/><rect x="1213" y="1" width="1" height="13" fill="#000"/><rect x="1221" y="11" width="1" height="3" fill="#000"/><rect x="1229" y="11" width="1" height="3" fill="#000"/><rect x="1237" y="11" width="1" height="3" fill="#000"/><rect x="1245" y="11" width="1" height="3" fill="#000"/><rect x="1253" y="9" width="1" height="5" fill="#000"/><rect x="1261" y="11" width="1" height="3" fill="#000"/><rect x="1269" y="11" width="1" height="3" fill="#000"/><rect x="1277" y="11" width="1" height="3" fill="#000"/><rect x="1285" y="11" width="1" height="3" fill="#000"/><rect x="1293" y="1" width="1" height="13" fill="#000"/><rect x="1301" y="11" width="1" height="3" fill="#000"/><rect x="1309" y="11" width="1" height="3" fill="#000"/><rect x="1113" y="0" width="1" height="14" fill="#f0f"/></svg><span id="t43" class="t" style="left:91.40px;top:249.37px;font-size:9.6px;line-height:9.6px;color:#000;transform:scaleX(0.9753);">500 mm</span><span id="t44" class="t" style="left:171.40px;top:249.37px;font-size:9.6px;line-height:9.6px;color:#000;transform:scaleX(0.9753);">600 mm</span><span id="t45" class="t" style="left:252.40px;top:249.37px;font-size:9.6px;line-height:9.6px;color:#000;transform:scaleX(0.9753);">700 mm</span><span id="t46" class="t" style="left:332.40px;top:249.37px;font-size:9.6px;line-height:9.6px;color:#000;transform:scaleX(0.9753);">800 mm</span><span id="t47" class="t" style="left:412.40px;top:249.37px;font-size:9.6px;line-height:9.6px;color:#000;transform:scaleX(0.9753);">900 mm</span><span id="t48" class="t" style="left:492.40px;top:249.37px;font-size:9.6px;line-height:9.6px;color:#000;transform:scaleX(0.9650);">1000 mm</span><span id="t49" class="t" style="left:573.40px;top:249.37px;font-size:9.6px;line-height:9.6px;color:#000;transform:scaleX(0.9827);">1100 mm</span><span id="t50" class="t" style="left:653.40px;top:249.37px;font-size:9.6px;line-height:9.6px;color:#000;transform:scaleX(0.9650);">1200 mm</span><span id="t51" class="t" style="left:733.40px;top:249.37px;font-size:9.6px;line-height:9.6px;color:#000;transform:scaleX(0.9650);">1300 mm</span><span id="t52" class="t" style="left:814.40px;top:249.37px;font-size:9.6px;line-height:9.6px;color:#000;transform:scaleX(0.9650);">1400 mm</span><span id="t53" class="t" style="left:894.40px;top:249.37px;font-size:9.6px;line-height:9.6px;color:#000;transform:scaleX(0.9650);">1500 mm</span><span id="t54" class="t" style="left:974.40px;top:249.37px;font-size:9.6px;line-height:9.6px;color:#000;transform:scaleX(0.9650);">1600 mm</span><span id="t55" class="t" style="left:1055.40px;top:249.37px;font-size:9.6px;line-height:9.6px;color:#000;transform:scaleX(0.9650);">1700 mm</span><span id="t56" class="t" style="left:1135.40px;top:249.37px;font-size:9.6px;line-height:9.6px;color:#000;transform:scaleX(0.9650);">1800 mm</span><span id="t57" class="t" style="left:1215.40px;top:249.37px;font-size:9.6px;line-height:9.6px;color:#000;transform:scaleX(0.9650);">1900 mm</span><span id="t58" class="t" style="left:1295.40px;top:249.37px;font-size:9.6px;line-height:9.6px;color:#000;transform:scaleX(0.9370);">2000</span><div class="b" style="left:41px;top:262px;width:1258px;height:1px;background:#a0a0a0;"></div><div class="b" style="left:42px;top:263px;width:1257px;height:1px;background:#696969;"></div>
<div class="b" style="left:0px;top:247px;width:27px;height:521px;background:#f0f0f0;"></div><div class="b" style="left:0px;top:248px;width:1px;height:458px;background:#e3e8f3;"></div><div class="b" style="left:25px;top:249px;width:1px;height:457px;background:#c4c4c4;"></div><div class="b" style="left:26px;top:247px;width:1px;height:521px;background:#fdfdfd;"></div><div class="b" style="left:27px;top:248px;width:1px;height:520px;background:#fbfbfb;"></div><div class="b" style="left:0px;top:705px;width:27px;height:1px;background:#c9c9c9;"></div><svg class="i" style="left:1px;top:250px" width="24" height="2"><rect x="0" y="0" width="2" height="2" fill="#b4b4b4"/><rect x="4" y="0" width="2" height="2" fill="#b4b4b4"/><rect x="8" y="0" width="2" height="2" fill="#b4b4b4"/><rect x="12" y="0" width="2" height="2" fill="#b4b4b4"/><rect x="16" y="0" width="2" height="2" fill="#b4b4b4"/><rect x="20" y="0" width="2" height="2" fill="#b4b4b4"/></svg><div class="b" style="left:2px;top:532px;width:22px;height:21px;background:#cce8ff;border:1px solid #99d1ff;box-sizing:border-box;"></div><svg class="i" style="left:5px;top:260px" width="16" height="16" viewBox="0 0 16 16"><path d="M5.5 0.8V11.2L8 9L10 13.6L11.6 12.9L9.6 8.5H13Z" fill="#fff" stroke="#333" stroke-width="1.1" /></svg><svg class="i" style="left:5px;top:282px" width="16" height="16" viewBox="0 0 16 16"><path d="M8.5 0.5C4 3.5 1.5 8 1 12.5" fill="none" stroke="#333" stroke-width="1.1" /><rect x="4.3" y="3.5" width="3.2" height="3.2" fill="#2b2bff" stroke="none" stroke-width="1" /><path d="M7.5 6.5V13.5L9.2 12L10.5 15L11.8 14.4L10.5 11.5H12.5Z" fill="#fff" stroke="#333" stroke-width="1" /></svg><svg class="i" style="left:5px;top:304px" width="16" height="16" viewBox="0 0 16 16"><path d="M0.5 15L15 0.5" fill="none" stroke="#aaa" stroke-width="1" stroke-dasharray="3 1.5"/><rect x="3.5" y="9.5" width="2" height="2" fill="#fff" stroke="#3434ff"/><rect x="9.5" y="3.5" width="2" height="2" fill="#fff" stroke="#3434ff"/></svg><svg class="i" style="left:5px;top:326px" width="16" height="16" viewBox="0 0 16 16"><path d="M2.5 12.5L12 3" fill="none" stroke="#222" stroke-width="1.1" /><rect x="1.5" y="11.5" width="2" height="2" fill="#fff" stroke="#3434ff"/><rect x="11.5" y="2.5" width="2" height="2" fill="#fff" stroke="#3434ff"/></svg><svg class="i" style="left:5px;top:348px" width="16" height="16" viewBox="0 0 16 16"><circle cx="7.5" cy="8" r="7" fill="none" stroke="#333" stroke-width="1.1" /><rect x="6.5" y="6.5" width="2" height="2" fill="#fff" stroke="#3434ff"/><rect x="13.5" y="6.5" width="2" height="2" fill="#fff" stroke="#3434ff"/></svg><svg class="i" style="left:5px;top:370px" width="16" height="16" viewBox="0 0 16 16"><path d="M1.5 13C3 1.5 12 1.5 14.5 12" fill="none" stroke="#333" stroke-width="1.1" /><rect x="2.5" y="0.5" width="2" height="2" fill="#fff" stroke="#3434ff"/><rect x="12.5" y="0.5" width="2" height="2" fill="#fff" stroke="#3434ff"/><rect x="0.5" y="12.5" width="2" height="2" fill="#fff" stroke="#3434ff"/><rect x="13.5" y="11.5" width="2" height="2" fill="#fff" stroke="#3434ff"/></svg><svg class="i" style="left:5px;top:392px" width="16" height="16" viewBox="0 0 16 16"><circle cx="9.3" cy="7.7" r="1.5" fill="#333" stroke="none" stroke-width="1" /></svg><svg class="i" style="left:5px;top:414px" width="16" height="16" viewBox="0 0 16 16"><text x="0.5" y="14" font-family="Liberation Sans, sans-serif" font-size="19.5" fill="#444" textLength="15.5" lengthAdjust="spacingAndGlyphs">A</text></svg><svg class="i" style="left:5px;top:436px" width="16" height="16" viewBox="0 0 16 16"><rect x="5.5" y="5" width="10.5" height="10.5" fill="#3838f0" stroke="none" stroke-width="1" /><rect x="1.5" y="0.5" width="6.5" height="7.5" fill="#fff" stroke="#333" stroke-width="1.1" /><rect x="3.5" y="1.5" width="4" height="4" fill="none" stroke="#f03030" stroke-width="1.2" /><path d="M8 0.5C15 0.5 16 6 10.5 12" fill="none" stroke="#f03030" stroke-width="1.1" /></svg><div class="b" style="left:4px;top:456px;width:18px;height:1px;background:#a0a0a0;"></div><svg class="i" style="left:5px;top:465px" width="16" height="16" viewBox="0 0 16 16"><text x="0" y="10.5" font-family="Liberation Sans, sans-serif" font-size="8" fill="#000"  textLength="8" lengthAdjust="spacingAndGlyphs" stroke="#000" stroke-width=".25">3D</text><path d="M2 14H8.5L14.5 8.5L9.5 3.5" fill="none" stroke="#222" stroke-width="1" /><rect x="0.5" y="12.5" width="2" height="2" fill="#fff" stroke="#3434ff"/><rect x="7.5" y="12.5" width="2" height="2" fill="#fff" stroke="#3434ff"/><rect x="13.5" y="7.5" width="2" height="2" fill="#fff" stroke="#3434ff"/><rect x="8.5" y="2.5" width="2" height="2" fill="#fff" stroke="#3434ff"/></svg><svg class="i" style="left:5px;top:486px" width="16" height="16" viewBox="0 0 16 16"><defs><radialGradient id="sg2_3" cx=".35" cy=".75" r=".8"><stop offset="0" stop-color="#fff"/><stop offset=".6" stop-color="#bbb"/><stop offset="1" stop-color="#777"/></radialGradient></defs><circle cx="7.5" cy="7.5" r="7" fill="url(#sg2_3)" stroke="#444" stroke-width="1" /><rect x="6.5" y="6.5" width="2" height="2" fill="#fff" stroke="#3434ff"/><rect x="13.5" y="6.5" width="2" height="2" fill="#fff" stroke="#3434ff"/></svg><svg class="i" style="left:5px;top:508px" width="16" height="16" viewBox="0 0 16 16"><path d="M4 3C6 0 14 2 15 5.5L11 13.5C8 16 2 13.5 1 10.5Z" fill="#fff" stroke="#444" stroke-width="1" /><path d="M4 3C5 6 12 8.5 15 5.5" fill="none" stroke="#444" stroke-width="1" /><path d="M11 13.5L15 5.5L13 7L9.5 13Z" fill="#c8c8c8" stroke="none" stroke-width="0" /><path d="M1 10.5C2 13.5 8 16 11 13.5C9 11 3 8.5 1 10.5Z" fill="none" stroke="#3a3aff" stroke-width="1.2" /></svg><div class="b" style="left:4px;top:528px;width:18px;height:1px;background:#a0a0a0;"></div><svg class="i" style="left:5px;top:536px" width="16" height="16" viewBox="0 0 16 16"><path d="M1 0.5H15M1 14.5H15" fill="none" stroke="#444" stroke-width="1" /><path d="M8 2V13M2 7.5H14" fill="none" stroke="#111" stroke-width="1.2" /><path d="M6 4L8 1.8L10 4M6 11L8 13.2L10 11M4 5.5L1.8 7.5L4 9.5M12 5.5L14.2 7.5L12 9.5" fill="none" stroke="#111" stroke-width="1.2" /></svg><div class="b" style="left:4px;top:556px;width:18px;height:1px;background:#a0a0a0;"></div><svg class="i" style="left:5px;top:564px" width="16" height="16" viewBox="0 0 16 16"><path d="M3.5 5.5L11 1V10L3.5 14.5Z" fill="#b8b8b8" stroke="#444" stroke-width="1.1" /><path d="M3.5 5.5L2 4.5V13L3.5 14.5" fill="#e8e8e8" stroke="#444" stroke-width="1" /><rect x="12.5" y="8.5" width="2" height="2" fill="#fff" stroke="#3434ff"/><rect x="4.5" y="12.5" width="2" height="2" fill="#fff" stroke="#3434ff"/></svg><svg class="i" style="left:5px;top:586px" width="16" height="16" viewBox="0 0 16 16"><path d="M4 1.5C5 0 7 0 8 1.5C9 0 11 0 12 1.5C14 1.5 15 3.5 14 5C15.5 6.5 15.5 8.5 14 9.5C15 11.5 14 13 12 12.5C11 14.5 9 14.5 8 13C7 14.5 5 14.5 4 12.5C2 13 1 11.5 2 9.5C0.5 8.5 0.5 6.5 2 5C1 3.5 2 1.5 4 1.5Z" fill="#f83838" stroke="#e83030" stroke-width="0.5" /></svg><div class="b" style="left:4px;top:606px;width:18px;height:1px;background:#a0a0a0;"></div><svg class="i" style="left:5px;top:613px" width="16" height="16" viewBox="0 0 16 16"><rect x="3.5" y="1.5" width="11" height="10.5" fill="none" stroke="#3a3aa8" stroke-width="1.2" /><rect x="7" y="4" width="5" height="5" fill="none" stroke="#3a3aa8" stroke-width="1.2" /><rect x="2.3" y="0.3" width="2.4" height="2.4" fill="#3a3aa8" stroke="none" stroke-width="1" /><rect x="13.3" y="0.3" width="2.4" height="2.4" fill="#3a3aa8" stroke="none" stroke-width="1" /><rect x="13.3" y="10.3" width="2.4" height="2.4" fill="#3a3aa8" stroke="none" stroke-width="1" /><rect x="2.3" y="5" width="2.4" height="2.4" fill="#3a3aa8" stroke="none" stroke-width="1" /><rect x="0.7" y="8.7" width="7" height="6.6" fill="#fff" stroke="#333" stroke-width="1.3" /><path d="M3 13L5.5 10.5M3.5 10.5H5.5V12.5" fill="none" stroke="#222" stroke-width="1" /></svg><svg class="i" style="left:5px;top:636px" width="16" height="16" viewBox="0 0 16 16"><rect x="0.5" y="0.5" width="8" height="7.5" fill="#f2f2f2" stroke="#bcbcbc" stroke-width="1" /><path d="M2.5 2.5L6 6M6 3.5V6H3.5" fill="none" stroke="#bcbcbc" stroke-width="1" /><rect x="7.5" y="7.5" width="5" height="5" fill="none" stroke="#a8a8a8" stroke-width="1.1" /><rect x="9.5" y="9.5" width="5" height="5" fill="none" stroke="#a8a8a8" stroke-width="1.1" /><rect x="6" y="13" width="1.5" height="1.5" fill="#a8a8a8" stroke="none" stroke-width="1" /><rect x="14" y="6" width="1.5" height="1.5" fill="#a8a8a8" stroke="none" stroke-width="1" /><rect x="14.5" y="14" width="1.5" height="1.5" fill="#a8a8a8" stroke="none" stroke-width="1" /></svg><svg class="i" style="left:5px;top:658px" width="16" height="16" viewBox="0 0 16 16"><rect x="0.8" y="3.5" width="5.5" height="6.5" fill="#fff" stroke="#333" stroke-width="1.2" rx="1"/><rect x="1.5" y="7" width="4.2" height="2.5" fill="#f03030" stroke="none" stroke-width="1" /><rect x="1.5" y="4.3" width="4.2" height="2.2" fill="#9ae8f0" stroke="none" stroke-width="1" /><rect x="9.2" y="3.5" width="5.5" height="6.5" fill="#fff" stroke="#333" stroke-width="1.2" rx="1"/><path d="M10 9.5L14 4.5V9.5Z" fill="#30c040" stroke="none" stroke-width="0" /><path d="M10 4.3H14L10 9Z" fill="#9ae8f0" stroke="none" stroke-width="0" /><path d="M0.5 11.5H6.5M9 11.5H15" fill="none" stroke="#333" stroke-width="1.1" /></svg><div class="b" style="left:4px;top:678px;width:18px;height:1px;background:#a0a0a0;"></div><svg class="i" style="left:5px;top:686px" width="16" height="16" viewBox="0 0 16 16"><path d="M4.5 0.5V8.5M0.5 4.5H8.5M1.5 1.5L7.5 7.5M7.5 1.5L1.5 7.5" fill="none" stroke="#efe02a" stroke-width="0.8" /><rect x="4.5" y="4.5" width="10" height="10" fill="#fff" stroke="#333" stroke-width="1.2" /><circle cx="9.5" cy="9.5" r="2.8" fill="none" stroke="#333" stroke-width="1" /><path d="M9.5 5.5V13.5M5.5 9.5H13.5" fill="none" stroke="#333" stroke-width="1" /></svg><svg class="i" style="left:20px;top:274px" width="4" height="4"><path d="M4 0V4H0Z" fill="#222"/></svg><svg class="i" style="left:20px;top:318px" width="4" height="4"><path d="M4 0V4H0Z" fill="#222"/></svg><svg class="i" style="left:20px;top:340px" width="4" height="4"><path d="M4 0V4H0Z" fill="#222"/></svg><svg class="i" style="left:20px;top:362px" width="4" height="4"><path d="M4 0V4H0Z" fill="#222"/></svg><svg class="i" style="left:20px;top:384px" width="4" height="4"><path d="M4 0V4H0Z" fill="#222"/></svg><svg class="i" style="left:20px;top:406px" width="4" height="4"><path d="M4 0V4H0Z" fill="#222"/></svg><svg class="i" style="left:20px;top:428px" width="4" height="4"><path d="M4 0V4H0Z" fill="#222"/></svg><svg class="i" style="left:20px;top:450px" width="4" height="4"><path d="M4 0V4H0Z" fill="#222"/></svg><svg class="i" style="left:20px;top:479px" width="4" height="4"><path d="M4 0V4H0Z" fill="#222"/></svg><svg class="i" style="left:20px;top:501px" width="4" height="4"><path d="M4 0V4H0Z" fill="#222"/></svg><svg class="i" style="left:20px;top:523px" width="4" height="4"><path d="M4 0V4H0Z" fill="#222"/></svg><svg class="i" style="left:20px;top:549px" width="4" height="4"><path d="M4 0V4H0Z" fill="#222"/></svg><svg class="i" style="left:20px;top:579px" width="4" height="4"><path d="M4 0V4H0Z" fill="#222"/></svg><svg class="i" style="left:20px;top:601px" width="4" height="4"><path d="M4 0V4H0Z" fill="#222"/></svg><svg class="i" style="left:20px;top:628px" width="4" height="4"><path d="M4 0V4H0Z" fill="#222"/></svg><svg class="i" style="left:20px;top:651px" width="4" height="4"><path d="M4 0V4H0Z" fill="#222"/></svg><svg class="i" style="left:20px;top:673px" width="4" height="4"><path d="M4 0V4H0Z" fill="#222"/></svg><svg class="i" style="left:20px;top:701px" width="4" height="4"><path d="M4 0V4H0Z" fill="#222"/></svg>
<div class="b" style="left:27px;top:264px;width:15px;height:504px;overflow:hidden;background:#f0f0f0;"><div style="position:absolute;left:-27px;top:-264px;"><svg class="i" style="left:28px;top:264px" width="14" height="504" shape-rendering="crispEdges"><rect x="11" y="1" width="3" height="1" fill="#000"/><rect x="1" y="9" width="13" height="1" fill="#000"/><rect x="11" y="17" width="3" height="1" fill="#000"/><rect x="11" y="25" width="3" height="1" fill="#000"/><rect x="11" y="33" width="3" height="1" fill="#000"/><rect x="11" y="41" width="3" height="1" fill="#000"/><rect x="9" y="49" width="5" height="1" fill="#000"/><rect x="11" y="57" width="3" height="1" fill="#000"/><rect x="11" y="65" width="3" height="1" fill="#000"/><rect x="11" y="73" width="3" height="1" fill="#000"/><rect x="11" y="81" width="3" height="1" fill="#000"/><rect x="1" y="89" width="13" height="1" fill="#000"/><rect x="11" y="97" width="3" height="1" fill="#000"/><rect x="11" y="105" width="3" height="1" fill="#000"/><rect x="11" y="113" width="3" height="1" fill="#000"/><rect x="11" y="121" width="3" height="1" fill="#000"/><rect x="9" y="129" width="5" height="1" fill="#000"/><rect x="11" y="137" width="3" height="1" fill="#000"/><rect x="11" y="145" width="3" height="1" fill="#000"/><rect x="11" y="153" width="3" height="1" fill="#000"/><rect x="11" y="161" width="3" height="1" fill="#000"/><rect x="1" y="169" width="13" height="1" fill="#000"/><rect x="11" y="177" width="3" height="1" fill="#000"/><rect x="11" y="185" width="3" height="1" fill="#000"/><rect x="11" y="193" width="3" height="1" fill="#000"/><rect x="11" y="201" width="3" height="1" fill="#000"/><rect x="9" y="209" width="5" height="1" fill="#000"/><rect x="11" y="217" width="3" height="1" fill="#000"/><rect x="11" y="226" width="3" height="1" fill="#000"/><rect x="11" y="234" width="3" height="1" fill="#000"/><rect x="11" y="242" width="3" height="1" fill="#000"/><rect x="1" y="250" width="13" height="1" fill="#000"/><rect x="11" y="258" width="3" height="1" fill="#000"/><rect x="11" y="266" width="3" height="1" fill="#000"/><rect x="11" y="274" width="3" height="1" fill="#000"/><rect x="11" y="282" width="3" height="1" fill="#000"/><rect x="9" y="290" width="5" height="1" fill="#000"/><rect x="11" y="298" width="3" height="1" fill="#000"/><rect x="11" y="306" width="3" height="1" fill="#000"/><rect x="11" y="314" width="3" height="1" fill="#000"/><rect x="11" y="322" width="3" height="1" fill="#000"/><rect x="1" y="330" width="13" height="1" fill="#000"/><rect x="11" y="338" width="3" height="1" fill="#000"/><rect x="11" y="346" width="3" height="1" fill="#000"/><rect x="11" y="354" width="3" height="1" fill="#000"/><rect x="11" y="362" width="3" height="1" fill="#000"/><rect x="9" y="370" width="5" height="1" fill="#000"/><rect x="11" y="378" width="3" height="1" fill="#000"/><rect x="11" y="386" width="3" height="1" fill="#000"/><rect x="11" y="394" width="3" height="1" fill="#000"/><rect x="11" y="402" width="3" height="1" fill="#000"/><rect x="1" y="410" width="13" height="1" fill="#000"/><rect x="11" y="418" width="3" height="1" fill="#000"/><rect x="11" y="426" width="3" height="1" fill="#000"/><rect x="11" y="434" width="3" height="1" fill="#000"/><rect x="11" y="442" width="3" height="1" fill="#000"/><rect x="9" y="450" width="5" height="1" fill="#000"/><rect x="11" y="458" width="3" height="1" fill="#000"/><rect x="11" y="466" width="3" height="1" fill="#000"/><rect x="11" y="474" width="3" height="1" fill="#000"/><rect x="11" y="482" width="3" height="1" fill="#000"/><rect x="1" y="491" width="13" height="1" fill="#000"/><rect x="11" y="499" width="3" height="1" fill="#000"/><rect x="0" y="400" width="14" height="1" fill="#f0f"/></svg><span class="t" style="left:38.8px;top:270.80px;font-size:9.6px;line-height:9.6px;transform-origin:0 0;transform:rotate(-90deg) translate(0,-100%) scaleX(0.95);">-100 mm</span><span class="t" style="left:38.8px;top:350.80px;font-size:9.6px;line-height:9.6px;transform-origin:0 0;transform:rotate(-90deg) translate(0,-100%) scaleX(0.95);">-200 mm</span><span class="t" style="left:38.8px;top:430.80px;font-size:9.6px;line-height:9.6px;transform-origin:0 0;transform:rotate(-90deg) translate(0,-100%) scaleX(0.95);">-300 mm</span><span class="t" style="left:38.8px;top:511.80px;font-size:9.6px;line-height:9.6px;transform-origin:0 0;transform:rotate(-90deg) translate(0,-100%) scaleX(0.95);">-400 mm</span><span class="t" style="left:38.8px;top:591.80px;font-size:9.6px;line-height:9.6px;transform-origin:0 0;transform:rotate(-90deg) translate(0,-100%) scaleX(0.95);">-500 mm</span><span class="t" style="left:38.8px;top:671.80px;font-size:9.6px;line-height:9.6px;transform-origin:0 0;transform:rotate(-90deg) translate(0,-100%) scaleX(0.95);">-600 mm</span><span class="t" style="left:38.8px;top:752.80px;font-size:9.6px;line-height:9.6px;transform-origin:0 0;transform:rotate(-90deg) translate(0,-100%) scaleX(0.95);">-700 mm</span></div></div><div class="b" style="left:42px;top:263px;width:1px;height:505px;background:#a0a0a0;"></div><div class="b" style="left:43px;top:263px;width:1px;height:505px;background:#696969;"></div>
<div class="b" style="left:44px;top:264px;width:1255px;height:490px;background:#fff;"></div><svg class="i" style="left:0;top:0" width="1366" height="768" viewBox="0 0 1366 768" shape-rendering="crispEdges"><g clip-path="url(#cv)"><defs><clipPath id="cv"><rect x="44" y="264" width="1255" height="489.5"/></clipPath></defs><path d="M78.5 264.0 L78.5 753.0" fill="none" stroke="#b2b2b2" stroke-width="1" stroke-dasharray="21.9 3 1 3" stroke-dashoffset="14.3"/><path d="M177.5 268.2 L177.5 753.0" fill="none" stroke="#b2b2b2" stroke-width="1" stroke-dasharray="21.9 3 1 3"/><path d="M384.5 264.0 L384.5 753.0" fill="none" stroke="#b2b2b2" stroke-width="1" stroke-dasharray="21.9 3 1 3" stroke-dashoffset="24.3"/><path d="M41.9 534.5 L1298.0 534.5" fill="none" stroke="#b9b9b9" stroke-width="3" stroke-dasharray="19.4 4.1 1.2 4.2"/><path d="M44.0 551.5 L1298.0 551.5" fill="none" stroke="#c4c4c4" stroke-width="1" stroke-dasharray="21.9 3 1 3" stroke-dashoffset="6.3"/><path d="M44.0 553.5 L1298.0 553.5" fill="none" stroke="#c4c4c4" stroke-width="1" stroke-dasharray="21.9 3 1 3" stroke-dashoffset="20"/><path d="M44.0 572.5 L1298.0 572.5" fill="none" stroke="#b2b2b2" stroke-width="1" stroke-dasharray="21.9 3 1 3" stroke-dashoffset="7.7"/><path d="M44.0 514.2 L240.0 527.8 L384.0 540.0" fill="none" stroke="#000" stroke-width="1" /><path d="M44.0 516.1 L240.0 530.0 L384.0 541.0" fill="none" stroke="#000" stroke-width="1" /><path d="M44.0 518.3 L240.0 532.5 L375.0 542.0" fill="none" stroke="#000" stroke-width="1" /><path d="M44.0 570.0 L240.0 563.2 L376.0 558.6" fill="none" stroke="#000" stroke-width="1" /><path d="M44.0 572.5 L240.0 565.2 L376.0 560.0" fill="none" stroke="#000" stroke-width="1" /><path d="M44.0 575.4 L240.0 568.0 L376.0 561.5" fill="none" stroke="#000" stroke-width="1" /><path d="M82.5 521.7 L82.5 568.0" fill="none" stroke="#000" stroke-width="1" /><path d="M86.5 521.7 L86.5 568.0" fill="none" stroke="#000" stroke-width="1" /><path d="M133.5 525.6 L133.5 566.2" fill="none" stroke="#000" stroke-width="1" /><path d="M137.5 525.6 L137.5 566.2" fill="none" stroke="#000" stroke-width="1" /><path d="M184.5 528.5 L184.5 565.9" fill="none" stroke="#000" stroke-width="1" /><path d="M186.5 528.5 L186.5 565.9" fill="none" stroke="#000" stroke-width="1" /><path d="M235.5 533.0 L235.5 563.0" fill="none" stroke="#000" stroke-width="1" /><path d="M238.5 533.0 L238.5 563.0" fill="none" stroke="#000" stroke-width="1" /><path d="M285.5 536.6 L285.5 561.2" fill="none" stroke="#000" stroke-width="1" /><path d="M288.5 536.6 L288.5 561.2" fill="none" stroke="#000" stroke-width="1" /><path d="M335.5 539.5 L335.5 559.3" fill="none" stroke="#000" stroke-width="1" /><path d="M339.5 539.5 L339.5 559.3" fill="none" stroke="#000" stroke-width="1" /><path d="M44.0 540.3 L123.5 550.6 L155.0 551.5 L384.5 551.5 L384.5 554.5 L177.6 554.5 L154.0 553.4 L82.0 547.0 L76.6 548.3 L44.0 543.2" fill="none" stroke="#0000ff" stroke-width="1" /><rect x="167.5" y="526.5" width="29.5" height="41" rx="3.5" fill="none" stroke="#ff0000"/><path d="M181.5 521.0 L181.5 572.0" fill="none" stroke="#ff0000" stroke-width="1" /><path d="M371.5 541.5 L383.5 541.5 L383.5 543.5 L388.5 543.5 L388.5 544.5 L391.5 544.5 L391.5 558.5 L388.5 558.5 L388.5 560.5 L371.5 560.5 L371.5 558.5 L368.5 558.5 L368.5 544.5 L371.5 544.5 L371.5 541.5" fill="none" stroke="#ff0000" stroke-width="1" /><path d="M380.5 535.0 L380.5 567.0" fill="none" stroke="#ff0000" stroke-width="1" /><path d="M286.4 532.0 L334.0 522.7" fill="none" stroke="#000" stroke-width="1" /><path d="M327.4 534.0 L334.0 522.7 L432.8 372.1 L437.2 369.5 L445.0 368.3 L462.7 370.0 L486.3 374.3 L486.3 377.0 L460.0 536.6" fill="none" stroke="#000" stroke-width="1" /><path d="M463.3 370.0 L416.9 520.0 L411.0 537.0" fill="none" stroke="#000" stroke-width="2" /><path d="M334.7 564.4 L374.2 575.4 L380.2 574.0 L449.0 559.7" fill="none" stroke="#000" stroke-width="1" /><path d="M338.0 563.2 L377.0 573.8" fill="none" stroke="#000" stroke-width="1" /><path d="M387.5 545.0 L387.5 537.5 L459.5 537.5 L459.5 545.0" fill="none" stroke="#000" stroke-width="1" /><path d="M387.5 539.5 L459.5 539.5" fill="none" stroke="#000" stroke-width="1" /><path d="M387.5 545.0 L459.5 545.0" fill="none" stroke="#000" stroke-width="2" /><path d="M385.0 547.5 L456.0 547.5" fill="none" stroke="#000" stroke-width="1" /><path d="M456.8 546.0 L449.5 560.0" fill="none" stroke="#000" stroke-width="2" /><path d="M452.5 548.0 L447.0 557.5" fill="none" stroke="#000" stroke-width="1" /><path d="M388.0 556.5 L451.0 556.5" fill="none" stroke="#000" stroke-width="1" /><path d="M376.0 560.0 L405.0 558.6 L450.0 558.6" fill="none" stroke="#000" stroke-width="1" /><path d="M376.0 561.5 L405.0 561.5 L449.0 559.7" fill="none" stroke="#000" stroke-width="1" /><path d="M421.5 547.5 L421.5 556.0" fill="none" stroke="#000" stroke-width="1" /><path d="M423.5 547.5 L423.5 556.0" fill="none" stroke="#000" stroke-width="1" /><path d="M382.5 543.0 L382.5 558.0" fill="none" stroke="#000" stroke-width="1" /><path d="M389.5 543.0 L389.5 558.0" fill="none" stroke="#000" stroke-width="1" /><path d="M459.5 541.8 L461.0 539.6 L468.5 539.2 L470.0 541.0 L483.5 541.5" fill="none" stroke="#000" stroke-width="1" /><path d="M459.5 542.0 L461.0 544.0 L468.5 544.4 L470.0 543.0 L483.5 542.5" fill="none" stroke="#000" stroke-width="1" /><path d="M483.0 542.0 L490.0 542.0" fill="none" stroke="#000" stroke-width="2" /><path d="M464.5 544.7 L458.2 553.0 L460.0 555.2 L470.2 544.7" fill="none" stroke="#000" stroke-width="1" /><path d="M557.5 540.5 L566.5 540.5 L566.5 543.5 L557.5 543.5 L557.5 540.5" fill="none" stroke="#000" stroke-width="1" /><path d="M561.5 541.0 L561.5 542.6" fill="none" stroke="#000" stroke-width="1" /><path d="M563.5 541.0 L563.5 542.6" fill="none" stroke="#000" stroke-width="1" /><path d="M559.5 544.0 L559.5 545.5 L553.0 551.7" fill="none" stroke="#000" stroke-width="1" /><path d="M564.5 544.0 L564.5 546.5 L556.0 554.7" fill="none" stroke="#000" stroke-width="1" /><circle cx="553.9" cy="553.4" r="1.7" fill="none" stroke="#000" stroke-width="1"/><path d="M679.7 470.4 L787.5 303.2 L792.4 300.4 L800.7 299.2 L818.8 300.4 L842.5 305.0 L842.5 308.0 L815.3 468.5 L743.7 468.5 L743.7 474.6 L739.5 474.6 L687.4 471.1 L685.3 470.4 L679.7 470.4" fill="none" stroke="#000" stroke-width="1" /><path d="M793.0 301.8 L685.3 470.4" fill="none" stroke="#000" stroke-width="1" /><path d="M814.0 300.8 L761.8 468.0" fill="none" stroke="#000" stroke-width="1" /><path d="M817.7 300.6 L766.0 468.0" fill="none" stroke="#000" stroke-width="1" /><path d="M819.9 301.0 L768.4 468.0" fill="none" stroke="#000" stroke-width="1" /><path d="M823.7 302.2 L772.2 468.0" fill="none" stroke="#000" stroke-width="1" /><path d="M834.8 303.9 L807.7 468.0" fill="none" stroke="#000" stroke-width="1" /><path d="M769.4 339.5 L801.4 339.5" fill="none" stroke="#000" stroke-width="1" /><path d="M767.4 343.5 L800.2 343.5" fill="none" stroke="#000" stroke-width="1" /><path d="M749.3 371.5 L791.0 371.5" fill="none" stroke="#000" stroke-width="1" /><path d="M746.5 375.5 L789.8 375.5" fill="none" stroke="#000" stroke-width="1" /><path d="M727.3 404.5 L781.3 404.5" fill="none" stroke="#000" stroke-width="1" /><path d="M725.0 408.5 L780.1 408.5" fill="none" stroke="#000" stroke-width="1" /><path d="M706.9 436.5 L770.8 436.5" fill="none" stroke="#000" stroke-width="1" /><path d="M704.5 440.5 L769.6 440.5" fill="none" stroke="#000" stroke-width="1" /><path d="M690.9 460.5 L763.2 460.5" fill="none" stroke="#000" stroke-width="1" /><path d="M813.3 339.5 L828.6 339.5" fill="none" stroke="#000" stroke-width="1" /><path d="M800.7 371.5 L824.4 371.5" fill="none" stroke="#000" stroke-width="1" /><path d="M800.7 373.5 L824.4 373.5" fill="none" stroke="#000" stroke-width="1" /><path d="M790.3 405.0 L820.0 405.0" fill="none" stroke="#000" stroke-width="2" /><path d="M779.2 437.0 L813.3 437.0" fill="none" stroke="#000" stroke-width="2" /><path d="M773.0 464.5 L808.4 464.5" fill="none" stroke="#000" stroke-width="1" /><path d="M790.3 307.5 L811.9 307.5" fill="none" stroke="#000" stroke-width="1" /><path d="M784.0 316.4 L802.8 307.8" fill="none" stroke="#000" stroke-width="1" /><path d="M804.6 307.8 L800.7 323.1 L806.3 325.5" fill="none" stroke="#000" stroke-width="1" /><path d="M697.8 451.0 L703.0 460.0" fill="none" stroke="#000" stroke-width="1" /><path d="M763.2 440.8 L757.6 460.4" fill="none" stroke="#000" stroke-width="1" /><path d="M692.3 465.1 L738.2 468.3" fill="none" stroke="#000" stroke-width="1" stroke-dasharray="4 3"/><path d="M787.5 437.7 L779.9 464.1" fill="none" stroke="#000" stroke-width="1" /><path d="M784.0 452.3 L791.0 464.1" fill="none" stroke="#000" stroke-width="1" /><path d="M809.8 452.3 L795.9 464.1" fill="none" stroke="#000" stroke-width="1" /><path d="M464.5 635.5 L865.5 635.5" fill="none" stroke="#000" stroke-width="1" /><path d="M464.5 639.5 L865.5 639.5" fill="none" stroke="#000" stroke-width="1" /><path d="M464.5 703.5 L865.5 703.5" fill="none" stroke="#000" stroke-width="1" /><path d="M460.5 707.5 L869.0 707.5" fill="none" stroke="#000" stroke-width="2" /><path d="M464.5 635.5 L459.5 637.5 L456.8 643.0 L456.5 673.0 L460.5 707.0 L462.9 728.0 L514.4 737.5 L815.4 737.5 L867.4 728.0 L869.0 707.0 L873.4 673.0 L873.2 643.0 L870.5 637.5 L865.5 635.5" fill="none" stroke="#000" stroke-width="1" /><path d="M464.5 635.5 L464.5 707.0" fill="none" stroke="#000" stroke-width="1" /><path d="M468.5 639.5 L468.5 703.5" fill="none" stroke="#000" stroke-width="1" /><path d="M504.5 639.5 L504.5 703.5" fill="none" stroke="#000" stroke-width="1" /><path d="M508.5 639.5 L508.5 703.5" fill="none" stroke="#000" stroke-width="1" /><path d="M544.5 639.5 L544.5 703.5" fill="none" stroke="#000" stroke-width="1" /><path d="M548.5 639.5 L548.5 703.5" fill="none" stroke="#000" stroke-width="1" /><path d="M584.5 639.5 L584.5 703.5" fill="none" stroke="#000" stroke-width="1" /><path d="M588.5 639.5 L588.5 703.5" fill="none" stroke="#000" stroke-width="1" /><path d="M624.5 639.5 L624.5 703.5" fill="none" stroke="#000" stroke-width="1" /><path d="M628.5 639.5 L628.5 703.5" fill="none" stroke="#000" stroke-width="1" /><path d="M701.5 639.5 L701.5 703.5" fill="none" stroke="#000" stroke-width="1" /><path d="M705.5 639.5 L705.5 703.5" fill="none" stroke="#000" stroke-width="1" /><path d="M741.5 639.5 L741.5 703.5" fill="none" stroke="#000" stroke-width="1" /><path d="M745.5 639.5 L745.5 703.5" fill="none" stroke="#000" stroke-width="1" /><path d="M781.5 639.5 L781.5 703.5" fill="none" stroke="#000" stroke-width="1" /><path d="M785.5 639.5 L785.5 703.5" fill="none" stroke="#000" stroke-width="1" /><path d="M821.5 639.5 L821.5 703.5" fill="none" stroke="#000" stroke-width="1" /><path d="M825.5 639.5 L825.5 703.5" fill="none" stroke="#000" stroke-width="1" /><path d="M861.5 639.5 L861.5 703.5" fill="none" stroke="#000" stroke-width="1" /><path d="M865.5 635.5 L865.5 707.0" fill="none" stroke="#000" stroke-width="1" /><path d="M504.4 639.5 L471.1 703.5" fill="none" stroke="#000" stroke-width="1" /><path d="M504.4 639.5 L471.1 703.5" fill="none" stroke="#000" stroke-width="1" /><path d="M501.5 639.5 L468.8 699.0" fill="none" stroke="#000" stroke-width="1" /><path d="M508.5 639.5 L542.1 703.5" fill="none" stroke="#000" stroke-width="1" /><path d="M508.5 639.5 L542.1 703.5" fill="none" stroke="#000" stroke-width="1" /><path d="M511.3 639.5 L544.5 699.0" fill="none" stroke="#000" stroke-width="1" /><path d="M584.5 639.5 L551.2 703.5" fill="none" stroke="#000" stroke-width="1" /><path d="M584.5 639.5 L551.2 703.5" fill="none" stroke="#000" stroke-width="1" /><path d="M581.7 639.5 L548.9 699.0" fill="none" stroke="#000" stroke-width="1" /><path d="M588.7 639.5 L622.1 703.5" fill="none" stroke="#000" stroke-width="1" /><path d="M588.7 639.5 L622.1 703.5" fill="none" stroke="#000" stroke-width="1" /><path d="M591.5 639.5 L624.5 699.0" fill="none" stroke="#000" stroke-width="1" /><path d="M650.2 639.5 L630.8 703.5" fill="none" stroke="#000" stroke-width="1" /><path d="M650.2 639.5 L630.8 703.5" fill="none" stroke="#000" stroke-width="1" /><path d="M648.0 639.5 L628.8 697.0" fill="none" stroke="#000" stroke-width="1" /><path d="M651.2 639.5 L657.0 703.5" fill="none" stroke="#000" stroke-width="1" /><path d="M653.2 639.5 L659.3 703.5" fill="none" stroke="#000" stroke-width="1" /><path d="M677.3 639.5 L671.3 703.5" fill="none" stroke="#000" stroke-width="1" /><path d="M679.3 639.5 L673.6 703.5" fill="none" stroke="#000" stroke-width="1" /><path d="M680.0 639.5 L699.1 703.5" fill="none" stroke="#000" stroke-width="1" /><path d="M680.0 639.5 L699.1 703.5" fill="none" stroke="#000" stroke-width="1" /><path d="M682.2 639.5 L701.2 697.0" fill="none" stroke="#000" stroke-width="1" /><path d="M741.6 639.5 L708.1 703.5" fill="none" stroke="#000" stroke-width="1" /><path d="M741.6 639.5 L708.1 703.5" fill="none" stroke="#000" stroke-width="1" /><path d="M738.8 639.5 L705.8 699.0" fill="none" stroke="#000" stroke-width="1" /><path d="M745.7 639.5 L779.3 703.5" fill="none" stroke="#000" stroke-width="1" /><path d="M745.7 639.5 L779.3 703.5" fill="none" stroke="#000" stroke-width="1" /><path d="M748.5 639.5 L781.7 699.0" fill="none" stroke="#000" stroke-width="1" /><path d="M821.8 639.5 L788.5 703.5" fill="none" stroke="#000" stroke-width="1" /><path d="M821.8 639.5 L788.5 703.5" fill="none" stroke="#000" stroke-width="1" /><path d="M819.0 639.5 L786.2 699.0" fill="none" stroke="#000" stroke-width="1" /><path d="M825.9 639.5 L859.0 703.5" fill="none" stroke="#000" stroke-width="1" /><path d="M825.9 639.5 L859.0 703.5" fill="none" stroke="#000" stroke-width="1" /><path d="M828.7 639.5 L861.4 699.0" fill="none" stroke="#000" stroke-width="1" /></g></svg><svg class="i" style="left:66px;top:704px" width="36" height="30" viewBox="66 704 36 30"><path d="M71.5 710V725.5H74" stroke="#008000" stroke-width="1.4" fill="none"/><path d="M74 725.5H87.5" stroke="#0000e0" stroke-width="1.4" fill="none"/><text x="72" y="715.3" font-family='&quot;Liberation Sans&quot;, sans-serif' font-size="12.5" font-weight="bold" fill="#008000" textLength="10" lengthAdjust="spacingAndGlyphs">Y</text><text x="73" y="730.2" font-family='&quot;Liberation Sans&quot;, sans-serif' font-size="13.5" font-weight="bold" fill="#a01818" textLength="9.5" lengthAdjust="spacingAndGlyphs">Z</text><text x="87.8" y="730.2" font-family='&quot;Liberation Sans&quot;, sans-serif' font-size="12.5" font-weight="bold" fill="#1818d8" textLength="10" lengthAdjust="spacingAndGlyphs">X</text></svg>
<div class="b" style="left:1299px;top:262px;width:2px;height:494px;background:#fff;"></div><div class="b" style="left:1301px;top:264px;width:16px;height:492px;background:#f0f0f0;"></div><div class="b" style="left:1301px;top:524px;width:15px;height:58px;background:#cdcdcd;"></div><svg class="i" style="left:1304px;top:268px" width="9" height="6"><path d="M0.7 5.2L4.5 1.4L8.3 5.2" fill="none" stroke="#505050" stroke-width="1.6"/></svg><svg class="i" style="left:1304px;top:744px" width="9" height="6"><path d="M0.7 0.8L4.5 4.6L8.3 0.8" fill="none" stroke="#505050" stroke-width="1.6"/></svg><div class="b" style="left:1317px;top:246px;width:49px;height:522px;background:#f0f0f0;"></div><div class="b" style="left:1318px;top:247px;width:22px;height:87px;background:#fff;"></div><svg class="i" style="left:1321px;top:251px" width="16" height="16" viewBox="0 0 16 16"><path d="M1.5 8L6 3.5L9.5 7V15H1.5Z" fill="#f02020" stroke="#b01010" stroke-width="0.6" /><path d="M9.5 7L14 6V10.5L9.5 15Z" fill="#a01818" stroke="#701010" stroke-width="0.6" /><path d="M2 1L8 7M7.5 1L3.5 5.5" fill="none" stroke="#222" stroke-width="1.3" /><path d="M8 2.5C10 0.5 12.5 1.5 13 3.5V8.5H10" fill="#fff" stroke="#222" stroke-width="1" /><rect x="8.5" y="4.5" width="3.5" height="1.5" fill="#d8c830" stroke="#555" stroke-width="0.5" /></svg><span class="t" style="left:1324.6px;top:270px;font-size:12px;line-height:12px;transform-origin:0 0;transform:rotate(90deg) translate(0,-100%) scaleX(1.035);">Narzędzia</span><div class="b" style="left:1340px;top:247px;width:26px;height:355px;background:#f0f0f0;"></div><div class="b" style="left:1340px;top:250px;width:1px;height:352px;background:#d8d8d8;"></div><div class="b" style="left:1340px;top:601px;width:26px;height:1px;background:#c9c9c9;"></div><svg class="i" style="left:1343px;top:251px" width="22" height="2"><rect x="0" y="0" width="2" height="2" fill="#b4b4b4"/><rect x="4" y="0" width="2" height="2" fill="#b4b4b4"/><rect x="8" y="0" width="2" height="2" fill="#b4b4b4"/><rect x="12" y="0" width="2" height="2" fill="#b4b4b4"/><rect x="16" y="0" width="2" height="2" fill="#b4b4b4"/><rect x="20" y="0" width="2" height="2" fill="#b4b4b4"/></svg><svg class="i" style="left:1346px;top:259px" width="16" height="16" viewBox="0 0 16 16"><path d="M0.5 2.5H2.5V6.5L7 12H0.5Z" fill="#f6f6f6" stroke="#cfcfcf" stroke-width="1" /><path d="M12.5 2.5H15V12H8.5L12.5 6.5Z" fill="#b8b8b8" stroke="#b8b8b8" stroke-width="1" /><path d="M13.5 4V10" fill="none" stroke="#e4e4e4" stroke-width="1" /></svg><div class="b" style="left:1345px;top:280px;width:18px;height:1px;background:#a0a0a0;"></div><svg class="i" style="left:1346px;top:288px" width="16" height="16" viewBox="0 0 16 16"><path d="M6 5.5L11.5 1M8 7L13.5 2.5M10 9L14.5 5" fill="none" stroke="#111" stroke-width="1.1" /><path d="M3.5 7.5L6 5.5M5 9.5L8 7M7 11.5L10 9" fill="none" stroke="#f02020" stroke-width="1.1" /><path d="M4 2L0.8 5.2" fill="none" stroke="#2b2bff" stroke-width="1.2" /><path d="M0.5 2.5V5.5H3.5" fill="none" stroke="#2b2bff" stroke-width="1.2" /></svg><svg class="i" style="left:1346px;top:309px" width="16" height="16" viewBox="0 0 16 16"><path d="M3 12.5L12.5 3" fill="none" stroke="#b8b8b8" stroke-width="1.4" /><circle cx="7.7" cy="7.7" r="2" fill="#f0f0f0" stroke="#b8b8b8" stroke-width="1" /><path d="M10 0.5L15.5 6H10Z" fill="#c8c8c8" stroke="#c0c0c0" stroke-width="0.5" /><path d="M0.5 10V15.5H6Z" fill="#c8c8c8" stroke="#c0c0c0" stroke-width="0.5" /></svg><div class="b" style="left:1345px;top:330px;width:18px;height:1px;background:#a0a0a0;"></div><svg class="i" style="left:1346px;top:338px" width="16" height="16" viewBox="0 0 16 16"><rect x="0.7" y="2.5" width="6" height="6" fill="none" stroke="#222" stroke-width="1.3" stroke-dasharray="2 1.2" rx="1"/><rect x="8.5" y="9.5" width="6.5" height="5.5" fill="#fff" stroke="#f03030" stroke-width="1.3" /><path d="M6 1.5C9 0.5 11.5 2 11.5 6" fill="none" stroke="#20d020" stroke-width="1.4" /><path d="M9.5 5L11.5 8L13.5 5Z" fill="#20d020" stroke="#20d020" stroke-width="0.4" /></svg><svg class="i" style="left:1346px;top:359px" width="16" height="16" viewBox="0 0 16 16"><path d="M6 0.5H9V4.5L13.5 7.5V14.5H1.5V7.5L6 4.5Z" fill="#f0f0f0" stroke="#b4b4b4" stroke-width="1.1" /><path d="M4 3.5H11" fill="none" stroke="#b4b4b4" stroke-width="1" /><path d="M5 8.5H10.5V11.5H5M5.5 10L4 11.5L5.5 13" fill="none" stroke="#bcbcbc" stroke-width="1" /></svg><div class="b" style="left:1345px;top:380px;width:18px;height:1px;background:#a0a0a0;"></div><svg class="i" style="left:1346px;top:387px" width="16" height="16" viewBox="0 0 16 16"><rect x="1" y="1" width="7.5" height="7.5" fill="#d6d6d6" stroke="#ababab" stroke-width="1" /><rect x="8" y="8" width="7" height="7" fill="#c4c4c4" stroke="#ababab" stroke-width="1" /><rect x="4.5" y="4.5" width="7.5" height="7.5" fill="#e4e4e4" stroke="#ababab" stroke-width="1.2" /></svg><div class="b" style="left:1345px;top:408px;width:18px;height:1px;background:#a0a0a0;"></div><svg class="i" style="left:1346px;top:415px" width="16" height="16" viewBox="0 0 16 16"><rect x="0.7" y="1.5" width="14.6" height="12" fill="#e6e6e6" stroke="#ababab" stroke-width="1.3" /><path d="M1 5H15M1 8.5H15M1 12H15M5 5V13.5M11 5V13.5" fill="none" stroke="#ababab" stroke-width="1.2" /><rect x="5.5" y="6.5" width="5" height="3.5" fill="#fff" stroke="#b4b4b4" stroke-width="0.8" /><rect x="1.2" y="2" width="13.6" height="2.5" fill="#d0d0d0" stroke="none" stroke-width="1" /></svg><svg class="i" style="left:1346px;top:438px" width="16" height="16" viewBox="0 0 16 16"><path d="M1.5 4.5H10.5V14.5H1.5ZM1.5 4.5L5 0.5H14.5V10.5L10.5 14.5M10.5 4.5L14.5 0.5" fill="#f4f4f4" stroke="#a8a8a8" stroke-width="1" /><path d="M1.5 11.5L5.5 7.5L7.5 9L10 6.5H14.5L10.5 11.5Z" fill="#4444d0" stroke="#2b2bb0" stroke-width="0.5" /><path d="M1 11.5H10.5" fill="none" stroke="#2b2bb0" stroke-width="1.4" /><path d="M3 10.5L5.5 8.5L7 10L9 8.5" fill="none" stroke="#e8e8ff" stroke-width="0.7" /></svg><svg class="i" style="left:1346px;top:461px" width="16" height="16" viewBox="0 0 16 16"><path d="M1 6L5 2.5H11C14 2.5 15.5 5 15.5 8C15.5 11 13 13.5 10 13.5H1Z" fill="#dcdcdc" stroke="#b4b4b4" stroke-width="1" /><circle cx="9.5" cy="8" r="4" fill="#cfcfcf" stroke="#c0c0c0" stroke-width="1" /><circle cx="9" cy="8" r="2" fill="#e8e8e8" stroke="none" stroke-width="1" /></svg><svg class="i" style="left:1346px;top:482px" width="16" height="16" viewBox="0 0 16 16"><path d="M0.5 2.5L3.5 0.5L9.5 5L10 8L7 8.5Z" fill="#f2e21c" stroke="#333" stroke-width="1" /><path d="M2.5 3.5L7 7" fill="none" stroke="#333" stroke-width="0.8" /><path d="M7.5 8L10 7" fill="none" stroke="#222" stroke-width="1.6" /><path d="M3.5 11.5h3M5 10v3" fill="none" stroke="#20a040" stroke-width="1" /><path d="M10 13.5h3M11.5 12v3" fill="none" stroke="#2b2bff" stroke-width="1" /><path d="M12.5 8.5h3M14 7v3" fill="none" stroke="#2b2bff" stroke-width="1" /></svg><svg class="i" style="left:1346px;top:503px" width="16" height="16" viewBox="0 0 16 16"><rect x="0.7" y="1" width="6.5" height="8.5" fill="#fff" stroke="#222" stroke-width="1.3" /><rect x="2.3" y="2.8" width="3.4" height="1.8" fill="none" stroke="#222" stroke-width="1" /><rect x="2.3" y="6" width="3.4" height="1.8" fill="none" stroke="#222" stroke-width="1" /><path d="M8.5 1.5H13V5" fill="none" stroke="#2b2bff" stroke-width="1.3" /><path d="M11 4L13 6.5L15 4Z" fill="#2b2bff" stroke="#2b2bff" stroke-width="0.4" /><rect x="9.7" y="7.5" width="5.8" height="8" fill="#fff" stroke="#222" stroke-width="1.3" /><path d="M11 14L14.5 9" fill="none" stroke="#222" stroke-width="1" /></svg><div class="b" style="left:1345px;top:524px;width:18px;height:1px;background:#a0a0a0;"></div><svg class="i" style="left:1346px;top:532px" width="16" height="16" viewBox="0 0 16 16"><circle cx="8" cy="7.5" r="7" fill="#f4f8a0" stroke="#58b818" stroke-width="1.4" /><path d="M3.5 3L7 6.5M12.5 3L9 6.5M3.5 12L7 8.5M12.5 12L9 8.5" fill="none" stroke="#2b2bd8" stroke-width="1.2" /><path d="M4.5 6.5H7V4M11.5 6.5H9V4M4.5 8.5H7V11M11.5 8.5H9V11" fill="none" stroke="#2b2bd8" stroke-width="1.2" /></svg><svg class="i" style="left:1346px;top:553px" width="16" height="16" viewBox="0 0 16 16"><rect x="0.7" y="2" width="7.5" height="4.5" fill="#fff" stroke="#222" stroke-width="1.2" rx="1.5"/><circle cx="3.5" cy="4.2" r="1.5" fill="none" stroke="#222" stroke-width="1" /><circle cx="6.5" cy="4.2" r="1.2" fill="none" stroke="#222" stroke-width="0.9" /><path d="M2 1H5" fill="none" stroke="#222" stroke-width="1.2" /><path d="M6.5 13L13.5 6.5" fill="none" stroke="#222" stroke-width="1.1" /><path d="M10.5 6H14V9.5" fill="none" stroke="#222" stroke-width="1.1" /><rect x="4.5" y="12.5" width="2" height="2" fill="#fff" stroke="#3434ff"/><rect x="13.5" y="4.5" width="2" height="2" fill="#fff" stroke="#3434ff"/></svg><div class="b" style="left:1345px;top:574px;width:18px;height:1px;background:#a0a0a0;"></div><svg class="i" style="left:1346px;top:582px" width="16" height="16" viewBox="0 0 16 16"><rect x="2.5" y="2" width="9" height="9" fill="none" stroke="#b0b0b0" stroke-width="1.3" /><rect x="6" y="6" width="9" height="9" fill="none" stroke="#b0b0b0" stroke-width="1.3" /><rect x="1" y="0.5" width="2.6" height="2.6" fill="#a8a8a8" stroke="none" stroke-width="1" /><rect x="10.5" y="0.5" width="2.6" height="2.6" fill="#a8a8a8" stroke="none" stroke-width="1" /><rect x="1" y="9.5" width="2.6" height="2.6" fill="#a8a8a8" stroke="none" stroke-width="1" /><rect x="4.5" y="4.5" width="2.6" height="2.6" fill="#a8a8a8" stroke="none" stroke-width="1" /><rect x="14" y="4.5" width="2.6" height="2.6" fill="#a8a8a8" stroke="none" stroke-width="1" /><rect x="4.5" y="14" width="2.6" height="2.6" fill="#a8a8a8" stroke="none" stroke-width="1" /><rect x="14" y="14" width="2.6" height="2.6" fill="#a8a8a8" stroke="none" stroke-width="1" /><rect x="10.5" y="9.5" width="2.6" height="2.6" fill="#a8a8a8" stroke="none" stroke-width="1" /></svg><svg class="i" style="left:1361px;top:274px" width="4" height="4"><path d="M4 0V4H0Z" fill="#222"/></svg><svg class="i" style="left:1361px;top:303px" width="4" height="4"><path d="M4 0V4H0Z" fill="#222"/></svg><svg class="i" style="left:1361px;top:325px" width="4" height="4"><path d="M4 0V4H0Z" fill="#222"/></svg><svg class="i" style="left:1361px;top:354px" width="4" height="4"><path d="M4 0V4H0Z" fill="#222"/></svg><svg class="i" style="left:1361px;top:375px" width="4" height="4"><path d="M4 0V4H0Z" fill="#222"/></svg><svg class="i" style="left:1361px;top:403px" width="4" height="4"><path d="M4 0V4H0Z" fill="#222"/></svg><svg class="i" style="left:1361px;top:431px" width="4" height="4"><path d="M4 0V4H0Z" fill="#222"/></svg><svg class="i" style="left:1361px;top:453px" width="4" height="4"><path d="M4 0V4H0Z" fill="#222"/></svg><svg class="i" style="left:1361px;top:498px" width="4" height="4"><path d="M4 0V4H0Z" fill="#222"/></svg><svg class="i" style="left:1361px;top:520px" width="4" height="4"><path d="M4 0V4H0Z" fill="#222"/></svg><svg class="i" style="left:1361px;top:548px" width="4" height="4"><path d="M4 0V4H0Z" fill="#222"/></svg><svg class="i" style="left:1361px;top:570px" width="4" height="4"><path d="M4 0V4H0Z" fill="#222"/></svg>
<div class="b" style="left:44px;top:753px;width:1255px;height:1px;background:#e3e3e3;"></div><div class="b" style="left:1298px;top:264px;width:1px;height:490px;background:#e3e3e3;"></div><div class="b" style="left:44px;top:754px;width:1257px;height:2px;background:#fff;"></div><div class="b" style="left:44px;top:755px;width:1256px;height:13px;background:#f0f0f0;"></div><div class="b" style="left:1299px;top:756px;width:18px;height:12px;background:#f0f0f0;"></div><div class="b" style="left:293px;top:757px;width:1006px;height:1px;background:#fff;"></div><div class="b" style="left:47px;top:755px;width:4px;height:1px;background:#777;"></div><div class="b" style="left:118px;top:756px;width:73px;height:12px;background:#dcdcdc;"></div><div class="b" style="left:192px;top:756px;width:74px;height:12px;background:#dcdcdc;"></div><div class="b" style="left:117px;top:755px;width:171px;height:1px;background:#5a5a5a;"></div><div class="b" style="left:116px;top:755px;width:1px;height:13px;background:#000;"></div><div class="b" style="left:117px;top:756px;width:1px;height:12px;background:#8a8a8a;"></div><div class="b" style="left:292px;top:755px;width:1px;height:13px;background:#444;"></div><svg class="i" style="left:56px;top:757px" width="13" height="11" viewBox="0 0 13 11"><path d="M1 3L4 1H9.5V6L7 8H1Z" fill="#fff" stroke="#222" stroke-width="1.1" /><path d="M1 3H7V8M7 3L9.5 1" fill="none" stroke="#222" stroke-width="1" /><circle cx="8.5" cy="8.5" r="3.5" fill="#888" stroke="#222" stroke-width="1" /><circle cx="7.6" cy="7.4" r="1.2" fill="#ddd" stroke="none" stroke-width="1" /></svg><svg class="i" style="left:125px;top:757px" width="11" height="11" viewBox="0 0 11 11"><path d="M1.5 0.5H6.5L9.5 3.5V10.5H1.5Z" fill="#fff" stroke="#222" stroke-width="1.1" /><path d="M6.5 0.5V3.5H9.5" fill="none" stroke="#222" stroke-width="1" /><text x="3" y="10.5" font-family="Liberation Sans, sans-serif" font-size="7" fill="#1a1a90" font-weight="bold" >1</text></svg><svg class="i" style="left:200px;top:757px" width="11" height="11" viewBox="0 0 11 11"><path d="M1.5 0.5H6.5L9.5 3.5V10.5H1.5Z" fill="#fff" stroke="#222" stroke-width="1.1" /><path d="M6.5 0.5V3.5H9.5" fill="none" stroke="#222" stroke-width="1" /><text x="3" y="10.5" font-family="Liberation Sans, sans-serif" font-size="7" fill="#1a1a90" font-weight="bold" >2</text></svg><span id="t59" class="t" style="left:73.50px;top:757.72px;font-size:12.5px;line-height:12.5px;color:#000;font-weight:bold;transform:scaleX(0.9416);">Model</span><span id="t60" class="t" style="left:139.00px;top:757.72px;font-size:12.5px;line-height:12.5px;color:#8c8c8c;transform:scaleX(0.8943);">Arkusz 1</span><span id="t61" class="t" style="left:214.50px;top:757.72px;font-size:12.5px;line-height:12.5px;color:#8c8c8c;transform:scaleX(0.9329);">Layout1</span><div class="b" style="left:835px;top:758px;width:128px;height:10px;background:#cdcdcd;"></div><svg class="i" style="left:298px;top:760.5px" width="6" height="9"><path d="M5.2 0.7L1.4 4.5L5.2 8.3" fill="none" stroke="#505050" stroke-width="1.6"/></svg><svg class="i" style="left:1288px;top:760.5px" width="6" height="9"><path d="M0.8 0.7L4.6 4.5L0.8 8.3" fill="none" stroke="#505050" stroke-width="1.6"/></svg>
</body></html>
